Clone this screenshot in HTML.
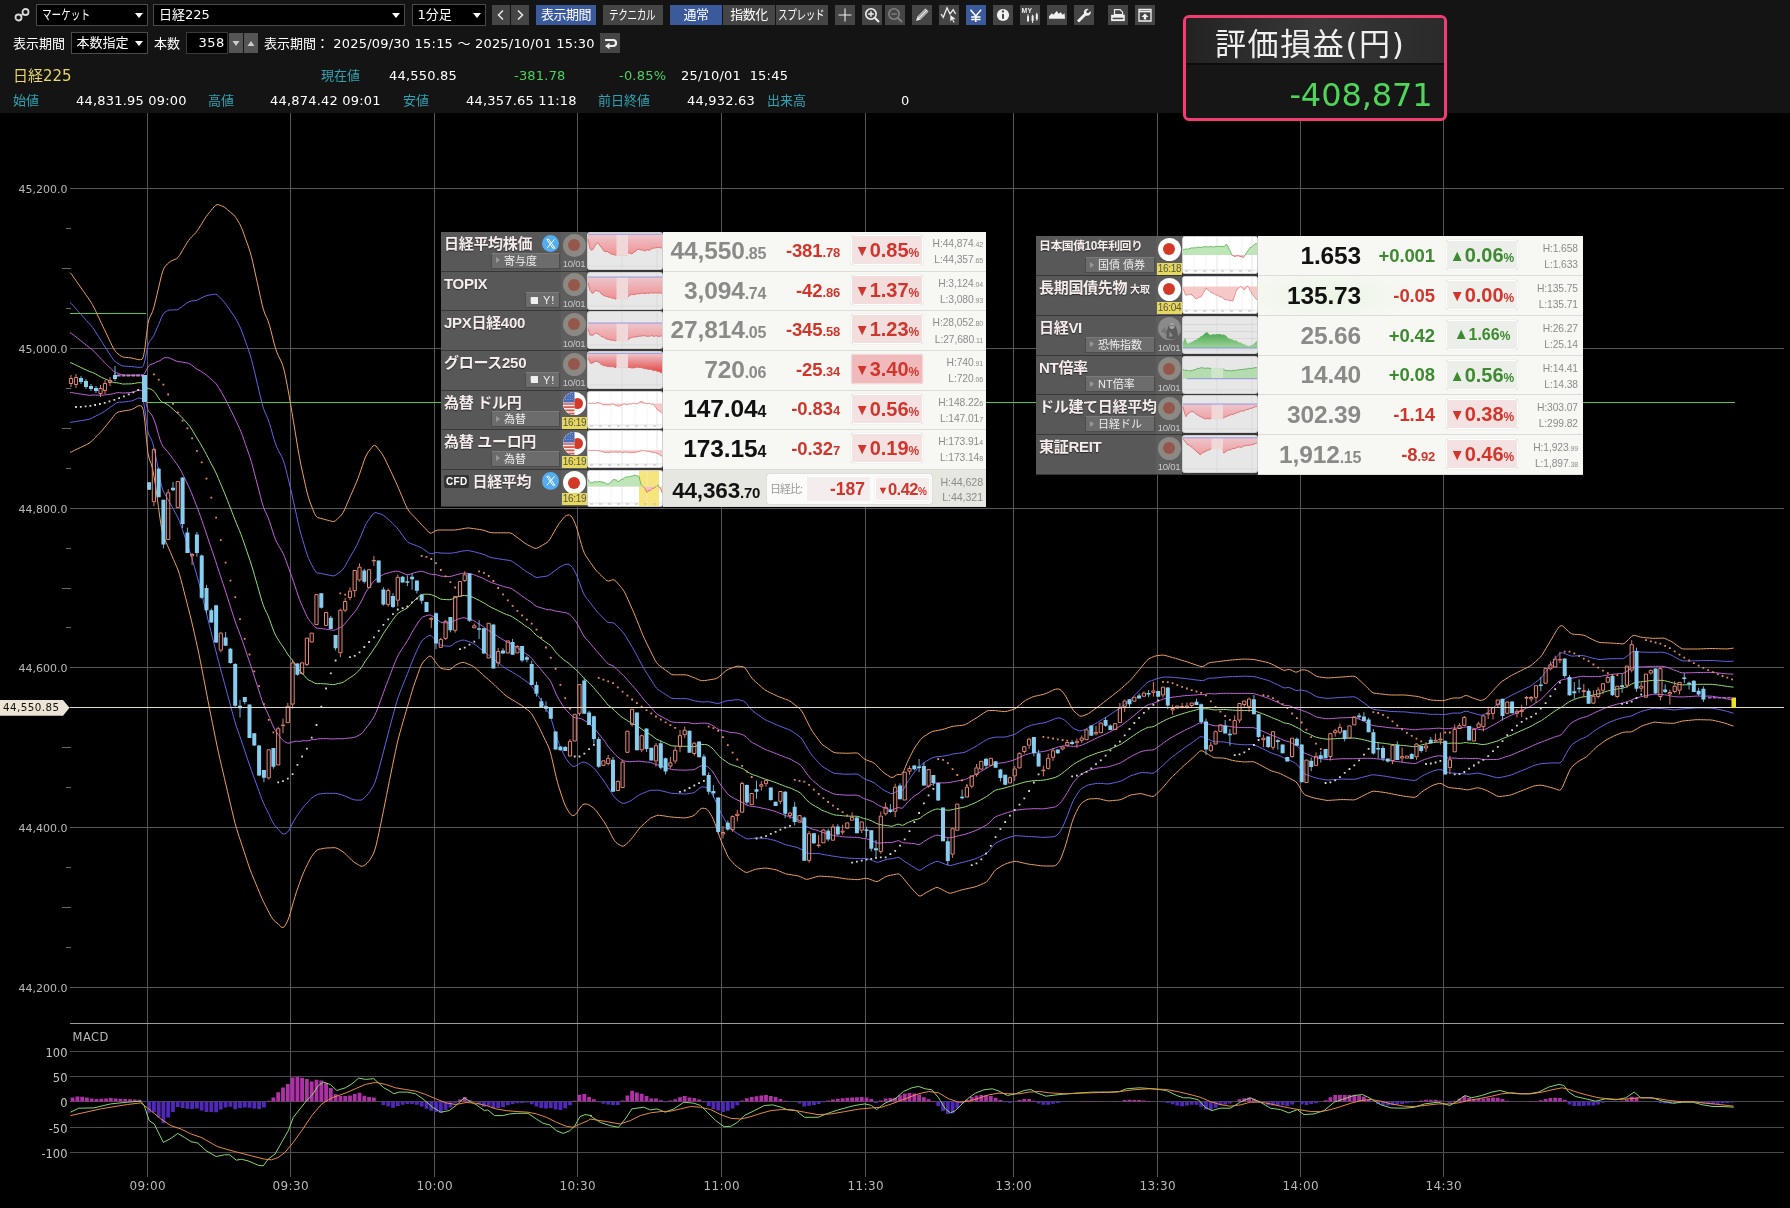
<!DOCTYPE html><html lang="ja"><head><meta charset="utf-8"><title>日経225 チャート</title><style>
*{box-sizing:border-box;margin:0;padding:0}
html,body{width:1790px;height:1208px;background:#000;overflow:hidden}
body{position:relative;font-family:"DejaVu Sans","Liberation Sans","Noto Sans CJK JP",sans-serif;color:#fff;font-size:13px}
#hdr{position:absolute;left:0;top:0;width:1790px;height:113px;background:#141414}
.a{position:absolute;white-space:nowrap}
.sel{position:absolute;height:22px;top:4px;background:#000;border:1px solid #4a4a4a;color:#fff;font-size:13px;line-height:20px;padding-left:5px}
.sel:after{content:"";position:absolute;right:4px;top:7.5px;border:4px solid transparent;border-top:5px solid #fff;border-bottom:0}
.btn{white-space:nowrap;overflow:hidden;position:absolute;top:5px;height:20px;background:#454545;color:#fff;text-align:center;font-size:13px;line-height:20px;letter-spacing:-0.5px}
.btn.on{background:#3a5a9c}
.ib{position:absolute;top:5px;width:20px;height:20px;background:#454545}
.ib svg{position:absolute;left:0;top:0}
.t{position:absolute;white-space:nowrap;font-size:13px;line-height:16px;color:#fff;letter-spacing:0.2px}
.kn{display:inline-block;transform:scaleX(.74);transform-origin:0 50%}
#nb:after{display:none}
.cy{color:#2fa3b4;letter-spacing:0}
.gr{color:#4fd060}
/* panels */
.pn{position:absolute;background:#383838;font-family:"Liberation Sans","Noto Sans CJK JP",sans-serif}
.row{position:absolute;left:0;width:100%;}
.nm{position:absolute;left:0;top:0;width:120px;height:100%;background:#585858}
.nm b{position:absolute;left:3px;top:2px;font-size:15px;line-height:20px;color:#f6ecec;white-space:nowrap;text-shadow:0 1px 1px rgba(0,0,0,.5);letter-spacing:-0.3px}
.sb{position:absolute;right:1px;bottom:2px;height:16px;background:#6c6c6c;border:1px solid #4c4c4c;border-top-color:#7a7a7a;color:#eee;font-size:11px;line-height:14px;padding-left:12px;white-space:nowrap}
.sb:before{content:"";position:absolute;left:4px;top:3.5px;border:3.5px solid transparent;border-left:4px solid #999;border-right:0}
.ic{position:absolute;left:120px;top:0;width:26px;height:100%;background:#5e5e5e}
.ic i{position:absolute;left:1.5px;top:1.5px;width:23px;height:23px;border-radius:50%;background:#8c8883}
.ic i:after{content:"";position:absolute;left:5.5px;top:5.5px;width:12px;height:12px;border-radius:50%;background:#95574b}
.ic i.on{background:#fff}
.ic i.on:after{background:#d03a26}
.ic span{position:absolute;left:0;width:26px;bottom:0.5px;text-align:center;font-size:9.6px;line-height:12px;color:#c8c8c8;letter-spacing:-0.3px}
.ic span.y{background:#e6d75e;color:#554;left:1px;width:25px;bottom:0.5px;font-size:10px}
.mc{position:absolute;left:146px;top:0;width:76px;height:100%;}
.mc svg{position:absolute;left:0;top:0}
.in{position:absolute;left:0;top:0;width:323px;height:100%}
.dt{position:absolute;left:222px;top:0;right:0;height:calc(100% + 1px);background:#f7f7f3;border-bottom:1px solid #dcdcd8;font-family:"Liberation Sans",sans-serif}
.pr{position:absolute;right:220px;top:1.7px;font-weight:bold;font-size:24.5px;line-height:34px;color:#8a8a88;white-space:nowrap;letter-spacing:-0.15px}
.pr.k{color:#111}
.pr s{text-decoration:none;font-size:16px;letter-spacing:-0.3px}
.ch{position:absolute;right:146px;top:3.7px;font-weight:bold;font-size:18.5px;line-height:30px;color:#d0362c;white-space:nowrap;letter-spacing:-0.1px}
.ch s{text-decoration:none;font-size:13px;letter-spacing:-0.2px}
.ch.g,.bd.g{color:#3d8a30}
.bd{position:absolute;left:188px;top:3px;width:72px;height:30px;border:1px solid #fff;border-radius:3px;background:#f4e2e2;box-shadow:0 0 1px rgba(0,0,0,.25);color:#d0362c;font-weight:bold;font-size:20px;line-height:28.5px;text-align:center;white-space:nowrap;letter-spacing:0}
.bd.g{background:#eceeea}
.bd s{text-decoration:none;font-size:12px}
.bd u{text-decoration:none;font-size:15px;display:inline-block;transform:scale(1,1.05);margin-right:0px;position:relative;top:-1px}
.hl{position:absolute;right:3px;top:4px;text-align:right;font-size:10.3px;line-height:16.1px;color:#8c8c8c;white-space:nowrap;letter-spacing:-0.1px}
.hl s{text-decoration:none;font-size:7px;line-height:8px}

.x{position:absolute;left:100.5px;top:2.5px;width:17.5px;height:17.5px;border-radius:50%;background:#55acee}
.x svg{position:absolute;left:0;top:0}
.cfd{display:inline-block;background:#333;color:#fff;font-size:10px;line-height:13px;padding:0 2px;border-radius:2px;vertical-align:2px;margin-right:3px;letter-spacing:.3px;text-shadow:none;font-family:"Liberation Sans",sans-serif}
</style></head><body><div id="wrap" style="position:absolute;left:0;top:0;width:1790px;height:1208px;will-change:transform">
<svg id="chart" width="1790" height="1208" viewBox="0 0 1790 1208" style="position:absolute;left:0;top:0">
<rect x="0" y="113" width="1790" height="1095" fill="#000"/>
<path d="M147.5 113V1177 M290.5 113V1177 M434.5 113V1177 M577.5 113V1177 M721.5 113V1177 M865.5 113V1177 M1013.5 113V1177 M1157.5 113V1177 M1300.5 113V1177 M1443.5 113V1177 M70 188.5H1784 M70 348.5H1784 M70 508.5H1784 M70 667.5H1784 M70 827.5H1784 M70 987.5H1784" stroke="#55555a" stroke-width="1" fill="none"/>
<path d="M70 1023.5H1784" stroke="#9c9c9c" stroke-width="1" fill="none"/>
<path d="M70 1051.5H1784 M70 1076.5H1784 M70 1101.5H1784 M70 1127.5H1784 M70 1152.5H1784" stroke="#4a4a50" stroke-width="1" fill="none"/>
<path d="M66 228.5H71 M62 268.5H71 M66 308.5H71 M66 388.5H71 M62 428.5H71 M66 468.5H71 M66 548.5H71 M62 588.5H71 M66 627.5H71 M66 707.5H71 M62 747.5H71 M66 787.5H71 M66 867.5H71 M62 907.5H71 M66 947.5H71" stroke="#666" stroke-width="1" fill="none"/>
<g font-family="'DejaVu Sans',Verdana,sans-serif" font-size="11" fill="#b8b8b8" text-anchor="end">
<text x="67.5" y="192.8">45,200.0</text>
<text x="67.5" y="352.8">45,000.0</text>
<text x="67.5" y="512.8">44,800.0</text>
<text x="67.5" y="671.8">44,600.0</text>
<text x="67.5" y="831.8">44,400.0</text>
<text x="67.5" y="991.8">44,200.0</text>
</g>
<g font-family="'DejaVu Sans',Verdana,sans-serif" font-size="11.5" fill="#c4c4c4" text-anchor="end">
<text x="67.5" y="1056.5">100</text>
<text x="67.5" y="1081.5">50</text>
<text x="67.5" y="1106.5">0</text>
<text x="67.5" y="1132.5">-50</text>
<text x="67.5" y="1157.5">-100</text>
</g>
<text x="72.5" y="1040.8" font-family="'DejaVu Sans',Verdana,sans-serif" font-size="11.5" letter-spacing="0.5" fill="#b8b8b8">MACD</text>
<g font-family="'DejaVu Sans',Verdana,sans-serif" font-size="12" fill="#b8b8b8" text-anchor="middle" letter-spacing="0.4">
<text x="147.8" y="1189.6">09:00</text>
<text x="290.8" y="1189.6">09:30</text>
<text x="434.8" y="1189.6">10:00</text>
<text x="577.8" y="1189.6">10:30</text>
<text x="721.8" y="1189.6">11:00</text>
<text x="865.8" y="1189.6">11:30</text>
<text x="1013.8" y="1189.6">13:00</text>
<text x="1157.8" y="1189.6">13:30</text>
<text x="1300.8" y="1189.6">14:00</text>
<text x="1443.8" y="1189.6">14:30</text>
</g>
<path d="M70 313.5H146 M147 402.5H1735" stroke="#55c83c" stroke-width="1" fill="none"/>
<path d="M70.0 272.7 L71.5 274.2 L73.0 276.3 L74.5 278.5 L76.0 280.6 L77.5 282.8 L79.0 284.9 L80.5 287.1 L82.0 289.2 L83.5 291.4 L85.0 293.5 L86.5 295.7 L88.0 297.8 L89.5 300.0 L91.0 302.2 L92.5 304.7 L94.0 307.6 L95.5 310.7 L97.0 313.9 L98.5 317.1 L100.0 320.2 L101.5 323.4 L103.0 326.6 L104.5 329.7 L106.0 332.9 L107.5 336.0 L109.0 339.2 L110.5 342.4 L112.0 345.5 L113.5 348.5 L115.0 350.8 L116.5 352.5 L118.0 353.8 L119.5 355.0 L121.0 356.1 L122.5 356.8 L124.0 357.2 L125.5 357.4 L127.0 357.5 L128.5 357.6 L130.0 357.8 L131.5 358.0 L133.0 358.3 L134.5 358.7 L136.0 359.1 L137.5 359.5 L139.0 359.7 L140.5 359.6 L142.0 359.3 L143.5 356.5 L145.0 347.6 L146.5 334.7 L148.0 323.5 L149.5 317.7 L151.0 315.0 L152.5 311.6 L154.0 306.8 L155.5 300.9 L157.0 294.5 L158.5 288.1 L160.0 281.8 L161.5 275.4 L163.0 270.5 L164.5 267.2 L166.0 265.5 L167.5 263.8 L169.0 262.4 L170.5 261.3 L172.0 260.7 L173.5 260.0 L175.0 259.3 L176.5 258.7 L178.0 257.4 L179.5 255.5 L181.0 253.0 L182.5 250.4 L184.0 247.9 L185.5 245.4 L187.0 242.9 L188.5 240.6 L190.0 238.6 L191.5 237.0 L193.0 235.6 L194.5 234.1 L196.0 232.4 L197.5 230.4 L199.0 228.1 L200.5 225.7 L202.0 223.3 L203.5 220.8 L205.0 218.4 L206.5 216.2 L208.0 214.2 L209.5 212.4 L211.0 210.5 L212.5 208.7 L214.0 206.9 L215.5 205.4 L217.0 204.7 L218.5 204.7 L220.0 205.3 L221.5 205.8 L223.0 206.4 L224.5 207.3 L226.0 208.4 L227.5 209.7 L229.0 210.9 L230.5 212.2 L232.0 213.5 L233.5 214.7 L235.0 216.4 L236.5 218.5 L238.0 221.0 L239.5 223.5 L241.0 226.6 L242.5 230.2 L244.0 234.4 L245.5 238.6 L247.0 242.8 L248.5 247.0 L250.0 251.5 L251.5 256.9 L253.0 263.1 L254.5 270.0 L256.0 276.8 L257.5 283.7 L259.0 290.5 L260.5 297.4 L262.0 304.2 L263.5 309.8 L265.0 314.2 L266.5 317.2 L268.0 320.8 L269.5 325.4 L271.0 331.0 L272.5 337.0 L274.0 343.0 L275.5 348.3 L277.0 352.7 L278.5 356.0 L280.0 359.0 L281.5 362.0 L283.0 366.1 L284.5 371.8 L286.0 379.1 L287.5 386.9 L289.0 395.0 L290.5 403.5 L292.0 412.5 L293.5 421.7 L295.0 430.8 L296.5 440.0 L298.0 449.2 L299.5 457.6 L301.0 465.3 L302.5 472.1 L304.0 478.9 L305.5 485.7 L307.0 492.1 L308.5 497.6 L310.0 502.1 L311.5 506.0 L313.0 509.8 L314.5 513.5 L316.0 516.1 L317.5 517.5 L319.0 517.9 L320.5 518.3 L322.0 518.7 L323.5 519.1 L325.0 519.5 L326.5 519.9 L328.0 520.3 L329.5 520.7 L331.0 521.1 L332.5 521.5 L334.0 521.4 L335.5 520.7 L337.0 519.4 L338.5 517.9 L340.0 516.4 L341.5 514.9 L343.0 512.7 L344.5 509.9 L346.0 506.4 L347.5 502.9 L349.0 499.4 L350.5 495.9 L352.0 492.5 L353.5 489.1 L355.0 485.7 L356.5 482.2 L358.0 478.3 L359.5 474.1 L361.0 469.7 L362.5 465.3 L364.0 460.9 L365.5 457.0 L367.0 454.0 L368.5 451.7 L370.0 449.8 L371.5 447.8 L373.0 445.9 L374.5 445.3 L376.0 446.0 L377.5 448.0 L379.0 449.9 L380.5 451.8 L382.0 453.9 L383.5 456.3 L385.0 459.2 L386.5 462.3 L388.0 465.4 L389.5 468.5 L391.0 471.7 L392.5 474.8 L394.0 478.0 L395.5 481.3 L397.0 484.7 L398.5 488.2 L400.0 491.7 L401.5 495.2 L403.0 498.8 L404.5 502.3 L406.0 505.8 L407.5 508.8 L409.0 511.1 L410.5 512.9 L412.0 514.5 L413.5 516.1 L415.0 517.6 L416.5 519.2 L418.0 520.8 L419.5 522.4 L421.0 524.0 L422.5 525.6 L424.0 527.2 L425.5 528.8 L427.0 530.4 L428.5 532.0 L430.0 533.0 L431.5 533.1 L433.0 532.3 L434.5 531.4 L436.0 530.6 L437.5 530.1 L439.0 530.0 L440.5 530.0 L442.0 530.0 L443.5 530.0 L445.0 530.0 L446.5 530.0 L448.0 530.0 L449.5 530.0 L451.0 530.0 L452.5 530.0 L454.0 530.0 L455.5 529.9 L457.0 529.7 L458.5 529.5 L460.0 529.2 L461.5 529.0 L463.0 528.7 L464.5 528.4 L466.0 528.2 L467.5 528.0 L469.0 528.0 L470.5 528.2 L472.0 528.4 L473.5 528.6 L475.0 528.8 L476.5 529.0 L478.0 529.3 L479.5 529.5 L481.0 529.7 L482.5 530.0 L484.0 530.4 L485.5 530.9 L487.0 531.4 L488.5 532.0 L490.0 532.4 L491.5 532.7 L493.0 532.8 L494.5 532.8 L496.0 532.8 L497.5 532.8 L499.0 532.8 L500.5 532.8 L502.0 532.8 L503.5 532.8 L505.0 532.8 L506.5 532.8 L508.0 532.8 L509.5 532.8 L511.0 533.2 L512.5 533.9 L514.0 535.0 L515.5 536.2 L517.0 537.3 L518.5 538.4 L520.0 539.5 L521.5 540.6 L523.0 541.8 L524.5 542.9 L526.0 543.9 L527.5 544.8 L529.0 545.5 L530.5 546.2 L532.0 547.0 L533.5 547.8 L535.0 548.3 L536.5 548.3 L538.0 547.8 L539.5 546.9 L541.0 546.1 L542.5 545.2 L544.0 544.3 L545.5 543.4 L547.0 542.5 L548.5 541.1 L550.0 539.1 L551.5 536.5 L553.0 533.9 L554.5 531.2 L556.0 528.6 L557.5 526.0 L559.0 523.7 L560.5 521.7 L562.0 519.9 L563.5 518.0 L565.0 516.4 L566.5 515.4 L568.0 515.0 L569.5 515.0 L571.0 516.0 L572.5 518.0 L574.0 521.0 L575.5 524.5 L577.0 528.9 L578.5 534.0 L580.0 539.4 L581.5 544.7 L583.0 549.6 L584.5 553.4 L586.0 556.2 L587.5 558.3 L589.0 560.5 L590.5 562.6 L592.0 564.8 L593.5 566.9 L595.0 569.0 L596.5 570.8 L598.0 572.4 L599.5 573.9 L601.0 575.3 L602.5 576.8 L604.0 578.2 L605.5 579.7 L607.0 580.7 L608.5 581.1 L610.0 580.8 L611.5 580.1 L613.0 579.7 L614.5 580.1 L616.0 581.3 L617.5 583.1 L619.0 584.8 L620.5 586.5 L622.0 588.3 L623.5 590.4 L625.0 593.0 L626.5 596.2 L628.0 599.6 L629.5 602.9 L631.0 606.3 L632.5 609.6 L634.0 613.1 L635.5 616.8 L637.0 620.5 L638.5 624.2 L640.0 628.0 L641.5 631.8 L643.0 635.4 L644.5 638.8 L646.0 642.0 L647.5 645.0 L649.0 648.0 L650.5 651.1 L652.0 654.1 L653.5 657.1 L655.0 660.1 L656.5 662.6 L658.0 664.4 L659.5 665.6 L661.0 666.7 L662.5 667.8 L664.0 669.0 L665.5 670.1 L667.0 671.2 L668.5 672.3 L670.0 673.5 L671.5 674.3 L673.0 674.7 L674.5 674.8 L676.0 674.8 L677.5 674.8 L679.0 674.8 L680.5 674.8 L682.0 674.8 L683.5 674.8 L685.0 674.8 L686.5 675.0 L688.0 675.3 L689.5 675.9 L691.0 676.5 L692.5 677.1 L694.0 677.7 L695.5 678.3 L697.0 679.0 L698.5 679.6 L700.0 680.2 L701.5 680.6 L703.0 680.7 L704.5 680.6 L706.0 680.4 L707.5 680.1 L709.0 679.9 L710.5 679.6 L712.0 679.4 L713.5 679.2 L715.0 678.9 L716.5 678.4 L718.0 677.6 L719.5 676.4 L721.0 675.1 L722.5 673.8 L724.0 672.4 L725.5 671.1 L727.0 670.0 L728.5 669.2 L730.0 668.7 L731.5 668.1 L733.0 667.5 L734.5 667.0 L736.0 666.5 L737.5 666.2 L739.0 666.3 L740.5 666.5 L742.0 666.6 L743.5 667.0 L745.0 668.1 L746.5 669.9 L748.0 672.2 L749.5 674.6 L751.0 676.9 L752.5 678.8 L754.0 680.4 L755.5 681.7 L757.0 683.1 L758.5 684.4 L760.0 685.7 L761.5 687.1 L763.0 688.4 L764.5 689.6 L766.0 690.6 L767.5 691.3 L769.0 692.1 L770.5 692.8 L772.0 693.5 L773.5 694.3 L775.0 695.0 L776.5 695.7 L778.0 696.4 L779.5 697.0 L781.0 697.5 L782.5 698.1 L784.0 698.7 L785.5 699.3 L787.0 699.8 L788.5 700.4 L790.0 701.2 L791.5 702.2 L793.0 703.4 L794.5 704.6 L796.0 705.7 L797.5 706.9 L799.0 708.1 L800.5 709.5 L802.0 711.6 L803.5 714.2 L805.0 717.2 L806.5 720.2 L808.0 723.2 L809.5 726.2 L811.0 729.0 L812.5 731.4 L814.0 733.6 L815.5 735.7 L817.0 737.8 L818.5 739.8 L820.0 741.9 L821.5 743.7 L823.0 745.1 L824.5 746.1 L826.0 747.2 L827.5 748.2 L829.0 749.3 L830.5 750.3 L832.0 751.4 L833.5 752.2 L835.0 752.7 L836.5 752.9 L838.0 753.0 L839.5 753.0 L841.0 753.1 L842.5 753.1 L844.0 753.2 L845.5 753.2 L847.0 753.3 L848.5 753.2 L850.0 753.2 L851.5 753.1 L853.0 753.0 L854.5 753.0 L856.0 752.9 L857.5 753.2 L859.0 754.0 L860.5 755.4 L862.0 756.9 L863.5 758.3 L865.0 759.3 L866.5 760.0 L868.0 760.5 L869.5 761.1 L871.0 761.7 L872.5 762.2 L874.0 763.1 L875.5 764.3 L877.0 765.9 L878.5 767.4 L880.0 768.9 L881.5 770.4 L883.0 771.9 L884.5 773.2 L886.0 774.2 L887.5 775.2 L889.0 776.1 L890.5 777.1 L892.0 777.4 L893.5 777.0 L895.0 776.0 L896.5 775.0 L898.0 774.5 L899.5 774.5 L901.0 774.6 L902.5 773.2 L904.0 770.4 L905.5 766.6 L907.0 763.1 L908.5 759.8 L910.0 756.8 L911.5 753.8 L913.0 750.8 L914.5 748.1 L916.0 745.8 L917.5 743.8 L919.0 741.7 L920.5 739.7 L922.0 738.1 L923.5 736.8 L925.0 735.8 L926.5 734.9 L928.0 733.9 L929.5 733.0 L931.0 732.1 L932.5 731.5 L934.0 731.1 L935.5 730.8 L937.0 730.5 L938.5 730.3 L940.0 730.0 L941.5 729.7 L943.0 729.3 L944.5 728.9 L946.0 728.4 L947.5 727.9 L949.0 727.4 L950.5 726.9 L952.0 726.5 L953.5 726.2 L955.0 726.1 L956.5 725.9 L958.0 725.7 L959.5 725.6 L961.0 725.4 L962.5 725.3 L964.0 725.0 L965.5 724.4 L967.0 723.7 L968.5 722.8 L970.0 721.8 L971.5 720.9 L973.0 720.0 L974.5 719.1 L976.0 718.2 L977.5 717.2 L979.0 716.2 L980.5 715.2 L982.0 714.2 L983.5 713.2 L985.0 712.1 L986.5 711.3 L988.0 710.7 L989.5 710.5 L991.0 710.5 L992.5 710.5 L994.0 710.5 L995.5 710.6 L997.0 710.8 L998.5 711.0 L1000.0 711.2 L1001.5 711.3 L1003.0 711.5 L1004.5 711.6 L1006.0 711.5 L1007.5 711.1 L1009.0 710.7 L1010.5 710.3 L1012.0 709.8 L1013.5 709.4 L1015.0 708.7 L1016.5 707.7 L1018.0 706.4 L1019.5 705.2 L1021.0 703.9 L1022.5 702.6 L1024.0 701.4 L1025.5 700.4 L1027.0 699.5 L1028.5 698.8 L1030.0 698.1 L1031.5 697.4 L1033.0 696.8 L1034.5 696.3 L1036.0 696.0 L1037.5 695.7 L1039.0 695.3 L1040.5 695.0 L1042.0 694.7 L1043.5 694.3 L1045.0 693.9 L1046.5 693.3 L1048.0 692.6 L1049.5 691.8 L1051.0 691.1 L1052.5 690.4 L1054.0 689.7 L1055.5 689.2 L1057.0 689.0 L1058.5 689.0 L1060.0 689.6 L1061.5 690.8 L1063.0 692.5 L1064.5 694.5 L1066.0 696.8 L1067.5 699.5 L1069.0 702.5 L1070.5 705.5 L1072.0 708.3 L1073.5 710.5 L1075.0 712.2 L1076.5 713.4 L1078.0 714.7 L1079.5 715.8 L1081.0 716.2 L1082.5 716.1 L1084.0 715.5 L1085.5 714.9 L1087.0 714.3 L1088.5 713.5 L1090.0 712.6 L1091.5 711.5 L1093.0 710.4 L1094.5 709.3 L1096.0 708.2 L1097.5 707.1 L1099.0 706.0 L1100.5 704.8 L1102.0 703.7 L1103.5 702.5 L1105.0 701.3 L1106.5 700.2 L1108.0 699.0 L1109.5 697.8 L1111.0 696.7 L1112.5 695.5 L1114.0 694.3 L1115.5 693.1 L1117.0 692.0 L1118.5 690.8 L1120.0 689.6 L1121.5 688.3 L1123.0 687.0 L1124.5 685.7 L1126.0 684.3 L1127.5 683.0 L1129.0 681.6 L1130.5 680.1 L1132.0 678.5 L1133.5 676.7 L1135.0 674.9 L1136.5 673.1 L1138.0 671.3 L1139.5 669.5 L1141.0 667.7 L1142.5 665.8 L1144.0 664.0 L1145.5 662.1 L1147.0 660.4 L1148.5 659.1 L1150.0 658.2 L1151.5 657.6 L1153.0 656.9 L1154.5 656.3 L1156.0 655.9 L1157.5 655.6 L1159.0 655.4 L1160.5 655.3 L1162.0 655.1 L1163.5 655.2 L1165.0 655.4 L1166.5 655.8 L1168.0 656.2 L1169.5 656.7 L1171.0 657.1 L1172.5 657.5 L1174.0 657.9 L1175.5 658.4 L1177.0 658.8 L1178.5 659.3 L1180.0 659.7 L1181.5 660.2 L1183.0 660.6 L1184.5 661.1 L1186.0 661.5 L1187.5 662.0 L1189.0 662.5 L1190.5 663.1 L1192.0 663.6 L1193.5 664.1 L1195.0 664.6 L1196.5 665.1 L1198.0 665.6 L1199.5 666.1 L1201.0 666.5 L1202.5 666.5 L1204.0 666.0 L1205.5 665.0 L1207.0 664.0 L1208.5 663.2 L1210.0 662.7 L1211.5 662.4 L1213.0 662.2 L1214.5 662.1 L1216.0 661.9 L1217.5 661.7 L1219.0 661.5 L1220.5 661.3 L1222.0 661.1 L1223.5 660.9 L1225.0 660.7 L1226.5 660.6 L1228.0 660.4 L1229.5 660.2 L1231.0 660.0 L1232.5 659.9 L1234.0 659.8 L1235.5 659.7 L1237.0 659.5 L1238.5 659.4 L1240.0 659.3 L1241.5 659.2 L1243.0 659.1 L1244.5 659.1 L1246.0 659.1 L1247.5 659.2 L1249.0 659.2 L1250.5 659.3 L1252.0 659.4 L1253.5 659.5 L1255.0 659.7 L1256.5 660.0 L1258.0 660.4 L1259.5 660.7 L1261.0 661.0 L1262.5 661.4 L1264.0 661.7 L1265.5 662.0 L1267.0 662.4 L1268.5 662.8 L1270.0 663.3 L1271.5 664.0 L1273.0 664.8 L1274.5 665.5 L1276.0 666.3 L1277.5 667.0 L1279.0 667.8 L1280.5 668.7 L1282.0 669.6 L1283.5 670.2 L1285.0 670.3 L1286.5 669.9 L1288.0 669.5 L1289.5 669.5 L1291.0 670.0 L1292.5 670.7 L1294.0 671.5 L1295.5 672.1 L1297.0 672.0 L1298.5 671.4 L1300.0 670.5 L1301.5 670.0 L1303.0 669.9 L1304.5 669.9 L1306.0 670.1 L1307.5 670.6 L1309.0 671.5 L1310.5 672.4 L1312.0 673.4 L1313.5 674.4 L1315.0 675.4 L1316.5 676.2 L1318.0 676.7 L1319.5 677.0 L1321.0 677.2 L1322.5 677.4 L1324.0 677.6 L1325.5 677.8 L1327.0 677.9 L1328.5 677.9 L1330.0 677.8 L1331.5 677.7 L1333.0 677.6 L1334.5 677.5 L1336.0 677.4 L1337.5 677.3 L1339.0 677.2 L1340.5 677.1 L1342.0 677.0 L1343.5 676.9 L1345.0 676.8 L1346.5 676.7 L1348.0 676.5 L1349.5 676.4 L1351.0 676.3 L1352.5 676.2 L1354.0 676.2 L1355.5 676.8 L1357.0 677.8 L1358.5 679.2 L1360.0 680.6 L1361.5 682.0 L1363.0 683.4 L1364.5 684.9 L1366.0 686.4 L1367.5 687.9 L1369.0 689.3 L1370.5 690.8 L1372.0 692.1 L1373.5 692.9 L1375.0 693.3 L1376.5 693.4 L1378.0 693.6 L1379.5 693.8 L1381.0 694.0 L1382.5 694.1 L1384.0 694.3 L1385.5 694.5 L1387.0 694.7 L1388.5 694.8 L1390.0 694.9 L1391.5 695.0 L1393.0 695.0 L1394.5 695.0 L1396.0 695.0 L1397.5 695.0 L1399.0 695.0 L1400.5 695.0 L1402.0 695.0 L1403.5 695.0 L1405.0 695.1 L1406.5 695.2 L1408.0 695.3 L1409.5 695.5 L1411.0 695.7 L1412.5 695.9 L1414.0 696.0 L1415.5 696.2 L1417.0 696.4 L1418.5 696.7 L1420.0 697.1 L1421.5 697.5 L1423.0 697.9 L1424.5 698.3 L1426.0 698.7 L1427.5 699.2 L1429.0 699.6 L1430.5 699.9 L1432.0 700.1 L1433.5 700.2 L1435.0 700.3 L1436.5 700.4 L1438.0 700.5 L1439.5 700.6 L1441.0 700.7 L1442.5 700.7 L1444.0 700.5 L1445.5 700.1 L1447.0 699.7 L1448.5 699.3 L1450.0 698.8 L1451.5 698.4 L1453.0 698.1 L1454.5 698.0 L1456.0 698.0 L1457.5 698.0 L1459.0 698.0 L1460.5 697.7 L1462.0 697.2 L1463.5 696.3 L1465.0 695.7 L1466.5 695.6 L1468.0 695.9 L1469.5 696.6 L1471.0 697.2 L1472.5 697.8 L1474.0 698.4 L1475.5 698.9 L1477.0 699.4 L1478.5 700.0 L1480.0 700.3 L1481.5 700.3 L1483.0 699.9 L1484.5 699.3 L1486.0 698.3 L1487.5 696.9 L1489.0 695.2 L1490.5 693.5 L1492.0 691.8 L1493.5 690.2 L1495.0 688.5 L1496.5 686.9 L1498.0 685.3 L1499.5 683.6 L1501.0 682.2 L1502.5 681.0 L1504.0 680.1 L1505.5 679.1 L1507.0 678.2 L1508.5 677.2 L1510.0 676.3 L1511.5 675.4 L1513.0 674.6 L1514.5 673.8 L1516.0 673.1 L1517.5 672.4 L1519.0 671.6 L1520.5 670.9 L1522.0 670.1 L1523.5 669.3 L1525.0 668.6 L1526.5 667.9 L1528.0 667.1 L1529.5 666.4 L1531.0 665.4 L1532.5 664.3 L1534.0 663.0 L1535.5 661.6 L1537.0 660.3 L1538.5 659.0 L1540.0 657.5 L1541.5 655.7 L1543.0 653.4 L1544.5 650.9 L1546.0 648.4 L1547.5 645.9 L1549.0 643.4 L1550.5 640.8 L1552.0 638.3 L1553.5 635.7 L1555.0 633.1 L1556.5 630.6 L1558.0 628.4 L1559.5 626.4 L1561.0 625.7 L1562.5 625.9 L1564.0 627.2 L1565.5 628.6 L1567.0 630.0 L1568.5 631.5 L1570.0 632.8 L1571.5 633.7 L1573.0 634.2 L1574.5 634.3 L1576.0 634.4 L1577.5 634.5 L1579.0 634.6 L1580.5 634.7 L1582.0 634.9 L1583.5 635.2 L1585.0 635.7 L1586.5 636.4 L1588.0 637.2 L1589.5 638.0 L1591.0 638.8 L1592.5 639.5 L1594.0 640.2 L1595.5 640.9 L1597.0 641.6 L1598.5 642.1 L1600.0 642.5 L1601.5 642.6 L1603.0 642.7 L1604.5 642.7 L1606.0 642.8 L1607.5 642.8 L1609.0 642.9 L1610.5 643.0 L1612.0 643.1 L1613.5 643.2 L1615.0 643.3 L1616.5 643.4 L1618.0 643.5 L1619.5 643.6 L1621.0 643.8 L1622.5 643.9 L1624.0 643.5 L1625.5 642.5 L1627.0 641.0 L1628.5 639.5 L1630.0 638.0 L1631.5 636.5 L1633.0 635.6 L1634.5 635.4 L1636.0 635.8 L1637.5 636.2 L1639.0 636.7 L1640.5 637.0 L1642.0 637.3 L1643.5 637.5 L1645.0 637.7 L1646.5 637.8 L1648.0 637.9 L1649.5 638.0 L1651.0 638.2 L1652.5 638.3 L1654.0 638.3 L1655.5 638.3 L1657.0 638.3 L1658.5 638.2 L1660.0 638.2 L1661.5 638.1 L1663.0 638.1 L1664.5 638.4 L1666.0 638.9 L1667.5 639.7 L1669.0 640.4 L1670.5 641.1 L1672.0 641.9 L1673.5 642.9 L1675.0 644.0 L1676.5 645.1 L1678.0 646.1 L1679.5 647.2 L1681.0 648.2 L1682.5 648.8 L1684.0 649.0 L1685.5 649.0 L1687.0 649.0 L1688.5 649.0 L1690.0 649.0 L1691.5 649.0 L1693.0 649.0 L1694.5 649.0 L1696.0 649.0 L1697.5 649.0 L1699.0 648.9 L1700.5 648.9 L1702.0 648.8 L1703.5 648.8 L1705.0 648.7 L1706.5 648.7 L1708.0 648.6 L1709.5 648.6 L1711.0 648.5 L1712.5 648.5 L1714.0 648.6 L1715.5 648.6 L1717.0 648.7 L1718.5 648.7 L1720.0 648.8 L1721.5 648.8 L1723.0 648.9 L1724.5 648.9 L1726.0 648.9 L1727.5 648.9 L1729.0 648.7 L1730.5 648.5 L1732.0 648.3 L1733.5 648.1" stroke="#f0a05e" stroke-width="1" fill="none" stroke-linejoin="round"/>
<path d="M70.0 452.3 L71.5 451.8 L73.0 451.1 L74.5 450.3 L76.0 449.6 L77.5 448.9 L79.0 448.2 L80.5 447.5 L82.0 446.7 L83.5 446.0 L85.0 445.3 L86.5 444.6 L88.0 443.9 L89.5 442.9 L91.0 441.7 L92.5 440.3 L94.0 438.8 L95.5 437.3 L97.0 435.7 L98.5 434.2 L100.0 432.7 L101.5 431.1 L103.0 429.4 L104.5 427.6 L106.0 425.7 L107.5 423.8 L109.0 422.0 L110.5 420.1 L112.0 418.2 L113.5 416.4 L115.0 414.5 L116.5 413.0 L118.0 412.0 L119.5 411.6 L121.0 411.4 L122.5 411.1 L124.0 410.9 L125.5 410.6 L127.0 410.4 L128.5 410.2 L130.0 409.9 L131.5 409.5 L133.0 408.9 L134.5 408.1 L136.0 407.1 L137.5 406.2 L139.0 405.7 L140.5 405.8 L142.0 406.5 L143.5 410.7 L145.0 422.8 L146.5 439.8 L148.0 453.6 L149.5 459.8 L151.0 463.2 L152.5 468.5 L154.0 476.3 L155.5 485.6 L157.0 496.3 L158.5 507.5 L160.0 518.6 L161.5 527.8 L163.0 534.4 L164.5 538.5 L166.0 542.1 L167.5 545.6 L169.0 549.0 L170.5 552.5 L172.0 555.9 L173.5 559.4 L175.0 562.8 L176.5 566.3 L178.0 570.0 L179.5 574.5 L181.0 579.8 L182.5 585.6 L184.0 591.4 L185.5 597.3 L187.0 603.1 L188.5 608.9 L190.0 614.8 L191.5 620.9 L193.0 627.3 L194.5 633.9 L196.0 640.6 L197.5 647.3 L199.0 654.4 L200.5 661.8 L202.0 669.6 L203.5 677.4 L205.0 685.2 L206.5 693.0 L208.0 700.8 L209.5 708.4 L211.0 716.0 L212.5 723.4 L214.0 730.9 L215.5 738.4 L217.0 745.7 L218.5 752.7 L220.0 759.3 L221.5 765.7 L223.0 772.1 L224.5 778.6 L226.0 785.0 L227.5 791.4 L229.0 797.9 L230.5 804.3 L232.0 810.7 L233.5 817.1 L235.0 823.1 L236.5 828.5 L238.0 833.2 L239.5 837.8 L241.0 842.3 L242.5 846.8 L244.0 851.4 L245.5 855.9 L247.0 860.4 L248.5 865.0 L250.0 869.3 L251.5 873.3 L253.0 877.0 L254.5 880.6 L256.0 884.2 L257.5 887.8 L259.0 891.4 L260.5 895.0 L262.0 898.5 L263.5 901.8 L265.0 904.8 L266.5 907.6 L268.0 910.5 L269.5 913.4 L271.0 916.2 L272.5 918.7 L274.0 920.5 L275.5 921.8 L277.0 923.0 L278.5 924.3 L280.0 925.7 L281.5 927.3 L283.0 927.5 L284.5 926.5 L286.0 924.1 L287.5 921.1 L289.0 917.2 L290.5 912.2 L292.0 906.9 L293.5 901.7 L295.0 896.6 L296.5 891.8 L298.0 887.5 L299.5 883.3 L301.0 879.1 L302.5 875.1 L304.0 871.6 L305.5 868.3 L307.0 865.2 L308.5 862.2 L310.0 859.2 L311.5 856.7 L313.0 854.5 L314.5 852.7 L316.0 851.0 L317.5 849.9 L319.0 849.2 L320.5 849.0 L322.0 848.7 L323.5 848.4 L325.0 848.2 L326.5 848.0 L328.0 847.9 L329.5 847.9 L331.0 847.8 L332.5 847.7 L334.0 847.7 L335.5 847.8 L337.0 848.3 L338.5 849.0 L340.0 849.9 L341.5 850.8 L343.0 851.8 L344.5 853.0 L346.0 854.4 L347.5 855.9 L349.0 857.4 L350.5 858.9 L352.0 860.4 L353.5 861.7 L355.0 862.8 L356.5 863.6 L358.0 864.5 L359.5 865.4 L361.0 866.2 L362.5 866.3 L364.0 865.7 L365.5 864.5 L367.0 863.3 L368.5 861.7 L370.0 859.7 L371.5 857.1 L373.0 854.5 L374.5 850.9 L376.0 845.8 L377.5 839.3 L379.0 832.3 L380.5 825.2 L382.0 817.9 L383.5 810.5 L385.0 803.0 L386.5 795.5 L388.0 788.0 L389.5 780.5 L391.0 773.1 L392.5 765.7 L394.0 758.4 L395.5 751.2 L397.0 744.2 L398.5 737.9 L400.0 732.4 L401.5 727.2 L403.0 721.9 L404.5 716.8 L406.0 711.6 L407.5 706.5 L409.0 701.5 L410.5 696.4 L412.0 691.4 L413.5 686.7 L415.0 682.3 L416.5 678.0 L418.0 673.8 L419.5 669.5 L421.0 665.8 L422.5 663.0 L424.0 661.1 L425.5 659.6 L427.0 658.1 L428.5 656.6 L430.0 656.0 L431.5 656.6 L433.0 658.4 L434.5 660.5 L436.0 662.6 L437.5 664.6 L439.0 666.5 L440.5 667.9 L442.0 668.7 L443.5 668.9 L445.0 669.1 L446.5 669.3 L448.0 669.5 L449.5 669.5 L451.0 668.9 L452.5 667.8 L454.0 666.4 L455.5 665.2 L457.0 664.3 L458.5 663.7 L460.0 663.1 L461.5 662.6 L463.0 662.4 L464.5 662.6 L466.0 663.2 L467.5 663.8 L469.0 664.4 L470.5 665.0 L472.0 665.7 L473.5 666.6 L475.0 667.8 L476.5 669.1 L478.0 670.4 L479.5 671.7 L481.0 673.0 L482.5 674.4 L484.0 675.7 L485.5 677.0 L487.0 678.3 L488.5 679.6 L490.0 681.0 L491.5 682.3 L493.0 683.6 L494.5 685.0 L496.0 686.5 L497.5 687.9 L499.0 689.3 L500.5 690.8 L502.0 692.2 L503.5 693.6 L505.0 695.0 L506.5 696.2 L508.0 697.2 L509.5 698.1 L511.0 699.0 L512.5 699.9 L514.0 700.8 L515.5 701.7 L517.0 702.6 L518.5 703.5 L520.0 704.4 L521.5 705.4 L523.0 706.5 L524.5 707.6 L526.0 708.8 L527.5 709.9 L529.0 711.0 L530.5 712.5 L532.0 714.5 L533.5 717.0 L535.0 719.7 L536.5 722.4 L538.0 725.2 L539.5 728.1 L541.0 731.2 L542.5 734.3 L544.0 737.5 L545.5 740.6 L547.0 743.7 L548.5 746.9 L550.0 751.2 L551.5 756.6 L553.0 763.2 L554.5 769.8 L556.0 776.4 L557.5 782.3 L559.0 787.5 L560.5 792.0 L562.0 796.6 L563.5 801.1 L565.0 804.9 L566.5 808.0 L568.0 810.5 L569.5 812.9 L571.0 814.7 L572.5 815.6 L574.0 815.5 L575.5 814.4 L577.0 812.6 L578.5 810.3 L580.0 808.1 L581.5 806.0 L583.0 804.6 L584.5 804.0 L586.0 804.0 L587.5 804.3 L589.0 804.9 L590.5 805.9 L592.0 806.9 L593.5 808.0 L595.0 809.4 L596.5 811.1 L598.0 813.2 L599.5 815.3 L601.0 817.4 L602.5 819.5 L604.0 821.7 L605.5 824.1 L607.0 826.8 L608.5 829.6 L610.0 832.5 L611.5 835.4 L613.0 838.2 L614.5 840.6 L616.0 842.4 L617.5 843.6 L619.0 844.5 L620.5 845.4 L622.0 846.1 L623.5 846.1 L625.0 845.2 L626.5 843.9 L628.0 842.6 L629.5 841.1 L631.0 839.4 L632.5 837.5 L634.0 835.5 L635.5 833.6 L637.0 831.6 L638.5 829.6 L640.0 827.8 L641.5 826.2 L643.0 824.8 L644.5 823.4 L646.0 822.0 L647.5 820.7 L649.0 819.4 L650.5 818.2 L652.0 817.4 L653.5 816.8 L655.0 816.2 L656.5 815.6 L658.0 815.3 L659.5 815.2 L661.0 815.5 L662.5 815.7 L664.0 815.9 L665.5 816.2 L667.0 816.4 L668.5 816.7 L670.0 816.9 L671.5 817.0 L673.0 817.2 L674.5 817.3 L676.0 817.4 L677.5 817.5 L679.0 817.6 L680.5 817.7 L682.0 817.8 L683.5 817.9 L685.0 817.9 L686.5 817.7 L688.0 817.4 L689.5 817.0 L691.0 816.6 L692.5 816.1 L694.0 815.4 L695.5 814.2 L697.0 812.6 L698.5 810.8 L700.0 809.3 L701.5 808.4 L703.0 808.2 L704.5 808.4 L706.0 808.7 L707.5 809.9 L709.0 811.7 L710.5 814.1 L712.0 816.6 L713.5 819.9 L715.0 823.7 L716.5 828.0 L718.0 832.2 L719.5 836.5 L721.0 840.5 L722.5 844.2 L724.0 847.7 L725.5 851.1 L727.0 854.6 L728.5 857.4 L730.0 859.6 L731.5 861.2 L733.0 862.8 L734.5 864.4 L736.0 865.8 L737.5 867.0 L739.0 868.1 L740.5 869.1 L742.0 870.2 L743.5 871.2 L745.0 872.1 L746.5 872.4 L748.0 872.2 L749.5 871.6 L751.0 871.0 L752.5 870.4 L754.0 869.8 L755.5 869.3 L757.0 869.0 L758.5 868.8 L760.0 868.6 L761.5 868.4 L763.0 868.3 L764.5 868.1 L766.0 868.1 L767.5 868.3 L769.0 868.5 L770.5 868.8 L772.0 869.0 L773.5 869.3 L775.0 869.6 L776.5 870.0 L778.0 870.6 L779.5 871.2 L781.0 871.8 L782.5 872.5 L784.0 873.1 L785.5 873.7 L787.0 874.1 L788.5 874.4 L790.0 874.6 L791.5 874.8 L793.0 875.1 L794.5 875.3 L796.0 875.5 L797.5 875.8 L799.0 876.2 L800.5 876.8 L802.0 877.5 L803.5 878.2 L805.0 879.0 L806.5 879.3 L808.0 879.2 L809.5 878.8 L811.0 878.3 L812.5 877.9 L814.0 877.5 L815.5 877.0 L817.0 876.6 L818.5 876.3 L820.0 876.1 L821.5 876.2 L823.0 876.3 L824.5 876.4 L826.0 876.5 L827.5 876.6 L829.0 876.7 L830.5 876.8 L832.0 876.9 L833.5 877.0 L835.0 877.2 L836.5 877.4 L838.0 877.6 L839.5 877.9 L841.0 878.1 L842.5 878.3 L844.0 878.6 L845.5 878.8 L847.0 879.0 L848.5 879.1 L850.0 879.2 L851.5 879.3 L853.0 879.4 L854.5 879.5 L856.0 879.6 L857.5 879.6 L859.0 879.5 L860.5 879.2 L862.0 878.9 L863.5 878.6 L865.0 878.3 L866.5 878.3 L868.0 878.6 L869.5 879.1 L871.0 879.7 L872.5 880.3 L874.0 880.9 L875.5 881.4 L877.0 881.5 L878.5 881.0 L880.0 880.1 L881.5 879.2 L883.0 878.3 L884.5 877.4 L886.0 876.6 L887.5 876.0 L889.0 875.6 L890.5 875.3 L892.0 875.0 L893.5 874.7 L895.0 874.4 L896.5 874.1 L898.0 873.8 L899.5 874.3 L901.0 875.5 L902.5 877.3 L904.0 879.2 L905.5 881.0 L907.0 882.9 L908.5 884.7 L910.0 886.5 L911.5 888.2 L913.0 889.9 L914.5 891.5 L916.0 893.1 L917.5 894.8 L919.0 895.9 L920.5 896.0 L922.0 895.3 L923.5 894.3 L925.0 893.3 L926.5 892.4 L928.0 891.5 L929.5 890.8 L931.0 890.0 L932.5 889.2 L934.0 888.5 L935.5 887.7 L937.0 887.5 L938.5 887.8 L940.0 888.6 L941.5 889.3 L943.0 890.1 L944.5 890.9 L946.0 891.7 L947.5 892.5 L949.0 893.0 L950.5 893.2 L952.0 892.9 L953.5 892.4 L955.0 892.0 L956.5 891.5 L958.0 891.0 L959.5 890.6 L961.0 890.1 L962.5 889.7 L964.0 889.4 L965.5 889.0 L967.0 888.7 L968.5 888.4 L970.0 888.0 L971.5 887.7 L973.0 887.4 L974.5 887.0 L976.0 886.5 L977.5 886.0 L979.0 885.4 L980.5 884.7 L982.0 884.1 L983.5 883.4 L985.0 882.7 L986.5 881.8 L988.0 880.4 L989.5 878.4 L991.0 876.1 L992.5 873.8 L994.0 871.7 L995.5 870.0 L997.0 868.8 L998.5 867.9 L1000.0 867.0 L1001.5 866.1 L1003.0 865.2 L1004.5 864.4 L1006.0 863.8 L1007.5 863.2 L1009.0 862.8 L1010.5 862.3 L1012.0 861.9 L1013.5 861.4 L1015.0 861.3 L1016.5 861.4 L1018.0 861.7 L1019.5 862.1 L1021.0 862.4 L1022.5 862.8 L1024.0 863.1 L1025.5 863.5 L1027.0 863.8 L1028.5 864.1 L1030.0 864.3 L1031.5 864.5 L1033.0 864.7 L1034.5 864.9 L1036.0 865.1 L1037.5 865.3 L1039.0 865.5 L1040.5 865.7 L1042.0 865.9 L1043.5 866.0 L1045.0 866.0 L1046.5 866.0 L1048.0 866.0 L1049.5 866.0 L1051.0 866.0 L1052.5 866.0 L1054.0 866.0 L1055.5 865.4 L1057.0 864.3 L1058.5 862.6 L1060.0 860.2 L1061.5 856.9 L1063.0 852.8 L1064.5 848.6 L1066.0 843.9 L1067.5 838.7 L1069.0 833.2 L1070.5 827.7 L1072.0 822.5 L1073.5 818.2 L1075.0 814.6 L1076.5 811.6 L1078.0 808.6 L1079.5 805.8 L1081.0 803.8 L1082.5 802.4 L1084.0 801.5 L1085.5 800.5 L1087.0 799.7 L1088.5 799.2 L1090.0 798.9 L1091.5 798.8 L1093.0 798.8 L1094.5 798.7 L1096.0 798.6 L1097.5 798.6 L1099.0 798.8 L1100.5 799.1 L1102.0 799.5 L1103.5 799.9 L1105.0 800.2 L1106.5 800.6 L1108.0 800.8 L1109.5 800.9 L1111.0 800.7 L1112.5 800.6 L1114.0 800.4 L1115.5 800.3 L1117.0 800.2 L1118.5 800.0 L1120.0 799.8 L1121.5 799.3 L1123.0 798.7 L1124.5 797.9 L1126.0 797.2 L1127.5 796.4 L1129.0 795.7 L1130.5 795.1 L1132.0 794.7 L1133.5 794.5 L1135.0 794.3 L1136.5 794.1 L1138.0 793.9 L1139.5 793.7 L1141.0 793.7 L1142.5 793.9 L1144.0 794.4 L1145.5 794.8 L1147.0 795.2 L1148.5 795.6 L1150.0 796.0 L1151.5 796.4 L1153.0 796.4 L1154.5 795.8 L1156.0 794.6 L1157.5 793.1 L1159.0 791.6 L1160.5 790.1 L1162.0 788.5 L1163.5 786.8 L1165.0 785.0 L1166.5 783.3 L1168.0 781.5 L1169.5 779.8 L1171.0 778.1 L1172.5 776.6 L1174.0 775.1 L1175.5 773.7 L1177.0 772.2 L1178.5 770.8 L1180.0 769.4 L1181.5 767.9 L1183.0 766.5 L1184.5 765.1 L1186.0 763.8 L1187.5 762.5 L1189.0 761.1 L1190.5 759.8 L1192.0 758.5 L1193.5 757.1 L1195.0 755.7 L1196.5 754.3 L1198.0 752.9 L1199.5 751.4 L1201.0 750.8 L1202.5 750.9 L1204.0 751.8 L1205.5 752.7 L1207.0 753.6 L1208.5 754.5 L1210.0 755.5 L1211.5 756.4 L1213.0 757.2 L1214.5 757.7 L1216.0 757.8 L1217.5 757.9 L1219.0 757.9 L1220.5 757.9 L1222.0 758.0 L1223.5 758.1 L1225.0 758.4 L1226.5 758.7 L1228.0 759.2 L1229.5 759.6 L1231.0 760.0 L1232.5 760.4 L1234.0 760.7 L1235.5 761.0 L1237.0 761.2 L1238.5 761.3 L1240.0 761.5 L1241.5 761.7 L1243.0 761.9 L1244.5 761.9 L1246.0 761.9 L1247.5 761.9 L1249.0 761.8 L1250.5 761.7 L1252.0 761.7 L1253.5 761.8 L1255.0 762.2 L1256.5 763.0 L1258.0 763.8 L1259.5 764.6 L1261.0 765.4 L1262.5 766.2 L1264.0 767.0 L1265.5 767.8 L1267.0 768.6 L1268.5 769.4 L1270.0 770.2 L1271.5 770.8 L1273.0 771.4 L1274.5 771.8 L1276.0 772.2 L1277.5 772.6 L1279.0 773.1 L1280.5 773.7 L1282.0 774.5 L1283.5 775.2 L1285.0 776.0 L1286.5 776.7 L1288.0 777.5 L1289.5 778.3 L1291.0 779.0 L1292.5 779.8 L1294.0 780.6 L1295.5 781.5 L1297.0 783.0 L1298.5 785.2 L1300.0 787.8 L1301.5 790.4 L1303.0 792.8 L1304.5 794.5 L1306.0 795.4 L1307.5 795.9 L1309.0 796.4 L1310.5 796.9 L1312.0 797.4 L1313.5 797.8 L1315.0 798.2 L1316.5 798.5 L1318.0 798.8 L1319.5 799.1 L1321.0 799.3 L1322.5 799.6 L1324.0 799.9 L1325.5 800.2 L1327.0 800.4 L1328.5 800.4 L1330.0 800.3 L1331.5 800.2 L1333.0 800.1 L1334.5 800.0 L1336.0 799.9 L1337.5 799.8 L1339.0 799.7 L1340.5 799.6 L1342.0 799.6 L1343.5 799.6 L1345.0 799.6 L1346.5 799.7 L1348.0 799.7 L1349.5 799.8 L1351.0 799.8 L1352.5 799.9 L1354.0 799.9 L1355.5 799.5 L1357.0 798.9 L1358.5 798.2 L1360.0 797.4 L1361.5 796.6 L1363.0 795.8 L1364.5 795.1 L1366.0 794.3 L1367.5 793.6 L1369.0 792.8 L1370.5 792.1 L1372.0 791.5 L1373.5 791.2 L1375.0 791.3 L1376.5 791.5 L1378.0 791.6 L1379.5 791.8 L1381.0 792.0 L1382.5 792.2 L1384.0 792.4 L1385.5 792.6 L1387.0 792.9 L1388.5 793.2 L1390.0 793.5 L1391.5 793.8 L1393.0 794.1 L1394.5 794.4 L1396.0 794.7 L1397.5 795.0 L1399.0 795.3 L1400.5 795.5 L1402.0 795.8 L1403.5 796.1 L1405.0 796.3 L1406.5 796.5 L1408.0 796.7 L1409.5 796.9 L1411.0 797.0 L1412.5 797.2 L1414.0 797.4 L1415.5 797.0 L1417.0 796.2 L1418.5 794.9 L1420.0 793.6 L1421.5 792.3 L1423.0 791.1 L1424.5 790.1 L1426.0 789.2 L1427.5 788.3 L1429.0 787.4 L1430.5 786.5 L1432.0 785.7 L1433.5 785.0 L1435.0 784.5 L1436.5 784.1 L1438.0 783.7 L1439.5 783.4 L1441.0 783.6 L1442.5 784.2 L1444.0 785.1 L1445.5 786.0 L1447.0 786.8 L1448.5 787.4 L1450.0 787.7 L1451.5 787.9 L1453.0 788.0 L1454.5 788.2 L1456.0 788.3 L1457.5 788.5 L1459.0 788.6 L1460.5 788.8 L1462.0 789.0 L1463.5 789.3 L1465.0 789.5 L1466.5 789.8 L1468.0 789.8 L1469.5 789.6 L1471.0 789.2 L1472.5 788.9 L1474.0 788.5 L1475.5 788.1 L1477.0 787.8 L1478.5 787.9 L1480.0 788.1 L1481.5 788.6 L1483.0 789.1 L1484.5 789.6 L1486.0 790.2 L1487.5 790.9 L1489.0 791.7 L1490.5 792.5 L1492.0 793.3 L1493.5 794.2 L1495.0 795.0 L1496.5 795.8 L1498.0 796.3 L1499.5 796.6 L1501.0 796.4 L1502.5 796.2 L1504.0 796.0 L1505.5 795.8 L1507.0 795.6 L1508.5 795.4 L1510.0 795.1 L1511.5 794.7 L1513.0 794.2 L1514.5 793.6 L1516.0 793.0 L1517.5 792.4 L1519.0 791.8 L1520.5 791.2 L1522.0 790.6 L1523.5 790.0 L1525.0 789.4 L1526.5 788.8 L1528.0 788.2 L1529.5 787.6 L1531.0 787.0 L1532.5 786.5 L1534.0 786.0 L1535.5 785.7 L1537.0 785.5 L1538.5 785.3 L1540.0 785.2 L1541.5 785.3 L1543.0 785.5 L1544.5 785.9 L1546.0 786.2 L1547.5 786.6 L1549.0 787.0 L1550.5 787.4 L1552.0 787.8 L1553.5 788.3 L1555.0 788.8 L1556.5 789.3 L1558.0 789.8 L1559.5 790.3 L1561.0 789.4 L1562.5 787.2 L1564.0 783.5 L1565.5 780.0 L1567.0 776.5 L1568.5 773.0 L1570.0 769.9 L1571.5 767.5 L1573.0 765.8 L1574.5 764.5 L1576.0 763.3 L1577.5 762.1 L1579.0 761.0 L1580.5 760.1 L1582.0 759.3 L1583.5 758.5 L1585.0 757.7 L1586.5 756.7 L1588.0 755.4 L1589.5 753.9 L1591.0 752.4 L1592.5 750.9 L1594.0 749.4 L1595.5 748.0 L1597.0 746.6 L1598.5 745.5 L1600.0 744.4 L1601.5 743.3 L1603.0 742.2 L1604.5 741.1 L1606.0 740.1 L1607.5 739.2 L1609.0 738.5 L1610.5 737.7 L1612.0 737.0 L1613.5 736.2 L1615.0 735.5 L1616.5 734.8 L1618.0 734.2 L1619.5 733.6 L1621.0 733.1 L1622.5 732.5 L1624.0 732.2 L1625.5 732.0 L1627.0 732.0 L1628.5 732.0 L1630.0 732.0 L1631.5 731.7 L1633.0 731.1 L1634.5 730.3 L1636.0 729.4 L1637.5 728.5 L1639.0 727.6 L1640.5 726.7 L1642.0 726.0 L1643.5 725.4 L1645.0 724.9 L1646.5 724.4 L1648.0 724.0 L1649.5 723.5 L1651.0 723.0 L1652.5 722.5 L1654.0 722.2 L1655.5 722.1 L1657.0 722.3 L1658.5 722.5 L1660.0 722.6 L1661.5 722.8 L1663.0 722.9 L1664.5 723.0 L1666.0 723.1 L1667.5 723.1 L1669.0 723.2 L1670.5 723.3 L1672.0 723.3 L1673.5 723.3 L1675.0 723.0 L1676.5 722.6 L1678.0 722.2 L1679.5 721.8 L1681.0 721.3 L1682.5 721.0 L1684.0 720.8 L1685.5 720.7 L1687.0 720.5 L1688.5 720.4 L1690.0 720.3 L1691.5 720.1 L1693.0 720.0 L1694.5 719.8 L1696.0 719.7 L1697.5 719.7 L1699.0 719.7 L1700.5 719.7 L1702.0 719.7 L1703.5 719.8 L1705.0 719.8 L1706.5 719.9 L1708.0 719.9 L1709.5 719.9 L1711.0 720.0 L1712.5 720.2 L1714.0 720.5 L1715.5 720.8 L1717.0 721.2 L1718.5 721.5 L1720.0 721.9 L1721.5 722.3 L1723.0 722.6 L1724.5 723.0 L1726.0 723.5 L1727.5 724.0 L1729.0 724.6 L1730.5 725.1 L1732.0 725.7 L1733.5 726.0" stroke="#f0a05e" stroke-width="1" fill="none" stroke-linejoin="round"/>
<path d="M70.0 302.6 L71.5 303.8 L73.0 305.4 L74.5 307.1 L76.0 308.8 L77.5 310.5 L79.0 312.1 L80.5 313.8 L82.0 315.5 L83.5 317.1 L85.0 318.8 L86.5 320.5 L88.0 322.2 L89.5 323.8 L91.0 325.4 L92.5 327.3 L94.0 329.4 L95.5 331.8 L97.0 334.2 L98.5 336.6 L100.0 339.0 L101.5 341.3 L103.0 343.7 L104.5 346.0 L106.0 348.3 L107.5 350.7 L109.0 353.0 L110.5 355.3 L112.0 357.6 L113.5 359.8 L115.0 361.5 L116.5 362.6 L118.0 363.5 L119.5 364.4 L121.0 365.3 L122.5 365.9 L124.0 366.1 L125.5 366.2 L127.0 366.3 L128.5 366.4 L130.0 366.5 L131.5 366.6 L133.0 366.7 L134.5 366.9 L136.0 367.1 L137.5 367.3 L139.0 367.4 L140.5 367.3 L142.0 367.2 L143.5 365.5 L145.0 360.1 L146.5 352.2 L148.0 345.2 L149.5 341.4 L151.0 339.7 L152.5 337.7 L154.0 335.1 L155.5 331.7 L157.0 328.1 L158.5 324.7 L160.0 321.2 L161.5 317.4 L163.0 314.5 L164.5 312.5 L166.0 311.6 L167.5 310.7 L169.0 310.1 L170.5 309.9 L172.0 309.9 L173.5 309.9 L175.0 309.9 L176.5 309.9 L178.0 309.5 L179.5 308.6 L181.0 307.4 L182.5 306.3 L184.0 305.2 L185.5 304.0 L187.0 302.9 L188.5 302.0 L190.0 301.3 L191.5 301.0 L193.0 300.8 L194.5 300.7 L196.0 300.4 L197.5 299.9 L199.0 299.2 L200.5 298.4 L202.0 297.7 L203.5 296.9 L205.0 296.2 L206.5 295.7 L208.0 295.3 L209.5 295.0 L211.0 294.8 L212.5 294.5 L214.0 294.2 L215.5 294.2 L217.0 294.8 L218.5 296.1 L220.0 297.6 L221.5 299.1 L223.0 300.7 L224.5 302.5 L226.0 304.5 L227.5 306.6 L229.0 308.7 L230.5 310.9 L232.0 313.0 L233.5 315.1 L235.0 317.5 L236.5 320.2 L238.0 323.0 L239.5 325.9 L241.0 329.2 L242.5 333.0 L244.0 337.2 L245.5 341.5 L247.0 345.7 L248.5 350.0 L250.0 354.5 L251.5 359.6 L253.0 365.4 L254.5 371.7 L256.0 378.0 L257.5 384.4 L259.0 390.7 L260.5 397.0 L262.0 403.3 L263.5 408.5 L265.0 412.6 L266.5 415.6 L268.0 419.1 L269.5 423.4 L271.0 428.5 L272.5 433.9 L274.0 439.3 L275.5 443.9 L277.0 447.7 L278.5 450.7 L280.0 453.5 L281.5 456.2 L283.0 459.6 L284.5 464.2 L286.0 469.9 L287.5 475.9 L289.0 482.0 L290.5 488.3 L292.0 494.9 L293.5 501.7 L295.0 508.5 L296.5 515.3 L298.0 522.2 L299.5 528.6 L301.0 534.2 L302.5 539.3 L304.0 544.3 L305.5 549.5 L307.0 554.3 L308.5 558.4 L310.0 561.6 L311.5 564.4 L313.0 567.3 L314.5 570.0 L316.0 571.9 L317.5 572.9 L319.0 573.1 L320.5 573.4 L322.0 573.7 L323.5 574.0 L325.0 574.3 L326.5 574.6 L328.0 574.9 L329.5 575.2 L331.0 575.5 L332.5 575.9 L334.0 575.8 L335.5 575.2 L337.0 574.2 L338.5 573.1 L340.0 572.0 L341.5 570.9 L343.0 569.2 L344.5 567.1 L346.0 564.4 L347.5 561.7 L349.0 559.0 L350.5 556.4 L352.0 553.8 L353.5 551.2 L355.0 548.5 L356.5 545.7 L358.0 542.7 L359.5 539.3 L361.0 535.8 L362.5 532.1 L364.0 528.4 L365.5 524.9 L367.0 522.2 L368.5 520.1 L370.0 518.1 L371.5 516.0 L373.0 514.0 L374.5 512.9 L376.0 512.7 L377.5 513.2 L379.0 513.6 L380.5 514.0 L382.0 514.5 L383.5 515.3 L385.0 516.5 L386.5 517.8 L388.0 519.2 L389.5 520.5 L391.0 521.9 L392.5 523.3 L394.0 524.7 L395.5 526.2 L397.0 527.9 L398.5 529.8 L400.0 531.8 L401.5 533.9 L403.0 535.9 L404.5 538.0 L406.0 540.1 L407.5 541.7 L409.0 542.9 L410.5 543.5 L412.0 544.0 L413.5 544.5 L415.0 545.1 L416.5 545.7 L418.0 546.3 L419.5 546.9 L421.0 547.6 L422.5 548.5 L424.0 549.5 L425.5 550.6 L427.0 551.7 L428.5 552.8 L430.0 553.5 L431.5 553.7 L433.0 553.4 L434.5 552.9 L436.0 552.6 L437.5 552.6 L439.0 552.8 L440.5 553.0 L442.0 553.1 L443.5 553.1 L445.0 553.2 L446.5 553.2 L448.0 553.2 L449.5 553.2 L451.0 553.2 L452.5 553.0 L454.0 552.7 L455.5 552.5 L457.0 552.2 L458.5 551.9 L460.0 551.5 L461.5 551.2 L463.0 551.0 L464.5 550.8 L466.0 550.7 L467.5 550.6 L469.0 550.7 L470.5 551.0 L472.0 551.3 L473.5 551.6 L475.0 552.0 L476.5 552.4 L478.0 552.8 L479.5 553.2 L481.0 553.6 L482.5 554.1 L484.0 554.6 L485.5 555.2 L487.0 555.9 L488.5 556.6 L490.0 557.2 L491.5 557.6 L493.0 557.9 L494.5 558.2 L496.0 558.4 L497.5 558.6 L499.0 558.9 L500.5 559.1 L502.0 559.4 L503.5 559.6 L505.0 559.8 L506.5 560.0 L508.0 560.2 L509.5 560.4 L511.0 560.8 L512.5 561.6 L514.0 562.7 L515.5 563.7 L517.0 564.8 L518.5 565.9 L520.0 567.0 L521.5 568.1 L523.0 569.2 L524.5 570.3 L526.0 571.4 L527.5 572.3 L529.0 573.1 L530.5 574.0 L532.0 574.9 L533.5 576.0 L535.0 576.9 L536.5 577.4 L538.0 577.4 L539.5 577.1 L541.0 576.9 L542.5 576.7 L544.0 576.5 L545.5 576.3 L547.0 576.1 L548.5 575.4 L550.0 574.4 L551.5 573.2 L553.0 572.1 L554.5 571.0 L556.0 569.9 L557.5 568.7 L559.0 567.7 L560.5 566.7 L562.0 566.0 L563.5 565.2 L565.0 564.5 L566.5 564.2 L568.0 564.2 L569.5 564.7 L571.0 565.8 L572.5 567.6 L574.0 570.1 L575.5 572.8 L577.0 576.1 L578.5 580.0 L580.0 584.1 L581.5 588.3 L583.0 592.1 L584.5 595.2 L586.0 597.5 L587.5 599.3 L589.0 601.2 L590.5 603.2 L592.0 605.1 L593.5 607.1 L595.0 609.0 L596.5 610.9 L598.0 612.6 L599.5 614.1 L601.0 615.7 L602.5 617.2 L604.0 618.8 L605.5 620.4 L607.0 621.8 L608.5 622.5 L610.0 622.7 L611.5 622.7 L613.0 622.8 L614.5 623.5 L616.0 624.8 L617.5 626.5 L619.0 628.1 L620.5 629.7 L622.0 631.3 L623.5 633.0 L625.0 635.1 L626.5 637.5 L628.0 640.1 L629.5 642.6 L631.0 645.1 L632.5 647.6 L634.0 650.2 L635.5 652.9 L637.0 655.7 L638.5 658.5 L640.0 661.3 L641.5 664.2 L643.0 667.0 L644.5 669.6 L646.0 672.0 L647.5 674.3 L649.0 676.6 L650.5 678.9 L652.0 681.3 L653.5 683.7 L655.0 686.1 L656.5 688.1 L658.0 689.5 L659.5 690.5 L661.0 691.5 L662.5 692.5 L664.0 693.5 L665.5 694.4 L667.0 695.4 L668.5 696.4 L670.0 697.4 L671.5 698.1 L673.0 698.5 L674.5 698.5 L676.0 698.6 L677.5 698.6 L679.0 698.6 L680.5 698.6 L682.0 698.6 L683.5 698.6 L685.0 698.6 L686.5 698.8 L688.0 699.0 L689.5 699.4 L691.0 699.9 L692.5 700.3 L694.0 700.7 L695.5 701.0 L697.0 701.2 L698.5 701.4 L700.0 701.7 L701.5 701.9 L703.0 702.0 L704.5 701.9 L706.0 701.8 L707.5 701.7 L709.0 701.9 L710.5 702.0 L712.0 702.3 L713.5 702.6 L715.0 703.0 L716.5 703.4 L718.0 703.4 L719.5 703.1 L721.0 702.7 L722.5 702.2 L724.0 701.6 L725.5 701.1 L727.0 700.8 L728.5 700.6 L730.0 700.5 L731.5 700.3 L733.0 700.1 L734.5 699.9 L736.0 699.7 L737.5 699.7 L739.0 699.9 L740.5 700.2 L742.0 700.6 L743.5 701.0 L745.0 702.1 L746.5 703.6 L748.0 705.6 L749.5 707.5 L751.0 709.2 L752.5 710.7 L754.0 712.0 L755.5 713.0 L757.0 714.0 L758.5 715.1 L760.0 716.2 L761.5 717.3 L763.0 718.4 L764.5 719.3 L766.0 720.1 L767.5 720.8 L769.0 721.5 L770.5 722.1 L772.0 722.8 L773.5 723.4 L775.0 724.1 L776.5 724.8 L778.0 725.4 L779.5 726.0 L781.0 726.6 L782.5 727.2 L784.0 727.8 L785.5 728.3 L787.0 728.9 L788.5 729.4 L790.0 730.1 L791.5 731.0 L793.0 732.0 L794.5 733.0 L796.0 734.0 L797.5 735.1 L799.0 736.1 L800.5 737.4 L802.0 739.2 L803.5 741.5 L805.0 744.2 L806.5 746.7 L808.0 749.2 L809.5 751.6 L811.0 753.9 L812.5 755.9 L814.0 757.6 L815.5 759.2 L817.0 760.9 L818.5 762.6 L820.0 764.3 L821.5 765.7 L823.0 766.9 L824.5 767.8 L826.0 768.7 L827.5 769.6 L829.0 770.5 L830.5 771.4 L832.0 772.3 L833.5 773.0 L835.0 773.5 L836.5 773.6 L838.0 773.7 L839.5 773.8 L841.0 773.9 L842.5 774.0 L844.0 774.1 L845.5 774.2 L847.0 774.2 L848.5 774.2 L850.0 774.2 L851.5 774.1 L853.0 774.1 L854.5 774.0 L856.0 774.0 L857.5 774.2 L859.0 774.9 L860.5 776.0 L862.0 777.3 L863.5 778.3 L865.0 779.1 L866.5 779.7 L868.0 780.2 L869.5 780.8 L871.0 781.3 L872.5 781.9 L874.0 782.7 L875.5 783.8 L877.0 785.1 L878.5 786.3 L880.0 787.4 L881.5 788.6 L883.0 789.6 L884.5 790.6 L886.0 791.3 L887.5 792.0 L889.0 792.7 L890.5 793.4 L892.0 793.6 L893.5 793.3 L895.0 792.4 L896.5 791.5 L898.0 791.1 L899.5 791.2 L901.0 791.4 L902.5 790.5 L904.0 788.5 L905.5 785.7 L907.0 783.0 L908.5 780.6 L910.0 778.4 L911.5 776.2 L913.0 774.0 L914.5 772.0 L916.0 770.3 L917.5 768.9 L919.0 767.4 L920.5 765.8 L922.0 764.3 L923.5 763.0 L925.0 762.1 L926.5 761.1 L928.0 760.2 L929.5 759.3 L931.0 758.4 L932.5 757.8 L934.0 757.3 L935.5 757.0 L937.0 756.7 L938.5 756.5 L940.0 756.5 L941.5 756.3 L943.0 756.1 L944.5 755.9 L946.0 755.6 L947.5 755.3 L949.0 755.0 L950.5 754.6 L952.0 754.2 L953.5 753.9 L955.0 753.7 L956.5 753.5 L958.0 753.3 L959.5 753.1 L961.0 752.9 L962.5 752.7 L964.0 752.4 L965.5 751.9 L967.0 751.2 L968.5 750.4 L970.0 749.5 L971.5 748.7 L973.0 747.9 L974.5 747.1 L976.0 746.2 L977.5 745.4 L979.0 744.4 L980.5 743.5 L982.0 742.5 L983.5 741.5 L985.0 740.6 L986.5 739.7 L988.0 739.0 L989.5 738.5 L991.0 738.1 L992.5 737.7 L994.0 737.4 L995.5 737.2 L997.0 737.1 L998.5 737.1 L1000.0 737.1 L1001.5 737.1 L1003.0 737.1 L1004.5 737.1 L1006.0 736.8 L1007.5 736.5 L1009.0 736.0 L1010.5 735.6 L1012.0 735.2 L1013.5 734.8 L1015.0 734.1 L1016.5 733.3 L1018.0 732.3 L1019.5 731.3 L1021.0 730.3 L1022.5 729.3 L1024.0 728.4 L1025.5 727.6 L1027.0 726.9 L1028.5 726.3 L1030.0 725.8 L1031.5 725.2 L1033.0 724.8 L1034.5 724.4 L1036.0 724.2 L1037.5 723.9 L1039.0 723.7 L1040.5 723.4 L1042.0 723.2 L1043.5 722.9 L1045.0 722.6 L1046.5 722.1 L1048.0 721.5 L1049.5 720.9 L1051.0 720.3 L1052.5 719.7 L1054.0 719.1 L1055.5 718.6 L1057.0 718.2 L1058.5 717.9 L1060.0 718.0 L1061.5 718.5 L1063.0 719.3 L1064.5 720.1 L1066.0 721.3 L1067.5 722.7 L1069.0 724.3 L1070.5 725.9 L1072.0 727.3 L1073.5 728.5 L1075.0 729.2 L1076.5 729.8 L1078.0 730.3 L1079.5 730.8 L1081.0 730.8 L1082.5 730.4 L1084.0 729.8 L1085.5 729.2 L1087.0 728.5 L1088.5 727.8 L1090.0 727.0 L1091.5 726.0 L1093.0 725.1 L1094.5 724.2 L1096.0 723.3 L1097.5 722.4 L1099.0 721.5 L1100.5 720.6 L1102.0 719.6 L1103.5 718.7 L1105.0 717.8 L1106.5 716.9 L1108.0 716.0 L1109.5 715.0 L1111.0 714.0 L1112.5 713.0 L1114.0 712.0 L1115.5 711.0 L1117.0 710.0 L1118.5 709.0 L1120.0 708.0 L1121.5 706.8 L1123.0 705.6 L1124.5 704.4 L1126.0 703.1 L1127.5 701.9 L1129.0 700.6 L1130.5 699.3 L1132.0 697.9 L1133.5 696.4 L1135.0 694.8 L1136.5 693.3 L1138.0 691.7 L1139.5 690.2 L1141.0 688.7 L1142.5 687.2 L1144.0 685.7 L1145.5 684.2 L1147.0 682.8 L1148.5 681.8 L1150.0 681.2 L1151.5 680.7 L1153.0 680.2 L1154.5 679.6 L1156.0 679.0 L1157.5 678.5 L1159.0 678.1 L1160.5 677.8 L1162.0 677.4 L1163.5 677.1 L1165.0 677.0 L1166.5 677.1 L1168.0 677.1 L1169.5 677.2 L1171.0 677.3 L1172.5 677.3 L1174.0 677.5 L1175.5 677.6 L1177.0 677.7 L1178.5 677.9 L1180.0 678.0 L1181.5 678.1 L1183.0 678.3 L1184.5 678.4 L1186.0 678.6 L1187.5 678.8 L1189.0 679.0 L1190.5 679.2 L1192.0 679.4 L1193.5 679.6 L1195.0 679.8 L1196.5 680.0 L1198.0 680.2 L1199.5 680.3 L1201.0 680.6 L1202.5 680.6 L1204.0 680.3 L1205.5 679.6 L1207.0 678.9 L1208.5 678.4 L1210.0 678.1 L1211.5 678.1 L1213.0 678.1 L1214.5 678.0 L1216.0 677.9 L1217.5 677.7 L1219.0 677.5 L1220.5 677.4 L1222.0 677.2 L1223.5 677.1 L1225.0 677.0 L1226.5 676.9 L1228.0 676.8 L1229.5 676.7 L1231.0 676.7 L1232.5 676.6 L1234.0 676.6 L1235.5 676.5 L1237.0 676.5 L1238.5 676.4 L1240.0 676.3 L1241.5 676.3 L1243.0 676.2 L1244.5 676.2 L1246.0 676.2 L1247.5 676.3 L1249.0 676.3 L1250.5 676.4 L1252.0 676.4 L1253.5 676.6 L1255.0 676.8 L1256.5 677.2 L1258.0 677.6 L1259.5 678.0 L1261.0 678.4 L1262.5 678.8 L1264.0 679.2 L1265.5 679.7 L1267.0 680.1 L1268.5 680.5 L1270.0 681.1 L1271.5 681.8 L1273.0 682.6 L1274.5 683.3 L1276.0 683.9 L1277.5 684.6 L1279.0 685.4 L1280.5 686.2 L1282.0 687.1 L1283.5 687.7 L1285.0 687.9 L1286.5 687.7 L1288.0 687.5 L1289.5 687.7 L1291.0 688.2 L1292.5 688.9 L1294.0 689.7 L1295.5 690.3 L1297.0 690.5 L1298.5 690.3 L1300.0 690.0 L1301.5 690.0 L1303.0 690.4 L1304.5 690.7 L1306.0 691.0 L1307.5 691.5 L1309.0 692.3 L1310.5 693.2 L1312.0 694.1 L1313.5 695.0 L1315.0 695.9 L1316.5 696.6 L1318.0 697.1 L1319.5 697.3 L1321.0 697.5 L1322.5 697.8 L1324.0 698.0 L1325.5 698.2 L1327.0 698.3 L1328.5 698.3 L1330.0 698.2 L1331.5 698.1 L1333.0 698.0 L1334.5 697.9 L1336.0 697.8 L1337.5 697.7 L1339.0 697.6 L1340.5 697.5 L1342.0 697.4 L1343.5 697.3 L1345.0 697.2 L1346.5 697.2 L1348.0 697.1 L1349.5 697.0 L1351.0 696.9 L1352.5 696.8 L1354.0 696.8 L1355.5 697.3 L1357.0 698.0 L1358.5 699.0 L1360.0 700.1 L1361.5 701.1 L1363.0 702.2 L1364.5 703.2 L1366.0 704.4 L1367.5 705.5 L1369.0 706.6 L1370.5 707.7 L1372.0 708.6 L1373.5 709.3 L1375.0 709.6 L1376.5 709.8 L1378.0 710.0 L1379.5 710.1 L1381.0 710.3 L1382.5 710.5 L1384.0 710.7 L1385.5 710.8 L1387.0 711.0 L1388.5 711.2 L1390.0 711.4 L1391.5 711.5 L1393.0 711.5 L1394.5 711.6 L1396.0 711.6 L1397.5 711.7 L1399.0 711.7 L1400.5 711.8 L1402.0 711.8 L1403.5 711.8 L1405.0 711.9 L1406.5 712.1 L1408.0 712.2 L1409.5 712.4 L1411.0 712.6 L1412.5 712.8 L1414.0 712.9 L1415.5 713.0 L1417.0 713.0 L1418.5 713.1 L1420.0 713.2 L1421.5 713.3 L1423.0 713.4 L1424.5 713.6 L1426.0 713.8 L1427.5 714.0 L1429.0 714.2 L1430.5 714.3 L1432.0 714.4 L1433.5 714.3 L1435.0 714.3 L1436.5 714.3 L1438.0 714.3 L1439.5 714.4 L1441.0 714.5 L1442.5 714.6 L1444.0 714.6 L1445.5 714.4 L1447.0 714.2 L1448.5 713.9 L1450.0 713.7 L1451.5 713.3 L1453.0 713.1 L1454.5 713.0 L1456.0 713.1 L1457.5 713.1 L1459.0 713.1 L1460.5 712.9 L1462.0 712.5 L1463.5 711.8 L1465.0 711.3 L1466.5 711.3 L1468.0 711.6 L1469.5 712.1 L1471.0 712.5 L1472.5 713.0 L1474.0 713.4 L1475.5 713.8 L1477.0 714.2 L1478.5 714.6 L1480.0 715.0 L1481.5 715.0 L1483.0 714.8 L1484.5 714.3 L1486.0 713.6 L1487.5 712.6 L1489.0 711.3 L1490.5 710.0 L1492.0 708.8 L1493.5 707.5 L1495.0 706.3 L1496.5 705.0 L1498.0 703.8 L1499.5 702.5 L1501.0 701.3 L1502.5 700.2 L1504.0 699.4 L1505.5 698.6 L1507.0 697.7 L1508.5 696.9 L1510.0 696.1 L1511.5 695.3 L1513.0 694.5 L1514.5 693.8 L1516.0 693.1 L1517.5 692.4 L1519.0 691.6 L1520.5 690.9 L1522.0 690.2 L1523.5 689.5 L1525.0 688.7 L1526.5 688.0 L1528.0 687.3 L1529.5 686.6 L1531.0 685.7 L1532.5 684.6 L1534.0 683.5 L1535.5 682.3 L1537.0 681.2 L1538.5 680.1 L1540.0 678.8 L1541.5 677.3 L1543.0 675.4 L1544.5 673.4 L1546.0 671.4 L1547.5 669.3 L1549.0 667.3 L1550.5 665.3 L1552.0 663.2 L1553.5 661.1 L1555.0 659.1 L1556.5 657.1 L1558.0 655.3 L1559.5 653.7 L1561.0 652.9 L1562.5 652.8 L1564.0 653.3 L1565.5 653.8 L1567.0 654.4 L1568.5 655.1 L1570.0 655.7 L1571.5 656.0 L1573.0 656.1 L1574.5 656.0 L1576.0 655.9 L1577.5 655.8 L1579.0 655.7 L1580.5 655.6 L1582.0 655.6 L1583.5 655.7 L1585.0 656.0 L1586.5 656.5 L1588.0 656.9 L1589.5 657.3 L1591.0 657.7 L1592.5 658.1 L1594.0 658.4 L1595.5 658.7 L1597.0 659.1 L1598.5 659.4 L1600.0 659.5 L1601.5 659.4 L1603.0 659.3 L1604.5 659.1 L1606.0 659.0 L1607.5 658.9 L1609.0 658.8 L1610.5 658.8 L1612.0 658.7 L1613.5 658.7 L1615.0 658.6 L1616.5 658.6 L1618.0 658.6 L1619.5 658.6 L1621.0 658.6 L1622.5 658.7 L1624.0 658.2 L1625.5 657.4 L1627.0 656.2 L1628.5 654.9 L1630.0 653.7 L1631.5 652.4 L1633.0 651.6 L1634.5 651.2 L1636.0 651.4 L1637.5 651.6 L1639.0 651.8 L1640.5 652.0 L1642.0 652.1 L1643.5 652.2 L1645.0 652.2 L1646.5 652.2 L1648.0 652.3 L1649.5 652.3 L1651.0 652.3 L1652.5 652.3 L1654.0 652.3 L1655.5 652.3 L1657.0 652.3 L1658.5 652.3 L1660.0 652.2 L1661.5 652.2 L1663.0 652.3 L1664.5 652.5 L1666.0 653.0 L1667.5 653.6 L1669.0 654.2 L1670.5 654.8 L1672.0 655.5 L1673.5 656.3 L1675.0 657.2 L1676.5 658.0 L1678.0 658.8 L1679.5 659.6 L1681.0 660.4 L1682.5 660.8 L1684.0 661.0 L1685.5 660.9 L1687.0 660.9 L1688.5 660.9 L1690.0 660.9 L1691.5 660.9 L1693.0 660.8 L1694.5 660.8 L1696.0 660.8 L1697.5 660.8 L1699.0 660.7 L1700.5 660.7 L1702.0 660.6 L1703.5 660.6 L1705.0 660.6 L1706.5 660.5 L1708.0 660.5 L1709.5 660.5 L1711.0 660.5 L1712.5 660.5 L1714.0 660.6 L1715.5 660.7 L1717.0 660.8 L1718.5 660.9 L1720.0 661.0 L1721.5 661.1 L1723.0 661.2 L1724.5 661.3 L1726.0 661.4 L1727.5 661.4 L1729.0 661.4 L1730.5 661.3 L1732.0 661.2 L1733.5 661.1" stroke="#6464ec" stroke-width="1" fill="none" stroke-linejoin="round"/>
<path d="M70.0 422.3 L71.5 422.2 L73.0 421.9 L74.5 421.7 L76.0 421.5 L77.5 421.2 L79.0 421.0 L80.5 420.7 L82.0 420.5 L83.5 420.2 L85.0 420.0 L86.5 419.8 L88.0 419.5 L89.5 419.1 L91.0 418.5 L92.5 417.7 L94.0 416.9 L95.5 416.2 L97.0 415.4 L98.5 414.7 L100.0 414.0 L101.5 413.2 L103.0 412.3 L104.5 411.3 L106.0 410.2 L107.5 409.2 L109.0 408.2 L110.5 407.1 L112.0 406.1 L113.5 405.1 L115.0 403.9 L116.5 402.9 L118.0 402.3 L119.5 402.2 L121.0 402.1 L122.5 402.1 L124.0 401.9 L125.5 401.8 L127.0 401.6 L128.5 401.4 L130.0 401.2 L131.5 400.9 L133.0 400.5 L134.5 399.8 L136.0 399.1 L137.5 398.4 L139.0 398.0 L140.5 398.1 L142.0 398.7 L143.5 401.6 L145.0 410.3 L146.5 422.3 L148.0 431.9 L149.5 436.1 L151.0 438.5 L152.5 442.3 L154.0 448.1 L155.5 454.8 L157.0 462.7 L158.5 470.9 L160.0 479.1 L161.5 485.7 L163.0 490.4 L164.5 493.3 L166.0 496.0 L167.5 498.6 L169.0 501.3 L170.5 504.0 L172.0 506.7 L173.5 509.5 L175.0 512.2 L176.5 515.0 L178.0 517.9 L179.5 521.3 L181.0 525.3 L182.5 529.7 L184.0 534.2 L185.5 538.6 L187.0 543.1 L188.5 547.5 L190.0 552.1 L191.5 556.9 L193.0 562.0 L194.5 567.3 L196.0 572.6 L197.5 577.8 L199.0 583.3 L200.5 589.1 L202.0 595.2 L203.5 601.3 L205.0 607.4 L206.5 613.5 L208.0 619.7 L209.5 625.7 L211.0 631.7 L212.5 637.6 L214.0 643.6 L215.5 649.5 L217.0 655.5 L218.5 661.3 L220.0 667.0 L221.5 672.4 L223.0 677.9 L224.5 683.4 L226.0 688.9 L227.5 694.5 L229.0 700.0 L230.5 705.6 L232.0 711.2 L233.5 716.7 L235.0 722.0 L236.5 726.8 L238.0 731.2 L239.5 735.4 L241.0 739.7 L242.5 744.1 L244.0 748.5 L245.5 753.0 L247.0 757.5 L248.5 762.0 L250.0 766.3 L251.5 770.6 L253.0 774.7 L254.5 778.8 L256.0 783.0 L257.5 787.1 L259.0 791.3 L260.5 795.4 L262.0 799.5 L263.5 803.1 L265.0 806.4 L266.5 809.2 L268.0 812.2 L269.5 815.4 L271.0 818.7 L272.5 821.7 L274.0 824.3 L275.5 826.3 L277.0 827.9 L278.5 829.6 L280.0 831.3 L281.5 833.1 L283.0 833.9 L284.5 834.0 L286.0 833.3 L287.5 832.1 L289.0 830.1 L290.5 827.4 L292.0 824.5 L293.5 821.7 L295.0 819.0 L296.5 816.5 L298.0 814.4 L299.5 812.3 L301.0 810.1 L302.5 808.0 L304.0 806.1 L305.5 804.6 L307.0 803.1 L308.5 801.4 L310.0 799.7 L311.5 798.2 L313.0 797.1 L314.5 796.2 L316.0 795.2 L317.5 794.5 L319.0 794.0 L320.5 793.9 L322.0 793.7 L323.5 793.5 L325.0 793.4 L326.5 793.3 L328.0 793.3 L329.5 793.3 L331.0 793.3 L332.5 793.4 L334.0 793.3 L335.5 793.3 L337.0 793.5 L338.5 793.9 L340.0 794.3 L341.5 794.8 L343.0 795.3 L344.5 795.8 L346.0 796.4 L347.5 797.1 L349.0 797.7 L350.5 798.4 L352.0 799.1 L353.5 799.6 L355.0 799.9 L356.5 800.1 L358.0 800.1 L359.5 800.1 L361.0 800.1 L362.5 799.5 L364.0 798.3 L365.5 796.6 L367.0 795.1 L368.5 793.4 L370.0 791.3 L371.5 788.9 L373.0 786.4 L374.5 783.3 L376.0 779.2 L377.5 774.1 L379.0 768.6 L380.5 763.0 L382.0 757.3 L383.5 751.5 L385.0 745.7 L386.5 740.0 L388.0 734.2 L389.5 728.5 L391.0 722.8 L392.5 717.2 L394.0 711.7 L395.5 706.2 L397.0 701.0 L398.5 696.3 L400.0 692.3 L401.5 688.5 L403.0 684.7 L404.5 681.0 L406.0 677.3 L407.5 673.6 L409.0 669.7 L410.5 665.8 L412.0 661.9 L413.5 658.3 L415.0 654.9 L416.5 651.6 L418.0 648.3 L419.5 645.0 L421.0 642.1 L422.5 640.1 L424.0 638.8 L425.5 637.8 L427.0 636.8 L428.5 635.8 L430.0 635.5 L431.5 636.0 L433.0 637.4 L434.5 639.0 L436.0 640.6 L437.5 642.2 L439.0 643.8 L440.5 644.9 L442.0 645.6 L443.5 645.7 L445.0 645.9 L446.5 646.1 L448.0 646.2 L449.5 646.2 L451.0 645.8 L452.5 644.9 L454.0 643.6 L455.5 642.6 L457.0 641.9 L458.5 641.3 L460.0 640.8 L461.5 640.3 L463.0 640.1 L464.5 640.2 L466.0 640.7 L467.5 641.2 L469.0 641.7 L470.5 642.2 L472.0 642.8 L473.5 643.6 L475.0 644.6 L476.5 645.7 L478.0 646.9 L479.5 648.0 L481.0 649.2 L482.5 650.3 L484.0 651.5 L485.5 652.6 L487.0 653.8 L488.5 655.0 L490.0 656.2 L491.5 657.4 L493.0 658.5 L494.5 659.7 L496.0 660.9 L497.5 662.0 L499.0 663.2 L500.5 664.4 L502.0 665.6 L503.5 666.8 L505.0 668.0 L506.5 669.0 L508.0 669.8 L509.5 670.6 L511.0 671.4 L512.5 672.2 L514.0 673.2 L515.5 674.1 L517.0 675.0 L518.5 676.0 L520.0 676.9 L521.5 678.0 L523.0 679.0 L524.5 680.2 L526.0 681.3 L527.5 682.4 L529.0 683.4 L530.5 684.8 L532.0 686.6 L533.5 688.8 L535.0 691.1 L536.5 693.4 L538.0 695.6 L539.5 697.9 L541.0 700.4 L542.5 702.8 L544.0 705.3 L545.5 707.7 L547.0 710.2 L548.5 712.6 L550.0 715.8 L551.5 719.9 L553.0 725.0 L554.5 730.0 L556.0 735.1 L557.5 739.6 L559.0 743.6 L560.5 747.0 L562.0 750.4 L563.5 753.9 L565.0 756.8 L566.5 759.3 L568.0 761.2 L569.5 763.3 L571.0 764.9 L572.5 766.0 L574.0 766.4 L575.5 766.1 L577.0 765.3 L578.5 764.3 L580.0 763.3 L581.5 762.4 L583.0 762.1 L584.5 762.2 L586.0 762.7 L587.5 763.3 L589.0 764.2 L590.5 765.4 L592.0 766.6 L593.5 767.8 L595.0 769.3 L596.5 771.1 L598.0 773.1 L599.5 775.1 L601.0 777.1 L602.5 779.0 L604.0 781.1 L605.5 783.4 L607.0 785.8 L608.5 788.2 L610.0 790.5 L611.5 792.8 L613.0 795.1 L614.5 797.2 L616.0 798.9 L617.5 800.1 L619.0 801.2 L620.5 802.3 L622.0 803.1 L623.5 803.4 L625.0 803.2 L626.5 802.6 L628.0 802.1 L629.5 801.4 L631.0 800.6 L632.5 799.5 L634.0 798.5 L635.5 797.4 L637.0 796.4 L638.5 795.4 L640.0 794.5 L641.5 793.8 L643.0 793.2 L644.5 792.6 L646.0 792.0 L647.5 791.4 L649.0 790.8 L650.5 790.4 L652.0 790.2 L653.5 790.2 L655.0 790.2 L656.5 790.1 L658.0 790.1 L659.5 790.3 L661.0 790.7 L662.5 791.1 L664.0 791.4 L665.5 791.8 L667.0 792.2 L668.5 792.6 L670.0 793.0 L671.5 793.2 L673.0 793.4 L674.5 793.5 L676.0 793.6 L677.5 793.7 L679.0 793.8 L680.5 793.8 L682.0 793.9 L683.5 794.0 L685.0 794.0 L686.5 793.9 L688.0 793.7 L689.5 793.5 L691.0 793.2 L692.5 793.0 L694.0 792.5 L695.5 791.6 L697.0 790.3 L698.5 788.9 L700.0 787.8 L701.5 787.1 L703.0 787.0 L704.5 787.1 L706.0 787.4 L707.5 788.2 L709.0 789.8 L710.5 791.7 L712.0 793.8 L713.5 796.4 L715.0 799.6 L716.5 803.1 L718.0 806.5 L719.5 809.8 L721.0 812.9 L722.5 815.8 L724.0 818.5 L725.5 821.1 L727.0 823.8 L728.5 826.0 L730.0 827.8 L731.5 829.0 L733.0 830.3 L734.5 831.5 L736.0 832.6 L737.5 833.6 L739.0 834.5 L740.5 835.4 L742.0 836.3 L743.5 837.2 L745.0 838.1 L746.5 838.7 L748.0 838.9 L749.5 838.8 L751.0 838.6 L752.5 838.5 L754.0 838.2 L755.5 838.0 L757.0 838.0 L758.5 838.0 L760.0 838.1 L761.5 838.2 L763.0 838.3 L764.5 838.4 L766.0 838.5 L767.5 838.8 L769.0 839.1 L770.5 839.4 L772.0 839.8 L773.5 840.1 L775.0 840.5 L776.5 841.0 L778.0 841.5 L779.5 842.2 L781.0 842.8 L782.5 843.4 L784.0 844.1 L785.5 844.6 L787.0 845.1 L788.5 845.4 L790.0 845.7 L791.5 846.1 L793.0 846.5 L794.5 846.8 L796.0 847.2 L797.5 847.6 L799.0 848.2 L800.5 848.9 L802.0 849.8 L803.5 850.9 L805.0 852.0 L806.5 852.8 L808.0 853.2 L809.5 853.4 L811.0 853.5 L812.5 853.5 L814.0 853.5 L815.5 853.5 L817.0 853.4 L818.5 853.5 L820.0 853.8 L821.5 854.1 L823.0 854.4 L824.5 854.7 L826.0 854.9 L827.5 855.2 L829.0 855.4 L830.5 855.7 L832.0 856.0 L833.5 856.2 L835.0 856.4 L836.5 856.6 L838.0 856.9 L839.5 857.1 L841.0 857.3 L842.5 857.5 L844.0 857.7 L845.5 857.9 L847.0 858.0 L848.5 858.1 L850.0 858.2 L851.5 858.3 L853.0 858.3 L854.5 858.4 L856.0 858.5 L857.5 858.5 L859.0 858.6 L860.5 858.6 L862.0 858.6 L863.5 858.6 L865.0 858.5 L866.5 858.6 L868.0 858.9 L869.5 859.4 L871.0 860.0 L872.5 860.6 L874.0 861.3 L875.5 861.9 L877.0 862.2 L878.5 862.1 L880.0 861.6 L881.5 861.1 L883.0 860.6 L884.5 860.1 L886.0 859.6 L887.5 859.2 L889.0 859.0 L890.5 858.9 L892.0 858.7 L893.5 858.4 L895.0 858.0 L896.5 857.6 L898.0 857.3 L899.5 857.7 L901.0 858.7 L902.5 860.0 L904.0 861.1 L905.5 862.0 L907.0 862.9 L908.5 863.9 L910.0 864.9 L911.5 865.8 L913.0 866.7 L914.5 867.6 L916.0 868.6 L917.5 869.6 L919.0 870.2 L920.5 870.0 L922.0 869.1 L923.5 868.1 L925.0 867.1 L926.5 866.1 L928.0 865.3 L929.5 864.5 L931.0 863.7 L932.5 863.0 L934.0 862.3 L935.5 861.6 L937.0 861.3 L938.5 861.5 L940.0 862.1 L941.5 862.7 L943.0 863.3 L944.5 863.9 L946.0 864.5 L947.5 865.0 L949.0 865.4 L950.5 865.4 L952.0 865.2 L953.5 864.7 L955.0 864.3 L956.5 863.9 L958.0 863.5 L959.5 863.1 L961.0 862.7 L962.5 862.3 L964.0 862.0 L965.5 861.6 L967.0 861.2 L968.5 860.8 L970.0 860.3 L971.5 859.9 L973.0 859.5 L974.5 859.0 L976.0 858.5 L977.5 857.8 L979.0 857.2 L980.5 856.5 L982.0 855.8 L983.5 855.0 L985.0 854.2 L986.5 853.4 L988.0 852.1 L989.5 850.4 L991.0 848.5 L992.5 846.6 L994.0 844.8 L995.5 843.4 L997.0 842.5 L998.5 841.7 L1000.0 841.0 L1001.5 840.3 L1003.0 839.6 L1004.5 838.9 L1006.0 838.4 L1007.5 837.9 L1009.0 837.4 L1010.5 837.0 L1012.0 836.6 L1013.5 836.1 L1015.0 835.8 L1016.5 835.7 L1018.0 835.8 L1019.5 835.9 L1021.0 836.0 L1022.5 836.1 L1024.0 836.2 L1025.5 836.3 L1027.0 836.4 L1028.5 836.5 L1030.0 836.6 L1031.5 836.6 L1033.0 836.7 L1034.5 836.8 L1036.0 836.9 L1037.5 837.0 L1039.0 837.1 L1040.5 837.2 L1042.0 837.3 L1043.5 837.4 L1045.0 837.3 L1046.5 837.2 L1048.0 837.1 L1049.5 837.0 L1051.0 836.9 L1052.5 836.7 L1054.0 836.6 L1055.5 836.0 L1057.0 835.1 L1058.5 833.7 L1060.0 831.7 L1061.5 829.2 L1063.0 826.1 L1064.5 822.9 L1066.0 819.3 L1067.5 815.5 L1069.0 811.4 L1070.5 807.4 L1072.0 803.5 L1073.5 800.2 L1075.0 797.5 L1076.5 795.2 L1078.0 792.9 L1079.5 790.8 L1081.0 789.2 L1082.5 788.0 L1084.0 787.1 L1085.5 786.3 L1087.0 785.5 L1088.5 784.9 L1090.0 784.5 L1091.5 784.3 L1093.0 784.0 L1094.5 783.8 L1096.0 783.5 L1097.5 783.4 L1099.0 783.3 L1100.5 783.4 L1102.0 783.5 L1103.5 783.6 L1105.0 783.8 L1106.5 783.9 L1108.0 783.9 L1109.5 783.7 L1111.0 783.4 L1112.5 783.1 L1114.0 782.8 L1115.5 782.4 L1117.0 782.1 L1118.5 781.8 L1120.0 781.4 L1121.5 780.8 L1123.0 780.1 L1124.5 779.2 L1126.0 778.4 L1127.5 777.5 L1129.0 776.7 L1130.5 775.9 L1132.0 775.3 L1133.5 774.8 L1135.0 774.4 L1136.5 773.9 L1138.0 773.4 L1139.5 773.0 L1141.0 772.7 L1142.5 772.6 L1144.0 772.6 L1145.5 772.7 L1147.0 772.7 L1148.5 772.9 L1150.0 773.1 L1151.5 773.3 L1153.0 773.2 L1154.5 772.6 L1156.0 771.4 L1157.5 770.2 L1159.0 768.9 L1160.5 767.6 L1162.0 766.3 L1163.5 764.8 L1165.0 763.4 L1166.5 762.0 L1168.0 760.6 L1169.5 759.2 L1171.0 757.9 L1172.5 756.7 L1174.0 755.6 L1175.5 754.5 L1177.0 753.3 L1178.5 752.2 L1180.0 751.1 L1181.5 750.0 L1183.0 748.9 L1184.5 747.8 L1186.0 746.7 L1187.5 745.7 L1189.0 744.7 L1190.5 743.7 L1192.0 742.7 L1193.5 741.6 L1195.0 740.6 L1196.5 739.5 L1198.0 738.3 L1199.5 737.2 L1201.0 736.7 L1202.5 736.8 L1204.0 737.5 L1205.5 738.1 L1207.0 738.7 L1208.5 739.3 L1210.0 740.0 L1211.5 740.7 L1213.0 741.3 L1214.5 741.7 L1216.0 741.8 L1217.5 741.8 L1219.0 741.8 L1220.5 741.8 L1222.0 741.8 L1223.5 741.9 L1225.0 742.1 L1226.5 742.4 L1228.0 742.7 L1229.5 743.0 L1231.0 743.3 L1232.5 743.6 L1234.0 743.9 L1235.5 744.1 L1237.0 744.2 L1238.5 744.4 L1240.0 744.5 L1241.5 744.6 L1243.0 744.7 L1244.5 744.8 L1246.0 744.8 L1247.5 744.7 L1249.0 744.7 L1250.5 744.7 L1252.0 744.6 L1253.5 744.8 L1255.0 745.2 L1256.5 745.8 L1258.0 746.5 L1259.5 747.3 L1261.0 748.0 L1262.5 748.7 L1264.0 749.4 L1265.5 750.2 L1267.0 750.9 L1268.5 751.6 L1270.0 752.4 L1271.5 753.0 L1273.0 753.6 L1274.5 754.1 L1276.0 754.5 L1277.5 755.0 L1279.0 755.6 L1280.5 756.2 L1282.0 757.0 L1283.5 757.7 L1285.0 758.4 L1286.5 758.9 L1288.0 759.5 L1289.5 760.1 L1291.0 760.9 L1292.5 761.6 L1294.0 762.4 L1295.5 763.3 L1297.0 764.5 L1298.5 766.2 L1300.0 768.2 L1301.5 770.3 L1303.0 772.3 L1304.5 773.7 L1306.0 774.6 L1307.5 775.0 L1309.0 775.6 L1310.5 776.1 L1312.0 776.7 L1313.5 777.2 L1315.0 777.7 L1316.5 778.1 L1318.0 778.4 L1319.5 778.7 L1321.0 779.0 L1322.5 779.3 L1324.0 779.5 L1325.5 779.8 L1327.0 780.0 L1328.5 780.0 L1330.0 779.9 L1331.5 779.8 L1333.0 779.7 L1334.5 779.6 L1336.0 779.5 L1337.5 779.4 L1339.0 779.3 L1340.5 779.2 L1342.0 779.1 L1343.5 779.1 L1345.0 779.1 L1346.5 779.2 L1348.0 779.2 L1349.5 779.2 L1351.0 779.3 L1352.5 779.3 L1354.0 779.3 L1355.5 779.1 L1357.0 778.8 L1358.5 778.3 L1360.0 777.9 L1361.5 777.5 L1363.0 777.1 L1364.5 776.7 L1366.0 776.3 L1367.5 776.0 L1369.0 775.6 L1370.5 775.2 L1372.0 774.9 L1373.5 774.8 L1375.0 774.9 L1376.5 775.1 L1378.0 775.3 L1379.5 775.5 L1381.0 775.7 L1382.5 775.9 L1384.0 776.0 L1385.5 776.3 L1387.0 776.5 L1388.5 776.8 L1390.0 777.1 L1391.5 777.3 L1393.0 777.6 L1394.5 777.8 L1396.0 778.1 L1397.5 778.3 L1399.0 778.5 L1400.5 778.8 L1402.0 779.0 L1403.5 779.2 L1405.0 779.4 L1406.5 779.6 L1408.0 779.8 L1409.5 780.0 L1411.0 780.1 L1412.5 780.3 L1414.0 780.5 L1415.5 780.2 L1417.0 779.6 L1418.5 778.5 L1420.0 777.5 L1421.5 776.5 L1423.0 775.6 L1424.5 774.8 L1426.0 774.1 L1427.5 773.4 L1429.0 772.8 L1430.5 772.1 L1432.0 771.4 L1433.5 770.8 L1435.0 770.4 L1436.5 770.1 L1438.0 769.8 L1439.5 769.6 L1441.0 769.7 L1442.5 770.2 L1444.0 771.0 L1445.5 771.7 L1447.0 772.3 L1448.5 772.7 L1450.0 772.9 L1451.5 773.0 L1453.0 773.0 L1454.5 773.1 L1456.0 773.3 L1457.5 773.4 L1459.0 773.5 L1460.5 773.6 L1462.0 773.7 L1463.5 773.8 L1465.0 773.9 L1466.5 774.1 L1468.0 774.2 L1469.5 774.1 L1471.0 773.9 L1472.5 773.7 L1474.0 773.5 L1475.5 773.3 L1477.0 773.1 L1478.5 773.2 L1480.0 773.5 L1481.5 773.9 L1483.0 774.2 L1484.5 774.5 L1486.0 774.9 L1487.5 775.2 L1489.0 775.6 L1490.5 776.0 L1492.0 776.4 L1493.5 776.8 L1495.0 777.2 L1496.5 777.6 L1498.0 777.8 L1499.5 777.7 L1501.0 777.4 L1502.5 777.0 L1504.0 776.7 L1505.5 776.3 L1507.0 776.0 L1508.5 775.7 L1510.0 775.3 L1511.5 774.8 L1513.0 774.3 L1514.5 773.6 L1516.0 773.0 L1517.5 772.4 L1519.0 771.8 L1520.5 771.1 L1522.0 770.5 L1523.5 769.9 L1525.0 769.3 L1526.5 768.7 L1528.0 768.0 L1529.5 767.4 L1531.0 766.8 L1532.5 766.1 L1534.0 765.5 L1535.5 765.1 L1537.0 764.7 L1538.5 764.3 L1540.0 763.9 L1541.5 763.7 L1543.0 763.5 L1544.5 763.4 L1546.0 763.3 L1547.5 763.2 L1549.0 763.1 L1550.5 763.0 L1552.0 762.9 L1553.5 762.9 L1555.0 762.9 L1556.5 762.9 L1558.0 762.9 L1559.5 763.0 L1561.0 762.1 L1562.5 760.3 L1564.0 757.5 L1565.5 754.7 L1567.0 752.1 L1568.5 749.5 L1570.0 747.1 L1571.5 745.2 L1573.0 743.8 L1574.5 742.8 L1576.0 741.8 L1577.5 740.8 L1579.0 740.0 L1580.5 739.2 L1582.0 738.6 L1583.5 738.0 L1585.0 737.4 L1586.5 736.6 L1588.0 735.7 L1589.5 734.6 L1591.0 733.5 L1592.5 732.3 L1594.0 731.2 L1595.5 730.1 L1597.0 729.1 L1598.5 728.3 L1600.0 727.4 L1601.5 726.5 L1603.0 725.6 L1604.5 724.7 L1606.0 723.9 L1607.5 723.2 L1609.0 722.5 L1610.5 721.9 L1612.0 721.3 L1613.5 720.7 L1615.0 720.1 L1616.5 719.5 L1618.0 719.1 L1619.5 718.6 L1621.0 718.2 L1622.5 717.8 L1624.0 717.4 L1625.5 717.1 L1627.0 716.8 L1628.5 716.6 L1630.0 716.3 L1631.5 715.9 L1633.0 715.2 L1634.5 714.5 L1636.0 713.8 L1637.5 713.1 L1639.0 712.4 L1640.5 711.8 L1642.0 711.2 L1643.5 710.8 L1645.0 710.4 L1646.5 710.0 L1648.0 709.6 L1649.5 709.2 L1651.0 708.8 L1652.5 708.5 L1654.0 708.2 L1655.5 708.2 L1657.0 708.3 L1658.5 708.4 L1660.0 708.5 L1661.5 708.6 L1663.0 708.8 L1664.5 708.9 L1666.0 709.1 L1667.5 709.2 L1669.0 709.4 L1670.5 709.6 L1672.0 709.8 L1673.5 709.9 L1675.0 709.9 L1676.5 709.7 L1678.0 709.5 L1679.5 709.3 L1681.0 709.1 L1682.5 709.0 L1684.0 708.8 L1685.5 708.7 L1687.0 708.6 L1688.5 708.5 L1690.0 708.4 L1691.5 708.3 L1693.0 708.1 L1694.5 708.0 L1696.0 707.9 L1697.5 707.9 L1699.0 707.9 L1700.5 707.9 L1702.0 707.9 L1703.5 707.9 L1705.0 708.0 L1706.5 708.0 L1708.0 708.0 L1709.5 708.0 L1711.0 708.1 L1712.5 708.2 L1714.0 708.5 L1715.5 708.8 L1717.0 709.1 L1718.5 709.4 L1720.0 709.7 L1721.5 710.0 L1723.0 710.3 L1724.5 710.7 L1726.0 711.1 L1727.5 711.5 L1729.0 711.9 L1730.5 712.4 L1732.0 712.8 L1733.5 713.1" stroke="#6464ec" stroke-width="1" fill="none" stroke-linejoin="round"/>
<path d="M70.0 332.6 L71.5 333.4 L73.0 334.6 L74.5 335.8 L76.0 336.9 L77.5 338.1 L79.0 339.3 L80.5 340.5 L82.0 341.7 L83.5 342.9 L85.0 344.1 L86.5 345.3 L88.0 346.5 L89.5 347.6 L91.0 348.7 L92.5 349.9 L94.0 351.3 L95.5 352.9 L97.0 354.5 L98.5 356.1 L100.0 357.7 L101.5 359.3 L103.0 360.8 L104.5 362.3 L106.0 363.8 L107.5 365.3 L109.0 366.8 L110.5 368.3 L112.0 369.8 L113.5 371.1 L115.0 372.1 L116.5 372.7 L118.0 373.2 L119.5 373.8 L121.0 374.5 L122.5 374.9 L124.0 375.1 L125.5 375.1 L127.0 375.1 L128.5 375.2 L130.0 375.2 L131.5 375.2 L133.0 375.2 L134.5 375.1 L136.0 375.1 L137.5 375.1 L139.0 375.0 L140.5 375.0 L142.0 375.1 L143.5 374.6 L145.0 372.7 L146.5 369.7 L148.0 366.9 L149.5 365.1 L151.0 364.4 L152.5 363.9 L154.0 363.3 L155.5 362.4 L157.0 361.8 L158.5 361.2 L160.0 360.7 L161.5 359.5 L163.0 358.5 L164.5 357.7 L166.0 357.7 L167.5 357.7 L169.0 357.9 L170.5 358.4 L172.0 359.1 L173.5 359.8 L175.0 360.5 L176.5 361.2 L178.0 361.6 L179.5 361.8 L181.0 361.9 L182.5 362.2 L184.0 362.4 L185.5 362.7 L187.0 362.9 L188.5 363.4 L190.0 364.0 L191.5 365.0 L193.0 366.1 L194.5 367.4 L196.0 368.5 L197.5 369.4 L199.0 370.2 L200.5 371.1 L202.0 372.0 L203.5 373.0 L205.0 374.0 L206.5 375.1 L208.0 376.4 L209.5 377.7 L211.0 379.0 L212.5 380.3 L214.0 381.6 L215.5 383.1 L217.0 385.0 L218.5 387.4 L220.0 390.0 L221.5 392.4 L223.0 395.0 L224.5 397.7 L226.0 400.6 L227.5 403.6 L229.0 406.6 L230.5 409.6 L232.0 412.5 L233.5 415.5 L235.0 418.7 L236.5 421.8 L238.0 425.1 L239.5 428.3 L241.0 431.8 L242.5 435.7 L244.0 440.1 L245.5 444.4 L247.0 448.7 L248.5 453.0 L250.0 457.4 L251.5 462.3 L253.0 467.8 L254.5 473.5 L256.0 479.3 L257.5 485.0 L259.0 490.8 L260.5 496.6 L262.0 502.3 L263.5 507.2 L265.0 511.1 L266.5 514.0 L268.0 517.4 L269.5 521.4 L271.0 526.1 L272.5 530.9 L274.0 535.5 L275.5 539.5 L277.0 542.8 L278.5 545.4 L280.0 547.9 L281.5 550.4 L283.0 553.2 L284.5 556.7 L286.0 560.7 L287.5 565.0 L289.0 569.0 L290.5 573.1 L292.0 577.3 L293.5 581.7 L295.0 586.1 L296.5 590.6 L298.0 595.3 L299.5 599.5 L301.0 603.2 L302.5 606.5 L304.0 609.8 L305.5 613.2 L307.0 616.5 L308.5 619.1 L310.0 621.2 L311.5 622.9 L313.0 624.7 L314.5 626.6 L316.0 627.7 L317.5 628.3 L319.0 628.3 L320.5 628.5 L322.0 628.7 L323.5 628.9 L325.0 629.0 L326.5 629.3 L328.0 629.5 L329.5 629.7 L331.0 630.0 L332.5 630.2 L334.0 630.2 L335.5 629.8 L337.0 629.0 L338.5 628.3 L340.0 627.6 L341.5 626.9 L343.0 625.7 L344.5 624.3 L346.0 622.4 L347.5 620.5 L349.0 618.7 L350.5 616.9 L352.0 615.1 L353.5 613.3 L355.0 611.4 L356.5 609.3 L358.0 607.0 L359.5 604.5 L361.0 601.9 L362.5 599.0 L364.0 595.8 L365.5 592.9 L367.0 590.4 L368.5 588.4 L370.0 586.4 L371.5 584.2 L373.0 582.1 L374.5 580.5 L376.0 579.3 L377.5 578.4 L379.0 577.4 L380.5 576.3 L382.0 575.2 L383.5 574.4 L385.0 573.8 L386.5 573.4 L388.0 572.9 L389.5 572.5 L391.0 572.1 L392.5 571.8 L394.0 571.5 L395.5 571.2 L397.0 571.2 L398.5 571.4 L400.0 571.9 L401.5 572.5 L403.0 573.1 L404.5 573.8 L406.0 574.4 L407.5 574.7 L409.0 574.6 L410.5 574.0 L412.0 573.5 L413.5 573.0 L415.0 572.5 L416.5 572.2 L418.0 571.8 L419.5 571.4 L421.0 571.3 L422.5 571.4 L424.0 571.8 L425.5 572.4 L427.0 573.0 L428.5 573.5 L430.0 574.0 L431.5 574.2 L433.0 574.4 L434.5 574.4 L436.0 574.6 L437.5 575.0 L439.0 575.5 L440.5 576.0 L442.0 576.2 L443.5 576.3 L445.0 576.4 L446.5 576.4 L448.0 576.5 L449.5 576.5 L451.0 576.3 L452.5 575.9 L454.0 575.5 L455.5 575.0 L457.0 574.6 L458.5 574.2 L460.0 573.9 L461.5 573.5 L463.0 573.3 L464.5 573.1 L466.0 573.2 L467.5 573.3 L469.0 573.5 L470.5 573.8 L472.0 574.2 L473.5 574.6 L475.0 575.1 L476.5 575.7 L478.0 576.3 L479.5 576.9 L481.0 577.5 L482.5 578.1 L484.0 578.8 L485.5 579.6 L487.0 580.4 L488.5 581.2 L490.0 581.9 L491.5 582.6 L493.0 583.1 L494.5 583.5 L496.0 584.0 L497.5 584.5 L499.0 585.0 L500.5 585.5 L502.0 585.9 L503.5 586.4 L505.0 586.9 L506.5 587.3 L508.0 587.6 L509.5 587.9 L511.0 588.4 L512.5 589.2 L514.0 590.3 L515.5 591.3 L517.0 592.4 L518.5 593.4 L520.0 594.5 L521.5 595.6 L523.0 596.7 L524.5 597.8 L526.0 598.8 L527.5 599.8 L529.0 600.7 L530.5 601.7 L532.0 602.8 L533.5 604.2 L535.0 605.4 L536.5 606.4 L538.0 606.9 L539.5 607.3 L541.0 607.8 L542.5 608.2 L544.0 608.7 L545.5 609.1 L547.0 609.6 L548.5 609.7 L550.0 609.8 L551.5 609.9 L553.0 610.3 L554.5 610.7 L556.0 611.2 L557.5 611.4 L559.0 611.6 L560.5 611.8 L562.0 612.1 L563.5 612.4 L565.0 612.6 L566.5 612.9 L568.0 613.5 L569.5 614.3 L571.0 615.6 L572.5 617.2 L574.0 619.2 L575.5 621.1 L577.0 623.4 L578.5 626.1 L580.0 628.9 L581.5 631.8 L583.0 634.6 L584.5 637.0 L586.0 638.8 L587.5 640.3 L589.0 642.0 L590.5 643.7 L592.0 645.5 L593.5 647.3 L595.0 649.1 L596.5 650.9 L598.0 652.7 L599.5 654.4 L601.0 656.0 L602.5 657.7 L604.0 659.4 L605.5 661.2 L607.0 662.8 L608.5 664.0 L610.0 664.7 L611.5 665.2 L613.0 665.9 L614.5 667.0 L616.0 668.4 L617.5 669.9 L619.0 671.4 L620.5 672.8 L622.0 674.2 L623.5 675.6 L625.0 677.1 L626.5 678.8 L628.0 680.6 L629.5 682.3 L631.0 684.0 L632.5 685.6 L634.0 687.3 L635.5 689.0 L637.0 690.9 L638.5 692.7 L640.0 694.6 L641.5 696.6 L643.0 698.5 L644.5 700.4 L646.0 702.0 L647.5 703.6 L649.0 705.1 L650.5 706.8 L652.0 708.5 L653.5 710.3 L655.0 712.1 L656.5 713.6 L658.0 714.7 L659.5 715.5 L661.0 716.3 L662.5 717.1 L664.0 718.0 L665.5 718.8 L667.0 719.6 L668.5 720.4 L670.0 721.3 L671.5 721.9 L673.0 722.2 L674.5 722.3 L676.0 722.3 L677.5 722.4 L679.0 722.4 L680.5 722.4 L682.0 722.5 L683.5 722.5 L685.0 722.5 L686.5 722.5 L688.0 722.7 L689.5 722.9 L691.0 723.2 L692.5 723.5 L694.0 723.6 L695.5 723.6 L697.0 723.5 L698.5 723.3 L700.0 723.2 L701.5 723.2 L703.0 723.2 L704.5 723.2 L706.0 723.2 L707.5 723.4 L709.0 723.8 L710.5 724.5 L712.0 725.1 L713.5 726.1 L715.0 727.2 L716.5 728.3 L718.0 729.1 L719.5 729.8 L721.0 730.2 L722.5 730.6 L724.0 730.9 L725.5 731.1 L727.0 731.6 L728.5 731.9 L730.0 732.3 L731.5 732.5 L733.0 732.6 L734.5 732.8 L736.0 732.9 L737.5 733.2 L739.0 733.5 L740.5 734.0 L742.0 734.5 L743.5 735.1 L745.0 736.1 L746.5 737.4 L748.0 738.9 L749.5 740.3 L751.0 741.6 L752.5 742.7 L754.0 743.5 L755.5 744.2 L757.0 745.0 L758.5 745.8 L760.0 746.7 L761.5 747.5 L763.0 748.4 L764.5 749.1 L766.0 749.7 L767.5 750.3 L769.0 750.9 L770.5 751.5 L772.0 752.0 L773.5 752.6 L775.0 753.2 L776.5 753.8 L778.0 754.4 L779.5 755.0 L781.0 755.6 L782.5 756.2 L784.0 756.8 L785.5 757.4 L787.0 757.9 L788.5 758.4 L790.0 759.0 L791.5 759.7 L793.0 760.6 L794.5 761.5 L796.0 762.3 L797.5 763.2 L799.0 764.1 L800.5 765.3 L802.0 766.9 L803.5 768.9 L805.0 771.1 L806.5 773.2 L808.0 775.2 L809.5 777.1 L811.0 778.8 L812.5 780.3 L814.0 781.6 L815.5 782.8 L817.0 784.0 L818.5 785.3 L820.0 786.7 L821.5 787.8 L823.0 788.8 L824.5 789.5 L826.0 790.3 L827.5 791.0 L829.0 791.7 L830.5 792.5 L832.0 793.2 L833.5 793.8 L835.0 794.2 L836.5 794.4 L838.0 794.5 L839.5 794.6 L841.0 794.8 L842.5 794.9 L844.0 795.0 L845.5 795.1 L847.0 795.2 L848.5 795.2 L850.0 795.2 L851.5 795.2 L853.0 795.1 L854.5 795.1 L856.0 795.1 L857.5 795.3 L859.0 795.8 L860.5 796.7 L862.0 797.6 L863.5 798.4 L865.0 799.0 L866.5 799.4 L868.0 799.9 L869.5 800.4 L871.0 801.0 L872.5 801.6 L874.0 802.4 L875.5 803.4 L877.0 804.4 L878.5 805.3 L880.0 806.0 L881.5 806.7 L883.0 807.4 L884.5 807.9 L886.0 808.4 L887.5 808.8 L889.0 809.3 L890.5 809.8 L892.0 809.9 L893.5 809.6 L895.0 808.8 L896.5 808.0 L898.0 807.6 L899.5 807.8 L901.0 808.2 L902.5 807.9 L904.0 806.6 L905.5 804.7 L907.0 803.0 L908.5 801.4 L910.0 800.0 L911.5 798.6 L913.0 797.2 L914.5 795.9 L916.0 794.9 L917.5 794.1 L919.0 793.1 L920.5 791.8 L922.0 790.5 L923.5 789.3 L925.0 788.3 L926.5 787.4 L928.0 786.5 L929.5 785.6 L931.0 784.7 L932.5 784.1 L934.0 783.5 L935.5 783.1 L937.0 782.9 L938.5 782.8 L940.0 782.9 L941.5 782.9 L943.0 782.9 L944.5 782.9 L946.0 782.8 L947.5 782.7 L949.0 782.6 L950.5 782.3 L952.0 782.0 L953.5 781.6 L955.0 781.4 L956.5 781.1 L958.0 780.8 L959.5 780.6 L961.0 780.3 L962.5 780.1 L964.0 779.8 L965.5 779.3 L967.0 778.7 L968.5 778.0 L970.0 777.2 L971.5 776.5 L973.0 775.8 L974.5 775.1 L976.0 774.3 L977.5 773.5 L979.0 772.6 L980.5 771.7 L982.0 770.8 L983.5 769.9 L985.0 769.0 L986.5 768.1 L988.0 767.3 L989.5 766.5 L991.0 765.7 L992.5 764.9 L994.0 764.2 L995.5 763.7 L997.0 763.4 L998.5 763.3 L1000.0 763.1 L1001.5 762.9 L1003.0 762.8 L1004.5 762.5 L1006.0 762.2 L1007.5 761.8 L1009.0 761.4 L1010.5 761.0 L1012.0 760.5 L1013.5 760.1 L1015.0 759.6 L1016.5 758.9 L1018.0 758.2 L1019.5 757.5 L1021.0 756.7 L1022.5 756.0 L1024.0 755.3 L1025.5 754.7 L1027.0 754.3 L1028.5 753.9 L1030.0 753.5 L1031.5 753.1 L1033.0 752.7 L1034.5 752.5 L1036.0 752.4 L1037.5 752.2 L1039.0 752.0 L1040.5 751.9 L1042.0 751.7 L1043.5 751.5 L1045.0 751.2 L1046.5 750.9 L1048.0 750.4 L1049.5 749.9 L1051.0 749.4 L1052.5 748.9 L1054.0 748.4 L1055.5 747.9 L1057.0 747.4 L1058.5 746.9 L1060.0 746.5 L1061.5 746.2 L1063.0 746.0 L1064.5 745.8 L1066.0 745.8 L1067.5 745.9 L1069.0 746.1 L1070.5 746.2 L1072.0 746.4 L1073.5 746.4 L1075.0 746.3 L1076.5 746.2 L1078.0 746.0 L1079.5 745.8 L1081.0 745.4 L1082.5 744.8 L1084.0 744.1 L1085.5 743.5 L1087.0 742.8 L1088.5 742.1 L1090.0 741.3 L1091.5 740.6 L1093.0 739.9 L1094.5 739.1 L1096.0 738.4 L1097.5 737.6 L1099.0 736.9 L1100.5 736.3 L1102.0 735.6 L1103.5 735.0 L1105.0 734.3 L1106.5 733.7 L1108.0 732.9 L1109.5 732.2 L1111.0 731.3 L1112.5 730.5 L1114.0 729.7 L1115.5 728.9 L1117.0 728.0 L1118.5 727.2 L1120.0 726.3 L1121.5 725.3 L1123.0 724.2 L1124.5 723.1 L1126.0 721.9 L1127.5 720.8 L1129.0 719.6 L1130.5 718.5 L1132.0 717.2 L1133.5 716.0 L1135.0 714.7 L1136.5 713.4 L1138.0 712.2 L1139.5 710.9 L1141.0 709.7 L1142.5 708.5 L1144.0 707.4 L1145.5 706.3 L1147.0 705.3 L1148.5 704.6 L1150.0 704.1 L1151.5 703.9 L1153.0 703.4 L1154.5 702.8 L1156.0 702.1 L1157.5 701.4 L1159.0 700.8 L1160.5 700.2 L1162.0 699.6 L1163.5 699.0 L1165.0 698.6 L1166.5 698.3 L1168.0 698.0 L1169.5 697.7 L1171.0 697.4 L1172.5 697.2 L1174.0 697.0 L1175.5 696.8 L1177.0 696.6 L1178.5 696.4 L1180.0 696.3 L1181.5 696.1 L1183.0 695.9 L1184.5 695.7 L1186.0 695.6 L1187.5 695.5 L1189.0 695.4 L1190.5 695.3 L1192.0 695.2 L1193.5 695.1 L1195.0 695.0 L1196.5 694.9 L1198.0 694.7 L1199.5 694.5 L1201.0 694.6 L1202.5 694.6 L1204.0 694.6 L1205.5 694.2 L1207.0 693.8 L1208.5 693.6 L1210.0 693.6 L1211.5 693.8 L1213.0 693.9 L1214.5 693.9 L1216.0 693.9 L1217.5 693.7 L1219.0 693.6 L1220.5 693.5 L1222.0 693.4 L1223.5 693.3 L1225.0 693.3 L1226.5 693.3 L1228.0 693.3 L1229.5 693.3 L1231.0 693.3 L1232.5 693.4 L1234.0 693.4 L1235.5 693.4 L1237.0 693.4 L1238.5 693.4 L1240.0 693.4 L1241.5 693.4 L1243.0 693.3 L1244.5 693.4 L1246.0 693.4 L1247.5 693.4 L1249.0 693.4 L1250.5 693.5 L1252.0 693.5 L1253.5 693.6 L1255.0 693.9 L1256.5 694.4 L1258.0 694.8 L1259.5 695.3 L1261.0 695.8 L1262.5 696.3 L1264.0 696.8 L1265.5 697.3 L1267.0 697.8 L1268.5 698.3 L1270.0 699.0 L1271.5 699.6 L1273.0 700.3 L1274.5 701.0 L1276.0 701.6 L1277.5 702.2 L1279.0 702.9 L1280.5 703.7 L1282.0 704.6 L1283.5 705.2 L1285.0 705.5 L1286.5 705.5 L1288.0 705.5 L1289.5 705.8 L1291.0 706.3 L1292.5 707.1 L1294.0 707.8 L1295.5 708.6 L1297.0 709.0 L1298.5 709.3 L1300.0 709.6 L1301.5 710.1 L1303.0 710.9 L1304.5 711.4 L1306.0 711.9 L1307.5 712.4 L1309.0 713.1 L1310.5 713.9 L1312.0 714.7 L1313.5 715.5 L1315.0 716.3 L1316.5 717.0 L1318.0 717.4 L1319.5 717.7 L1321.0 717.9 L1322.5 718.1 L1324.0 718.4 L1325.5 718.6 L1327.0 718.7 L1328.5 718.7 L1330.0 718.6 L1331.5 718.5 L1333.0 718.4 L1334.5 718.3 L1336.0 718.2 L1337.5 718.1 L1339.0 718.0 L1340.5 717.9 L1342.0 717.8 L1343.5 717.8 L1345.0 717.7 L1346.5 717.7 L1348.0 717.6 L1349.5 717.5 L1351.0 717.5 L1352.5 717.4 L1354.0 717.5 L1355.5 717.7 L1357.0 718.2 L1358.5 718.9 L1360.0 719.5 L1361.5 720.2 L1363.0 720.9 L1364.5 721.6 L1366.0 722.3 L1367.5 723.1 L1369.0 723.8 L1370.5 724.6 L1372.0 725.2 L1373.5 725.7 L1375.0 725.9 L1376.5 726.1 L1378.0 726.3 L1379.5 726.5 L1381.0 726.6 L1382.5 726.8 L1384.0 727.0 L1385.5 727.2 L1387.0 727.4 L1388.5 727.6 L1390.0 727.8 L1391.5 727.9 L1393.0 728.0 L1394.5 728.1 L1396.0 728.2 L1397.5 728.3 L1399.0 728.4 L1400.5 728.5 L1402.0 728.6 L1403.5 728.7 L1405.0 728.8 L1406.5 728.9 L1408.0 729.1 L1409.5 729.3 L1411.0 729.5 L1412.5 729.7 L1414.0 729.8 L1415.5 729.8 L1417.0 729.7 L1418.5 729.4 L1420.0 729.2 L1421.5 729.1 L1423.0 729.0 L1424.5 728.9 L1426.0 728.9 L1427.5 728.9 L1429.0 728.9 L1430.5 728.8 L1432.0 728.6 L1433.5 728.5 L1435.0 728.3 L1436.5 728.3 L1438.0 728.2 L1439.5 728.2 L1441.0 728.3 L1442.5 728.5 L1444.0 728.7 L1445.5 728.7 L1447.0 728.7 L1448.5 728.6 L1450.0 728.5 L1451.5 728.2 L1453.0 728.1 L1454.5 728.1 L1456.0 728.1 L1457.5 728.2 L1459.0 728.2 L1460.5 728.1 L1462.0 727.8 L1463.5 727.3 L1465.0 727.0 L1466.5 727.0 L1468.0 727.2 L1469.5 727.6 L1471.0 727.9 L1472.5 728.1 L1474.0 728.4 L1475.5 728.6 L1477.0 728.9 L1478.5 729.3 L1480.0 729.6 L1481.5 729.8 L1483.0 729.6 L1484.5 729.4 L1486.0 728.9 L1487.5 728.2 L1489.0 727.4 L1490.5 726.5 L1492.0 725.7 L1493.5 724.8 L1495.0 724.0 L1496.5 723.2 L1498.0 722.3 L1499.5 721.3 L1501.0 720.3 L1502.5 719.4 L1504.0 718.7 L1505.5 718.0 L1507.0 717.3 L1508.5 716.6 L1510.0 715.9 L1511.5 715.2 L1513.0 714.5 L1514.5 713.8 L1516.0 713.1 L1517.5 712.4 L1519.0 711.7 L1520.5 711.0 L1522.0 710.3 L1523.5 709.6 L1525.0 708.9 L1526.5 708.2 L1528.0 707.5 L1529.5 706.8 L1531.0 705.9 L1532.5 705.0 L1534.0 704.0 L1535.5 703.0 L1537.0 702.1 L1538.5 701.1 L1540.0 700.1 L1541.5 698.9 L1543.0 697.5 L1544.5 695.9 L1546.0 694.4 L1547.5 692.8 L1549.0 691.2 L1550.5 689.7 L1552.0 688.1 L1553.5 686.6 L1555.0 685.0 L1556.5 683.5 L1558.0 682.2 L1559.5 681.1 L1561.0 680.2 L1562.5 679.7 L1564.0 679.3 L1565.5 679.1 L1567.0 678.8 L1568.5 678.7 L1570.0 678.5 L1571.5 678.3 L1573.0 678.0 L1574.5 677.7 L1576.0 677.4 L1577.5 677.0 L1579.0 676.8 L1580.5 676.5 L1582.0 676.3 L1583.5 676.3 L1585.0 676.4 L1586.5 676.5 L1588.0 676.6 L1589.5 676.6 L1591.0 676.6 L1592.5 676.6 L1594.0 676.6 L1595.5 676.6 L1597.0 676.6 L1598.5 676.6 L1600.0 676.4 L1601.5 676.2 L1603.0 675.8 L1604.5 675.5 L1606.0 675.2 L1607.5 675.0 L1609.0 674.8 L1610.5 674.5 L1612.0 674.4 L1613.5 674.2 L1615.0 674.0 L1616.5 673.9 L1618.0 673.7 L1619.5 673.6 L1621.0 673.5 L1622.5 673.4 L1624.0 673.0 L1625.5 672.3 L1627.0 671.3 L1628.5 670.3 L1630.0 669.3 L1631.5 668.2 L1633.0 667.5 L1634.5 667.0 L1636.0 667.0 L1637.5 667.0 L1639.0 667.0 L1640.5 666.9 L1642.0 666.9 L1643.5 666.8 L1645.0 666.8 L1646.5 666.7 L1648.0 666.6 L1649.5 666.5 L1651.0 666.4 L1652.5 666.3 L1654.0 666.3 L1655.5 666.3 L1657.0 666.3 L1658.5 666.3 L1660.0 666.3 L1661.5 666.3 L1663.0 666.4 L1664.5 666.6 L1666.0 667.0 L1667.5 667.5 L1669.0 668.0 L1670.5 668.5 L1672.0 669.1 L1673.5 669.7 L1675.0 670.3 L1676.5 670.9 L1678.0 671.5 L1679.5 672.1 L1681.0 672.6 L1682.5 672.8 L1684.0 672.9 L1685.5 672.9 L1687.0 672.8 L1688.5 672.8 L1690.0 672.8 L1691.5 672.7 L1693.0 672.7 L1694.5 672.6 L1696.0 672.6 L1697.5 672.5 L1699.0 672.5 L1700.5 672.5 L1702.0 672.5 L1703.5 672.4 L1705.0 672.4 L1706.5 672.4 L1708.0 672.4 L1709.5 672.4 L1711.0 672.4 L1712.5 672.4 L1714.0 672.5 L1715.5 672.7 L1717.0 672.8 L1718.5 673.0 L1720.0 673.1 L1721.5 673.3 L1723.0 673.5 L1724.5 673.6 L1726.0 673.8 L1727.5 673.9 L1729.0 674.0 L1730.5 674.0 L1732.0 674.1 L1733.5 674.1" stroke="#c460e2" stroke-width="1" fill="none" stroke-linejoin="round"/>
<path d="M70.0 392.4 L71.5 392.6 L73.0 392.8 L74.5 393.0 L76.0 393.3 L77.5 393.5 L79.0 393.8 L80.5 394.0 L82.0 394.2 L83.5 394.5 L85.0 394.7 L86.5 394.9 L88.0 395.2 L89.5 395.3 L91.0 395.2 L92.5 395.1 L94.0 395.0 L95.5 395.1 L97.0 395.1 L98.5 395.2 L100.0 395.2 L101.5 395.2 L103.0 395.1 L104.5 395.0 L106.0 394.8 L107.5 394.6 L109.0 394.4 L110.5 394.2 L112.0 394.0 L113.5 393.7 L115.0 393.3 L116.5 392.8 L118.0 392.6 L119.5 392.7 L121.0 392.9 L122.5 393.0 L124.0 393.0 L125.5 392.9 L127.0 392.8 L128.5 392.7 L130.0 392.5 L131.5 392.4 L133.0 392.0 L134.5 391.6 L136.0 391.1 L137.5 390.6 L139.0 390.4 L140.5 390.4 L142.0 390.8 L143.5 392.6 L145.0 397.7 L146.5 404.8 L148.0 410.2 L149.5 412.4 L151.0 413.8 L152.5 416.2 L154.0 419.8 L155.5 424.0 L157.0 429.0 L158.5 434.4 L160.0 439.7 L161.5 443.6 L163.0 446.4 L164.5 448.1 L166.0 449.9 L167.5 451.6 L169.0 453.5 L170.5 455.4 L172.0 457.5 L173.5 459.6 L175.0 461.7 L176.5 463.7 L178.0 465.8 L179.5 468.1 L181.0 470.8 L182.5 473.9 L184.0 476.9 L185.5 480.0 L187.0 483.0 L188.5 486.2 L190.0 489.4 L191.5 492.9 L193.0 496.7 L194.5 500.6 L196.0 504.5 L197.5 508.3 L199.0 512.3 L200.5 516.4 L202.0 520.8 L203.5 525.2 L205.0 529.6 L206.5 534.1 L208.0 538.6 L209.5 543.1 L211.0 547.5 L212.5 551.9 L214.0 556.2 L215.5 560.7 L217.0 565.3 L218.5 570.0 L220.0 574.6 L221.5 579.1 L223.0 583.6 L224.5 588.1 L226.0 592.8 L227.5 597.5 L229.0 602.2 L230.5 606.9 L232.0 611.6 L233.5 616.3 L235.0 620.9 L236.5 625.2 L238.0 629.2 L239.5 633.0 L241.0 637.1 L242.5 641.3 L244.0 645.7 L245.5 650.1 L247.0 654.6 L248.5 659.0 L250.0 663.4 L251.5 667.8 L253.0 672.4 L254.5 677.1 L256.0 681.7 L257.5 686.4 L259.0 691.1 L260.5 695.8 L262.0 700.4 L263.5 704.5 L265.0 707.9 L266.5 710.8 L268.0 713.9 L269.5 717.4 L271.0 721.1 L272.5 724.8 L274.0 728.0 L275.5 730.7 L277.0 732.9 L278.5 734.9 L280.0 736.8 L281.5 738.8 L283.0 740.4 L284.5 741.6 L286.0 742.4 L287.5 743.1 L289.0 743.1 L290.5 742.6 L292.0 742.1 L293.5 741.7 L295.0 741.3 L296.5 741.2 L298.0 741.4 L299.5 741.4 L301.0 741.1 L302.5 740.8 L304.0 740.7 L305.5 740.8 L307.0 740.9 L308.5 740.6 L310.0 740.2 L311.5 739.8 L313.0 739.6 L314.5 739.6 L316.0 739.4 L317.5 739.1 L319.0 738.8 L320.5 738.7 L322.0 738.7 L323.5 738.7 L325.0 738.6 L326.5 738.6 L328.0 738.7 L329.5 738.8 L331.0 738.9 L332.5 739.0 L334.0 738.9 L335.5 738.8 L337.0 738.7 L338.5 738.7 L340.0 738.7 L341.5 738.8 L343.0 738.8 L344.5 738.6 L346.0 738.4 L347.5 738.2 L349.0 738.1 L350.5 737.9 L352.0 737.8 L353.5 737.5 L355.0 737.1 L356.5 736.5 L358.0 735.8 L359.5 734.9 L361.0 734.0 L362.5 732.6 L364.0 730.8 L365.5 728.7 L367.0 726.9 L368.5 725.1 L370.0 723.0 L371.5 720.7 L373.0 718.3 L374.5 715.7 L376.0 712.6 L377.5 708.9 L379.0 704.9 L380.5 700.7 L382.0 696.6 L383.5 692.4 L385.0 688.4 L386.5 684.4 L388.0 680.5 L389.5 676.5 L391.0 672.6 L392.5 668.7 L394.0 664.9 L395.5 661.2 L397.0 657.7 L398.5 654.7 L400.0 652.1 L401.5 649.8 L403.0 647.5 L404.5 645.3 L406.0 643.0 L407.5 640.6 L409.0 638.0 L410.5 635.2 L412.0 632.4 L413.5 629.8 L415.0 627.4 L416.5 625.1 L418.0 622.8 L419.5 620.5 L421.0 618.5 L422.5 617.2 L424.0 616.5 L425.5 616.0 L427.0 615.5 L428.5 615.1 L430.0 615.0 L431.5 615.4 L433.0 616.4 L434.5 617.5 L436.0 618.6 L437.5 619.8 L439.0 621.0 L440.5 621.9 L442.0 622.5 L443.5 622.6 L445.0 622.7 L446.5 622.9 L448.0 623.0 L449.5 623.0 L451.0 622.6 L452.5 621.9 L454.0 620.9 L455.5 620.1 L457.0 619.4 L458.5 619.0 L460.0 618.5 L461.5 618.0 L463.0 617.8 L464.5 617.9 L466.0 618.2 L467.5 618.5 L469.0 618.9 L470.5 619.4 L472.0 619.9 L473.5 620.6 L475.0 621.4 L476.5 622.4 L478.0 623.4 L479.5 624.3 L481.0 625.3 L482.5 626.2 L484.0 627.3 L485.5 628.3 L487.0 629.4 L488.5 630.4 L490.0 631.4 L491.5 632.4 L493.0 633.4 L494.5 634.3 L496.0 635.2 L497.5 636.2 L499.0 637.1 L500.5 638.1 L502.0 639.1 L503.5 640.0 L505.0 640.9 L506.5 641.7 L508.0 642.4 L509.5 643.0 L511.0 643.7 L512.5 644.6 L514.0 645.5 L515.5 646.5 L517.0 647.5 L518.5 648.5 L520.0 649.5 L521.5 650.5 L523.0 651.6 L524.5 652.7 L526.0 653.8 L527.5 654.8 L529.0 655.8 L530.5 657.1 L532.0 658.6 L533.5 660.6 L535.0 662.6 L536.5 664.4 L538.0 666.1 L539.5 667.7 L541.0 669.5 L542.5 671.3 L544.0 673.1 L545.5 674.9 L547.0 676.7 L548.5 678.3 L550.0 680.5 L551.5 683.2 L553.0 686.8 L554.5 690.3 L556.0 693.8 L557.5 696.9 L559.0 699.6 L560.5 701.9 L562.0 704.3 L563.5 706.7 L565.0 708.7 L566.5 710.5 L568.0 712.0 L569.5 713.6 L571.0 715.1 L572.5 716.4 L574.0 717.3 L575.5 717.8 L577.0 718.0 L578.5 718.2 L580.0 718.5 L581.5 718.9 L583.0 719.6 L584.5 720.5 L586.0 721.4 L587.5 722.3 L589.0 723.4 L590.5 724.8 L592.0 726.2 L593.5 727.6 L595.0 729.2 L596.5 731.0 L598.0 732.9 L599.5 734.8 L601.0 736.7 L602.5 738.6 L604.0 740.5 L605.5 742.6 L607.0 744.8 L608.5 746.8 L610.0 748.6 L611.5 750.3 L613.0 752.0 L614.5 753.8 L616.0 755.4 L617.5 756.7 L619.0 757.9 L620.5 759.1 L622.0 760.2 L623.5 760.8 L625.0 761.2 L626.5 761.3 L628.0 761.6 L629.5 761.7 L631.0 761.7 L632.5 761.6 L634.0 761.4 L635.5 761.3 L637.0 761.2 L638.5 761.2 L640.0 761.2 L641.5 761.4 L643.0 761.6 L644.5 761.9 L646.0 762.0 L647.5 762.1 L649.0 762.2 L650.5 762.5 L652.0 763.0 L653.5 763.6 L655.0 764.2 L656.5 764.6 L658.0 765.0 L659.5 765.4 L661.0 765.9 L662.5 766.4 L664.0 767.0 L665.5 767.5 L667.0 768.0 L668.5 768.5 L670.0 769.1 L671.5 769.4 L673.0 769.7 L674.5 769.8 L676.0 769.8 L677.5 769.9 L679.0 770.0 L680.5 770.0 L682.0 770.1 L683.5 770.2 L685.0 770.2 L686.5 770.1 L688.0 770.0 L689.5 769.9 L691.0 769.9 L692.5 769.8 L694.0 769.5 L695.5 768.9 L697.0 768.0 L698.5 767.0 L700.0 766.2 L701.5 765.8 L703.0 765.7 L704.5 765.8 L706.0 766.0 L707.5 766.6 L709.0 767.8 L710.5 769.3 L712.0 770.9 L713.5 773.0 L715.0 775.4 L716.5 778.1 L718.0 780.7 L719.5 783.1 L721.0 785.4 L722.5 787.4 L724.0 789.3 L725.5 791.1 L727.0 793.1 L728.5 794.7 L730.0 796.0 L731.5 796.8 L733.0 797.7 L734.5 798.6 L736.0 799.4 L737.5 800.1 L739.0 800.8 L740.5 801.6 L742.0 802.3 L743.5 803.2 L745.0 804.1 L746.5 804.9 L748.0 805.5 L749.5 805.9 L751.0 806.3 L752.5 806.5 L754.0 806.7 L755.5 806.8 L757.0 807.0 L758.5 807.3 L760.0 807.6 L761.5 808.0 L763.0 808.3 L764.5 808.6 L766.0 808.9 L767.5 809.3 L769.0 809.7 L770.5 810.1 L772.0 810.5 L773.5 810.9 L775.0 811.4 L776.5 811.9 L778.0 812.5 L779.5 813.1 L781.0 813.7 L782.5 814.4 L784.0 815.0 L785.5 815.6 L787.0 816.0 L788.5 816.4 L790.0 816.8 L791.5 817.3 L793.0 817.8 L794.5 818.4 L796.0 818.9 L797.5 819.5 L799.0 820.2 L800.5 821.0 L802.0 822.2 L803.5 823.6 L805.0 825.0 L806.5 826.3 L808.0 827.2 L809.5 827.9 L811.0 828.6 L812.5 829.1 L814.0 829.5 L815.5 829.9 L817.0 830.3 L818.5 830.8 L820.0 831.4 L821.5 832.0 L823.0 832.5 L824.5 832.9 L826.0 833.4 L827.5 833.8 L829.0 834.2 L830.5 834.6 L832.0 835.0 L833.5 835.4 L835.0 835.7 L836.5 835.9 L838.0 836.1 L839.5 836.3 L841.0 836.4 L842.5 836.6 L844.0 836.8 L845.5 837.0 L847.0 837.1 L848.5 837.1 L850.0 837.2 L851.5 837.2 L853.0 837.3 L854.5 837.3 L856.0 837.3 L857.5 837.4 L859.0 837.6 L860.5 837.9 L862.0 838.3 L863.5 838.5 L865.0 838.6 L866.5 838.8 L868.0 839.2 L869.5 839.8 L871.0 840.4 L872.5 840.9 L874.0 841.6 L875.5 842.4 L877.0 842.9 L878.5 843.1 L880.0 843.0 L881.5 843.0 L883.0 842.8 L884.5 842.7 L886.0 842.5 L887.5 842.4 L889.0 842.4 L890.5 842.5 L892.0 842.4 L893.5 842.1 L895.0 841.6 L896.5 841.1 L898.0 840.7 L899.5 841.0 L901.0 841.8 L902.5 842.6 L904.0 842.9 L905.5 842.9 L907.0 843.0 L908.5 843.1 L910.0 843.3 L911.5 843.4 L913.0 843.5 L914.5 843.7 L916.0 844.0 L917.5 844.5 L919.0 844.5 L920.5 843.9 L922.0 842.9 L923.5 841.8 L925.0 840.8 L926.5 839.9 L928.0 839.0 L929.5 838.2 L931.0 837.4 L932.5 836.7 L934.0 836.0 L935.5 835.4 L937.0 835.2 L938.5 835.3 L940.0 835.7 L941.5 836.1 L943.0 836.5 L944.5 836.9 L946.0 837.2 L947.5 837.6 L949.0 837.8 L950.5 837.7 L952.0 837.4 L953.5 837.0 L955.0 836.7 L956.5 836.3 L958.0 835.9 L959.5 835.6 L961.0 835.2 L962.5 834.9 L964.0 834.6 L965.5 834.2 L967.0 833.7 L968.5 833.2 L970.0 832.6 L971.5 832.1 L973.0 831.6 L974.5 831.0 L976.0 830.4 L977.5 829.7 L979.0 829.0 L980.5 828.2 L982.0 827.4 L983.5 826.6 L985.0 825.8 L986.5 824.9 L988.0 823.8 L989.5 822.5 L991.0 820.9 L992.5 819.4 L994.0 818.0 L995.5 816.9 L997.0 816.1 L998.5 815.6 L1000.0 815.1 L1001.5 814.5 L1003.0 814.0 L1004.5 813.5 L1006.0 813.0 L1007.5 812.5 L1009.0 812.1 L1010.5 811.7 L1012.0 811.2 L1013.5 810.8 L1015.0 810.4 L1016.5 810.1 L1018.0 810.0 L1019.5 809.8 L1021.0 809.6 L1022.5 809.4 L1024.0 809.2 L1025.5 809.1 L1027.0 809.0 L1028.5 809.0 L1030.0 808.9 L1031.5 808.8 L1033.0 808.7 L1034.5 808.7 L1036.0 808.7 L1037.5 808.7 L1039.0 808.8 L1040.5 808.8 L1042.0 808.8 L1043.5 808.8 L1045.0 808.6 L1046.5 808.4 L1048.0 808.2 L1049.5 807.9 L1051.0 807.7 L1052.5 807.5 L1054.0 807.2 L1055.5 806.7 L1057.0 805.8 L1058.5 804.8 L1060.0 803.3 L1061.5 801.5 L1063.0 799.4 L1064.5 797.2 L1066.0 794.8 L1067.5 792.3 L1069.0 789.6 L1070.5 787.0 L1072.0 784.5 L1073.5 782.3 L1075.0 780.5 L1076.5 778.9 L1078.0 777.3 L1079.5 775.8 L1081.0 774.6 L1082.5 773.6 L1084.0 772.8 L1085.5 772.0 L1087.0 771.2 L1088.5 770.6 L1090.0 770.1 L1091.5 769.7 L1093.0 769.3 L1094.5 768.9 L1096.0 768.5 L1097.5 768.1 L1099.0 767.9 L1100.5 767.7 L1102.0 767.6 L1103.5 767.4 L1105.0 767.3 L1106.5 767.1 L1108.0 766.9 L1109.5 766.5 L1111.0 766.0 L1112.5 765.5 L1114.0 765.1 L1115.5 764.6 L1117.0 764.1 L1118.5 763.6 L1120.0 763.1 L1121.5 762.3 L1123.0 761.5 L1124.5 760.5 L1126.0 759.6 L1127.5 758.6 L1129.0 757.7 L1130.5 756.8 L1132.0 756.0 L1133.5 755.2 L1135.0 754.5 L1136.5 753.7 L1138.0 753.0 L1139.5 752.3 L1141.0 751.7 L1142.5 751.2 L1144.0 750.9 L1145.5 750.6 L1147.0 750.3 L1148.5 750.1 L1150.0 750.1 L1151.5 750.1 L1153.0 749.9 L1154.5 749.3 L1156.0 748.3 L1157.5 747.3 L1159.0 746.2 L1160.5 745.2 L1162.0 744.0 L1163.5 742.9 L1165.0 741.8 L1166.5 740.8 L1168.0 739.8 L1169.5 738.7 L1171.0 737.8 L1172.5 736.9 L1174.0 736.1 L1175.5 735.2 L1177.0 734.4 L1178.5 733.6 L1180.0 732.8 L1181.5 732.0 L1183.0 731.2 L1184.5 730.4 L1186.0 729.7 L1187.5 729.0 L1189.0 728.3 L1190.5 727.6 L1192.0 726.9 L1193.5 726.1 L1195.0 725.4 L1196.5 724.6 L1198.0 723.8 L1199.5 723.0 L1201.0 722.7 L1202.5 722.8 L1204.0 723.2 L1205.5 723.5 L1207.0 723.7 L1208.5 724.1 L1210.0 724.5 L1211.5 725.1 L1213.0 725.5 L1214.5 725.8 L1216.0 725.8 L1217.5 725.8 L1219.0 725.8 L1220.5 725.7 L1222.0 725.7 L1223.5 725.7 L1225.0 725.8 L1226.5 726.0 L1228.0 726.2 L1229.5 726.4 L1231.0 726.7 L1232.5 726.9 L1234.0 727.1 L1235.5 727.2 L1237.0 727.3 L1238.5 727.4 L1240.0 727.4 L1241.5 727.5 L1243.0 727.6 L1244.5 727.6 L1246.0 727.6 L1247.5 727.6 L1249.0 727.6 L1250.5 727.6 L1252.0 727.6 L1253.5 727.7 L1255.0 728.1 L1256.5 728.6 L1258.0 729.3 L1259.5 729.9 L1261.0 730.6 L1262.5 731.2 L1264.0 731.9 L1265.5 732.5 L1267.0 733.2 L1268.5 733.8 L1270.0 734.6 L1271.5 735.2 L1273.0 735.8 L1274.5 736.4 L1276.0 736.9 L1277.5 737.4 L1279.0 738.0 L1280.5 738.7 L1282.0 739.5 L1283.5 740.2 L1285.0 740.8 L1286.5 741.1 L1288.0 741.5 L1289.5 742.0 L1291.0 742.7 L1292.5 743.5 L1294.0 744.2 L1295.5 745.0 L1297.0 746.0 L1298.5 747.2 L1300.0 748.7 L1301.5 750.3 L1303.0 751.8 L1304.5 753.0 L1306.0 753.7 L1307.5 754.2 L1309.0 754.8 L1310.5 755.4 L1312.0 756.1 L1313.5 756.7 L1315.0 757.3 L1316.5 757.7 L1318.0 758.1 L1319.5 758.4 L1321.0 758.6 L1322.5 758.9 L1324.0 759.1 L1325.5 759.4 L1327.0 759.5 L1328.5 759.6 L1330.0 759.5 L1331.5 759.4 L1333.0 759.3 L1334.5 759.2 L1336.0 759.1 L1337.5 759.0 L1339.0 758.9 L1340.5 758.8 L1342.0 758.7 L1343.5 758.7 L1345.0 758.7 L1346.5 758.7 L1348.0 758.7 L1349.5 758.7 L1351.0 758.7 L1352.5 758.7 L1354.0 758.7 L1355.5 758.6 L1357.0 758.6 L1358.5 758.5 L1360.0 758.4 L1361.5 758.4 L1363.0 758.3 L1364.5 758.3 L1366.0 758.3 L1367.5 758.3 L1369.0 758.3 L1370.5 758.3 L1372.0 758.4 L1373.5 758.5 L1375.0 758.6 L1376.5 758.8 L1378.0 759.0 L1379.5 759.1 L1381.0 759.3 L1382.5 759.5 L1384.0 759.7 L1385.5 759.9 L1387.0 760.1 L1388.5 760.4 L1390.0 760.6 L1391.5 760.9 L1393.0 761.0 L1394.5 761.2 L1396.0 761.4 L1397.5 761.6 L1399.0 761.8 L1400.5 762.0 L1402.0 762.2 L1403.5 762.4 L1405.0 762.5 L1406.5 762.7 L1408.0 762.9 L1409.5 763.1 L1411.0 763.3 L1412.5 763.4 L1414.0 763.6 L1415.5 763.4 L1417.0 762.9 L1418.5 762.2 L1420.0 761.4 L1421.5 760.7 L1423.0 760.1 L1424.5 759.5 L1426.0 759.0 L1427.5 758.6 L1429.0 758.1 L1430.5 757.6 L1432.0 757.1 L1433.5 756.7 L1435.0 756.4 L1436.5 756.2 L1438.0 755.9 L1439.5 755.8 L1441.0 755.9 L1442.5 756.3 L1444.0 756.9 L1445.5 757.4 L1447.0 757.8 L1448.5 758.0 L1450.0 758.1 L1451.5 758.0 L1453.0 758.1 L1454.5 758.1 L1456.0 758.2 L1457.5 758.3 L1459.0 758.4 L1460.5 758.5 L1462.0 758.4 L1463.5 758.3 L1465.0 758.2 L1466.5 758.4 L1468.0 758.5 L1469.5 758.6 L1471.0 758.6 L1472.5 758.5 L1474.0 758.5 L1475.5 758.4 L1477.0 758.4 L1478.5 758.6 L1480.0 758.9 L1481.5 759.2 L1483.0 759.4 L1484.5 759.5 L1486.0 759.6 L1487.5 759.6 L1489.0 759.6 L1490.5 759.5 L1492.0 759.5 L1493.5 759.5 L1495.0 759.5 L1496.5 759.5 L1498.0 759.3 L1499.5 758.9 L1501.0 758.4 L1502.5 757.8 L1504.0 757.4 L1505.5 756.9 L1507.0 756.4 L1508.5 756.0 L1510.0 755.5 L1511.5 754.9 L1513.0 754.3 L1514.5 753.7 L1516.0 753.0 L1517.5 752.4 L1519.0 751.7 L1520.5 751.1 L1522.0 750.4 L1523.5 749.8 L1525.0 749.1 L1526.5 748.5 L1528.0 747.8 L1529.5 747.2 L1531.0 746.5 L1532.5 745.7 L1534.0 745.0 L1535.5 744.4 L1537.0 743.8 L1538.5 743.2 L1540.0 742.6 L1541.5 742.1 L1543.0 741.5 L1544.5 740.9 L1546.0 740.3 L1547.5 739.7 L1549.0 739.1 L1550.5 738.5 L1552.0 738.0 L1553.5 737.5 L1555.0 736.9 L1556.5 736.4 L1558.0 736.0 L1559.5 735.7 L1561.0 734.8 L1562.5 733.4 L1564.0 731.4 L1565.5 729.5 L1567.0 727.7 L1568.5 725.9 L1570.0 724.2 L1571.5 722.9 L1573.0 721.9 L1574.5 721.1 L1576.0 720.3 L1577.5 719.6 L1579.0 718.9 L1580.5 718.3 L1582.0 717.8 L1583.5 717.4 L1585.0 717.0 L1586.5 716.6 L1588.0 716.0 L1589.5 715.3 L1591.0 714.5 L1592.5 713.8 L1594.0 713.0 L1595.5 712.3 L1597.0 711.6 L1598.5 711.0 L1600.0 710.4 L1601.5 709.7 L1603.0 709.0 L1604.5 708.3 L1606.0 707.7 L1607.5 707.1 L1609.0 706.6 L1610.5 706.1 L1612.0 705.7 L1613.5 705.2 L1615.0 704.7 L1616.5 704.3 L1618.0 703.9 L1619.5 703.6 L1621.0 703.3 L1622.5 703.0 L1624.0 702.6 L1625.5 702.2 L1627.0 701.7 L1628.5 701.2 L1630.0 700.7 L1631.5 700.0 L1633.0 699.3 L1634.5 698.7 L1636.0 698.2 L1637.5 697.7 L1639.0 697.3 L1640.5 696.8 L1642.0 696.5 L1643.5 696.1 L1645.0 695.8 L1646.5 695.6 L1648.0 695.3 L1649.5 695.0 L1651.0 694.7 L1652.5 694.4 L1654.0 694.3 L1655.5 694.2 L1657.0 694.3 L1658.5 694.4 L1660.0 694.5 L1661.5 694.5 L1663.0 694.6 L1664.5 694.8 L1666.0 695.0 L1667.5 695.3 L1669.0 695.6 L1670.5 695.9 L1672.0 696.2 L1673.5 696.5 L1675.0 696.7 L1676.5 696.8 L1678.0 696.8 L1679.5 696.9 L1681.0 696.9 L1682.5 696.9 L1684.0 696.9 L1685.5 696.8 L1687.0 696.7 L1688.5 696.6 L1690.0 696.5 L1691.5 696.4 L1693.0 696.3 L1694.5 696.2 L1696.0 696.1 L1697.5 696.1 L1699.0 696.1 L1700.5 696.1 L1702.0 696.1 L1703.5 696.1 L1705.0 696.1 L1706.5 696.1 L1708.0 696.1 L1709.5 696.1 L1711.0 696.2 L1712.5 696.3 L1714.0 696.5 L1715.5 696.8 L1717.0 697.0 L1718.5 697.3 L1720.0 697.5 L1721.5 697.8 L1723.0 698.0 L1724.5 698.3 L1726.0 698.7 L1727.5 699.0 L1729.0 699.3 L1730.5 699.6 L1732.0 699.9 L1733.5 700.1" stroke="#c460e2" stroke-width="1" fill="none" stroke-linejoin="round"/>
<path d="M70.0 362.5 L71.5 363.0 L73.0 363.7 L74.5 364.4 L76.0 365.1 L77.5 365.8 L79.0 366.5 L80.5 367.3 L82.0 368.0 L83.5 368.7 L85.0 369.4 L86.5 370.1 L88.0 370.8 L89.5 371.5 L91.0 372.0 L92.5 372.5 L94.0 373.2 L95.5 374.0 L97.0 374.8 L98.5 375.6 L100.0 376.5 L101.5 377.3 L103.0 378.0 L104.5 378.6 L106.0 379.3 L107.5 379.9 L109.0 380.6 L110.5 381.2 L112.0 381.9 L113.5 382.4 L115.0 382.7 L116.5 382.8 L118.0 382.9 L119.5 383.3 L121.0 383.7 L122.5 384.0 L124.0 384.0 L125.5 384.0 L127.0 383.9 L128.5 383.9 L130.0 383.9 L131.5 383.8 L133.0 383.6 L134.5 383.4 L136.0 383.1 L137.5 382.8 L139.0 382.7 L140.5 382.7 L142.0 382.9 L143.5 383.6 L145.0 385.2 L146.5 387.3 L148.0 388.6 L149.5 388.8 L151.0 389.1 L152.5 390.0 L154.0 391.6 L155.5 393.2 L157.0 395.4 L158.5 397.8 L160.0 400.2 L161.5 401.6 L163.0 402.5 L164.5 402.9 L166.0 403.8 L167.5 404.7 L169.0 405.7 L170.5 406.9 L172.0 408.3 L173.5 409.7 L175.0 411.1 L176.5 412.5 L178.0 413.7 L179.5 415.0 L181.0 416.4 L182.5 418.0 L184.0 419.7 L185.5 421.3 L187.0 423.0 L188.5 424.8 L190.0 426.7 L191.5 429.0 L193.0 431.4 L194.5 434.0 L196.0 436.5 L197.5 438.9 L199.0 441.2 L200.5 443.7 L202.0 446.4 L203.5 449.1 L205.0 451.8 L206.5 454.6 L208.0 457.5 L209.5 460.4 L211.0 463.3 L212.5 466.1 L214.0 468.9 L215.5 471.9 L217.0 475.2 L218.5 478.7 L220.0 482.3 L221.5 485.8 L223.0 489.3 L224.5 492.9 L226.0 496.7 L227.5 500.5 L229.0 504.4 L230.5 508.2 L232.0 512.1 L233.5 515.9 L235.0 519.8 L236.5 523.5 L238.0 527.1 L239.5 530.6 L241.0 534.4 L242.5 538.5 L244.0 542.9 L245.5 547.2 L247.0 551.6 L248.5 556.0 L250.0 560.4 L251.5 565.1 L253.0 570.1 L254.5 575.3 L256.0 580.5 L257.5 585.7 L259.0 591.0 L260.5 596.2 L262.0 601.4 L263.5 605.8 L265.0 609.5 L266.5 612.4 L268.0 615.7 L269.5 619.4 L271.0 623.6 L272.5 627.8 L274.0 631.8 L275.5 635.1 L277.0 637.8 L278.5 640.2 L280.0 642.4 L281.5 644.6 L283.0 646.8 L284.5 649.1 L286.0 651.6 L287.5 654.0 L289.0 656.1 L290.5 657.9 L292.0 659.7 L293.5 661.7 L295.0 663.7 L296.5 665.9 L298.0 668.3 L299.5 670.5 L301.0 672.2 L302.5 673.6 L304.0 675.2 L305.5 677.0 L307.0 678.7 L308.5 679.9 L310.0 680.7 L311.5 681.3 L313.0 682.2 L314.5 683.1 L316.0 683.5 L317.5 683.7 L319.0 683.6 L320.5 683.6 L322.0 683.7 L323.5 683.8 L325.0 683.8 L326.5 684.0 L328.0 684.1 L329.5 684.3 L331.0 684.4 L332.5 684.6 L334.0 684.6 L335.5 684.3 L337.0 683.8 L338.5 683.5 L340.0 683.2 L341.5 682.8 L343.0 682.3 L344.5 681.4 L346.0 680.4 L347.5 679.4 L349.0 678.4 L350.5 677.4 L352.0 676.4 L353.5 675.4 L355.0 674.2 L356.5 672.9 L358.0 671.4 L359.5 669.7 L361.0 667.9 L362.5 665.8 L364.0 663.3 L365.5 660.8 L367.0 658.7 L368.5 656.7 L370.0 654.7 L371.5 652.5 L373.0 650.2 L374.5 648.1 L376.0 645.9 L377.5 643.6 L379.0 641.1 L380.5 638.5 L382.0 635.9 L383.5 633.4 L385.0 631.1 L386.5 628.9 L388.0 626.7 L389.5 624.5 L391.0 622.4 L392.5 620.3 L394.0 618.2 L395.5 616.2 L397.0 614.4 L398.5 613.1 L400.0 612.0 L401.5 611.2 L403.0 610.3 L404.5 609.5 L406.0 608.7 L407.5 607.7 L409.0 606.3 L410.5 604.6 L412.0 602.9 L413.5 601.4 L415.0 600.0 L416.5 598.6 L418.0 597.3 L419.5 596.0 L421.0 594.9 L422.5 594.3 L424.0 594.2 L425.5 594.2 L427.0 594.2 L428.5 594.3 L430.0 594.5 L431.5 594.8 L433.0 595.4 L434.5 596.0 L436.0 596.6 L437.5 597.4 L439.0 598.3 L440.5 599.0 L442.0 599.3 L443.5 599.4 L445.0 599.5 L446.5 599.6 L448.0 599.7 L449.5 599.7 L451.0 599.5 L452.5 598.9 L454.0 598.2 L455.5 597.5 L457.0 597.0 L458.5 596.6 L460.0 596.2 L461.5 595.8 L463.0 595.5 L464.5 595.5 L466.0 595.7 L467.5 595.9 L469.0 596.2 L470.5 596.6 L472.0 597.0 L473.5 597.6 L475.0 598.3 L476.5 599.1 L478.0 599.8 L479.5 600.6 L481.0 601.4 L482.5 602.2 L484.0 603.0 L485.5 603.9 L487.0 604.9 L488.5 605.8 L490.0 606.7 L491.5 607.5 L493.0 608.2 L494.5 608.9 L496.0 609.6 L497.5 610.3 L499.0 611.1 L500.5 611.8 L502.0 612.5 L503.5 613.2 L505.0 613.9 L506.5 614.5 L508.0 615.0 L509.5 615.5 L511.0 616.1 L512.5 616.9 L514.0 617.9 L515.5 618.9 L517.0 619.9 L518.5 620.9 L520.0 622.0 L521.5 623.0 L523.0 624.1 L524.5 625.3 L526.0 626.3 L527.5 627.3 L529.0 628.2 L530.5 629.4 L532.0 630.7 L533.5 632.4 L535.0 634.0 L536.5 635.4 L538.0 636.5 L539.5 637.5 L541.0 638.6 L542.5 639.8 L544.0 640.9 L545.5 642.0 L547.0 643.1 L548.5 644.0 L550.0 645.1 L551.5 646.5 L553.0 648.5 L554.5 650.5 L556.0 652.5 L557.5 654.2 L559.0 655.6 L560.5 656.9 L562.0 658.2 L563.5 659.6 L565.0 660.7 L566.5 661.7 L568.0 662.7 L569.5 664.0 L571.0 665.4 L572.5 666.8 L574.0 668.2 L575.5 669.5 L577.0 670.7 L578.5 672.2 L580.0 673.7 L581.5 675.4 L583.0 677.1 L584.5 678.7 L586.0 680.1 L587.5 681.3 L589.0 682.7 L590.5 684.3 L592.0 685.9 L593.5 687.4 L595.0 689.2 L596.5 691.0 L598.0 692.8 L599.5 694.6 L601.0 696.4 L602.5 698.1 L604.0 700.0 L605.5 701.9 L607.0 703.8 L608.5 705.4 L610.0 706.6 L611.5 707.7 L613.0 709.0 L614.5 710.4 L616.0 711.9 L617.5 713.3 L619.0 714.6 L620.5 716.0 L622.0 717.2 L623.5 718.2 L625.0 719.1 L626.5 720.0 L628.0 721.1 L629.5 722.0 L631.0 722.8 L632.5 723.6 L634.0 724.3 L635.5 725.2 L637.0 726.0 L638.5 726.9 L640.0 727.9 L641.5 729.0 L643.0 730.1 L644.5 731.1 L646.0 732.0 L647.5 732.9 L649.0 733.7 L650.5 734.7 L652.0 735.7 L653.5 736.9 L655.0 738.1 L656.5 739.1 L658.0 739.8 L659.5 740.4 L661.0 741.1 L662.5 741.8 L664.0 742.5 L665.5 743.1 L667.0 743.8 L668.5 744.5 L670.0 745.2 L671.5 745.7 L673.0 745.9 L674.5 746.0 L676.0 746.1 L677.5 746.1 L679.0 746.2 L680.5 746.2 L682.0 746.3 L683.5 746.3 L685.0 746.3 L686.5 746.3 L688.0 746.4 L689.5 746.4 L691.0 746.5 L692.5 746.6 L694.0 746.6 L695.5 746.3 L697.0 745.8 L698.5 745.2 L700.0 744.7 L701.5 744.5 L703.0 744.5 L704.5 744.5 L706.0 744.6 L707.5 745.0 L709.0 745.8 L710.5 746.9 L712.0 748.0 L713.5 749.5 L715.0 751.3 L716.5 753.2 L718.0 754.9 L719.5 756.5 L721.0 757.8 L722.5 759.0 L724.0 760.1 L725.5 761.1 L727.0 762.3 L728.5 763.3 L730.0 764.1 L731.5 764.6 L733.0 765.2 L734.5 765.7 L736.0 766.1 L737.5 766.6 L739.0 767.2 L740.5 767.8 L742.0 768.4 L743.5 769.1 L745.0 770.1 L746.5 771.1 L748.0 772.2 L749.5 773.1 L751.0 773.9 L752.5 774.6 L754.0 775.1 L755.5 775.5 L757.0 776.0 L758.5 776.6 L760.0 777.2 L761.5 777.8 L763.0 778.3 L764.5 778.9 L766.0 779.3 L767.5 779.8 L769.0 780.3 L770.5 780.8 L772.0 781.3 L773.5 781.8 L775.0 782.3 L776.5 782.9 L778.0 783.5 L779.5 784.1 L781.0 784.7 L782.5 785.3 L784.0 785.9 L785.5 786.5 L787.0 787.0 L788.5 787.4 L790.0 787.9 L791.5 788.5 L793.0 789.2 L794.5 789.9 L796.0 790.6 L797.5 791.3 L799.0 792.1 L800.5 793.1 L802.0 794.5 L803.5 796.2 L805.0 798.1 L806.5 799.8 L808.0 801.2 L809.5 802.5 L811.0 803.7 L812.5 804.7 L814.0 805.5 L815.5 806.4 L817.0 807.2 L818.5 808.1 L820.0 809.0 L821.5 809.9 L823.0 810.7 L824.5 811.2 L826.0 811.8 L827.5 812.4 L829.0 813.0 L830.5 813.6 L832.0 814.1 L833.5 814.6 L835.0 815.0 L836.5 815.1 L838.0 815.3 L839.5 815.4 L841.0 815.6 L842.5 815.7 L844.0 815.9 L845.5 816.0 L847.0 816.1 L848.5 816.2 L850.0 816.2 L851.5 816.2 L853.0 816.2 L854.5 816.2 L856.0 816.2 L857.5 816.4 L859.0 816.7 L860.5 817.3 L862.0 817.9 L863.5 818.4 L865.0 818.8 L866.5 819.1 L868.0 819.5 L869.5 820.1 L871.0 820.7 L872.5 821.3 L874.0 822.0 L875.5 822.9 L877.0 823.7 L878.5 824.2 L880.0 824.5 L881.5 824.8 L883.0 825.1 L884.5 825.3 L886.0 825.4 L887.5 825.6 L889.0 825.9 L890.5 826.2 L892.0 826.2 L893.5 825.8 L895.0 825.2 L896.5 824.5 L898.0 824.2 L899.5 824.4 L901.0 825.0 L902.5 825.3 L904.0 824.8 L905.5 823.8 L907.0 823.0 L908.5 822.3 L910.0 821.7 L911.5 821.0 L913.0 820.3 L914.5 819.8 L916.0 819.5 L917.5 819.3 L919.0 818.8 L920.5 817.9 L922.0 816.7 L923.5 815.5 L925.0 814.6 L926.5 813.6 L928.0 812.7 L929.5 811.9 L931.0 811.1 L932.5 810.4 L934.0 809.8 L935.5 809.3 L937.0 809.0 L938.5 809.0 L940.0 809.3 L941.5 809.5 L943.0 809.7 L944.5 809.9 L946.0 810.0 L947.5 810.2 L949.0 810.2 L950.5 810.0 L952.0 809.7 L953.5 809.3 L955.0 809.0 L956.5 808.7 L958.0 808.4 L959.5 808.1 L961.0 807.8 L962.5 807.5 L964.0 807.2 L965.5 806.7 L967.0 806.2 L968.5 805.6 L970.0 804.9 L971.5 804.3 L973.0 803.7 L974.5 803.1 L976.0 802.4 L977.5 801.6 L979.0 800.8 L980.5 800.0 L982.0 799.1 L983.5 798.3 L985.0 797.4 L986.5 796.5 L988.0 795.5 L989.5 794.5 L991.0 793.3 L992.5 792.2 L994.0 791.1 L995.5 790.3 L997.0 789.8 L998.5 789.4 L1000.0 789.1 L1001.5 788.7 L1003.0 788.4 L1004.5 788.0 L1006.0 787.6 L1007.5 787.2 L1009.0 786.7 L1010.5 786.3 L1012.0 785.9 L1013.5 785.4 L1015.0 785.0 L1016.5 784.5 L1018.0 784.1 L1019.5 783.6 L1021.0 783.2 L1022.5 782.7 L1024.0 782.3 L1025.5 781.9 L1027.0 781.7 L1028.5 781.4 L1030.0 781.2 L1031.5 780.9 L1033.0 780.7 L1034.5 780.6 L1036.0 780.5 L1037.5 780.5 L1039.0 780.4 L1040.5 780.3 L1042.0 780.3 L1043.5 780.1 L1045.0 779.9 L1046.5 779.6 L1048.0 779.3 L1049.5 778.9 L1051.0 778.6 L1052.5 778.2 L1054.0 777.8 L1055.5 777.3 L1057.0 776.6 L1058.5 775.8 L1060.0 774.9 L1061.5 773.8 L1063.0 772.7 L1064.5 771.5 L1066.0 770.3 L1067.5 769.1 L1069.0 767.9 L1070.5 766.6 L1072.0 765.4 L1073.5 764.3 L1075.0 763.4 L1076.5 762.5 L1078.0 761.6 L1079.5 760.8 L1081.0 760.0 L1082.5 759.2 L1084.0 758.5 L1085.5 757.7 L1087.0 757.0 L1088.5 756.3 L1090.0 755.7 L1091.5 755.2 L1093.0 754.6 L1094.5 754.0 L1096.0 753.4 L1097.5 752.9 L1099.0 752.4 L1100.5 752.0 L1102.0 751.6 L1103.5 751.2 L1105.0 750.8 L1106.5 750.4 L1108.0 749.9 L1109.5 749.3 L1111.0 748.7 L1112.5 748.0 L1114.0 747.4 L1115.5 746.7 L1117.0 746.1 L1118.5 745.4 L1120.0 744.7 L1121.5 743.8 L1123.0 742.9 L1124.5 741.8 L1126.0 740.8 L1127.5 739.7 L1129.0 738.7 L1130.5 737.6 L1132.0 736.6 L1133.5 735.6 L1135.0 734.6 L1136.5 733.6 L1138.0 732.6 L1139.5 731.6 L1141.0 730.7 L1142.5 729.9 L1144.0 729.2 L1145.5 728.4 L1147.0 727.8 L1148.5 727.3 L1150.0 727.1 L1151.5 727.0 L1153.0 726.7 L1154.5 726.1 L1156.0 725.2 L1157.5 724.3 L1159.0 723.5 L1160.5 722.7 L1162.0 721.8 L1163.5 721.0 L1165.0 720.2 L1166.5 719.5 L1168.0 718.9 L1169.5 718.2 L1171.0 717.6 L1172.5 717.0 L1174.0 716.5 L1175.5 716.0 L1177.0 715.5 L1178.5 715.0 L1180.0 714.5 L1181.5 714.0 L1183.0 713.6 L1184.5 713.1 L1186.0 712.7 L1187.5 712.2 L1189.0 711.8 L1190.5 711.4 L1192.0 711.0 L1193.5 710.6 L1195.0 710.2 L1196.5 709.7 L1198.0 709.2 L1199.5 708.8 L1201.0 708.7 L1202.5 708.7 L1204.0 708.9 L1205.5 708.8 L1207.0 708.8 L1208.5 708.9 L1210.0 709.1 L1211.5 709.4 L1213.0 709.7 L1214.5 709.9 L1216.0 709.9 L1217.5 709.8 L1219.0 709.7 L1220.5 709.6 L1222.0 709.5 L1223.5 709.5 L1225.0 709.5 L1226.5 709.6 L1228.0 709.8 L1229.5 709.9 L1231.0 710.0 L1232.5 710.1 L1234.0 710.2 L1235.5 710.3 L1237.0 710.3 L1238.5 710.4 L1240.0 710.4 L1241.5 710.4 L1243.0 710.5 L1244.5 710.5 L1246.0 710.5 L1247.5 710.5 L1249.0 710.5 L1250.5 710.5 L1252.0 710.5 L1253.5 710.7 L1255.0 711.0 L1256.5 711.5 L1258.0 712.1 L1259.5 712.6 L1261.0 713.2 L1262.5 713.8 L1264.0 714.3 L1265.5 714.9 L1267.0 715.5 L1268.5 716.1 L1270.0 716.8 L1271.5 717.4 L1273.0 718.1 L1274.5 718.7 L1276.0 719.2 L1277.5 719.8 L1279.0 720.5 L1280.5 721.2 L1282.0 722.0 L1283.5 722.7 L1285.0 723.1 L1286.5 723.3 L1288.0 723.5 L1289.5 723.9 L1291.0 724.5 L1292.5 725.3 L1294.0 726.0 L1295.5 726.8 L1297.0 727.5 L1298.5 728.3 L1300.0 729.1 L1301.5 730.2 L1303.0 731.3 L1304.5 732.2 L1306.0 732.8 L1307.5 733.3 L1309.0 733.9 L1310.5 734.7 L1312.0 735.4 L1313.5 736.1 L1315.0 736.8 L1316.5 737.3 L1318.0 737.7 L1319.5 738.0 L1321.0 738.3 L1322.5 738.5 L1324.0 738.8 L1325.5 739.0 L1327.0 739.1 L1328.5 739.1 L1330.0 739.0 L1331.5 739.0 L1333.0 738.8 L1334.5 738.8 L1336.0 738.6 L1337.5 738.5 L1339.0 738.5 L1340.5 738.3 L1342.0 738.3 L1343.5 738.2 L1345.0 738.2 L1346.5 738.2 L1348.0 738.1 L1349.5 738.1 L1351.0 738.1 L1352.5 738.0 L1354.0 738.1 L1355.5 738.2 L1357.0 738.4 L1358.5 738.7 L1360.0 739.0 L1361.5 739.3 L1363.0 739.6 L1364.5 740.0 L1366.0 740.3 L1367.5 740.7 L1369.0 741.1 L1370.5 741.5 L1372.0 741.8 L1373.5 742.1 L1375.0 742.3 L1376.5 742.5 L1378.0 742.6 L1379.5 742.8 L1381.0 743.0 L1382.5 743.2 L1384.0 743.3 L1385.5 743.6 L1387.0 743.8 L1388.5 744.0 L1390.0 744.2 L1391.5 744.4 L1393.0 744.5 L1394.5 744.7 L1396.0 744.8 L1397.5 745.0 L1399.0 745.1 L1400.5 745.3 L1402.0 745.4 L1403.5 745.5 L1405.0 745.7 L1406.5 745.8 L1408.0 746.0 L1409.5 746.2 L1411.0 746.4 L1412.5 746.5 L1414.0 746.7 L1415.5 746.6 L1417.0 746.3 L1418.5 745.8 L1420.0 745.3 L1421.5 744.9 L1423.0 744.5 L1424.5 744.2 L1426.0 744.0 L1427.5 743.7 L1429.0 743.5 L1430.5 743.2 L1432.0 742.9 L1433.5 742.6 L1435.0 742.4 L1436.5 742.2 L1438.0 742.1 L1439.5 742.0 L1441.0 742.1 L1442.5 742.4 L1444.0 742.8 L1445.5 743.0 L1447.0 743.2 L1448.5 743.3 L1450.0 743.3 L1451.5 743.1 L1453.0 743.1 L1454.5 743.1 L1456.0 743.2 L1457.5 743.2 L1459.0 743.3 L1460.5 743.3 L1462.0 743.1 L1463.5 742.8 L1465.0 742.6 L1466.5 742.7 L1468.0 742.9 L1469.5 743.1 L1471.0 743.2 L1472.5 743.3 L1474.0 743.4 L1475.5 743.5 L1477.0 743.6 L1478.5 743.9 L1480.0 744.2 L1481.5 744.5 L1483.0 744.5 L1484.5 744.4 L1486.0 744.2 L1487.5 743.9 L1489.0 743.5 L1490.5 743.0 L1492.0 742.6 L1493.5 742.2 L1495.0 741.7 L1496.5 741.3 L1498.0 740.8 L1499.5 740.1 L1501.0 739.3 L1502.5 738.6 L1504.0 738.0 L1505.5 737.5 L1507.0 736.9 L1508.5 736.3 L1510.0 735.7 L1511.5 735.1 L1513.0 734.4 L1514.5 733.7 L1516.0 733.0 L1517.5 732.4 L1519.0 731.7 L1520.5 731.0 L1522.0 730.3 L1523.5 729.7 L1525.0 729.0 L1526.5 728.3 L1528.0 727.7 L1529.5 727.0 L1531.0 726.2 L1532.5 725.4 L1534.0 724.5 L1535.5 723.7 L1537.0 722.9 L1538.5 722.2 L1540.0 721.4 L1541.5 720.5 L1543.0 719.5 L1544.5 718.4 L1546.0 717.3 L1547.5 716.3 L1549.0 715.2 L1550.5 714.1 L1552.0 713.1 L1553.5 712.0 L1555.0 711.0 L1556.5 710.0 L1558.0 709.1 L1559.5 708.4 L1561.0 707.5 L1562.5 706.5 L1564.0 705.4 L1565.5 704.3 L1567.0 703.2 L1568.5 702.3 L1570.0 701.4 L1571.5 700.6 L1573.0 700.0 L1574.5 699.4 L1576.0 698.8 L1577.5 698.3 L1579.0 697.8 L1580.5 697.4 L1582.0 697.1 L1583.5 696.8 L1585.0 696.7 L1586.5 696.6 L1588.0 696.3 L1589.5 696.0 L1591.0 695.6 L1592.5 695.2 L1594.0 694.8 L1595.5 694.4 L1597.0 694.1 L1598.5 693.8 L1600.0 693.4 L1601.5 693.0 L1603.0 692.4 L1604.5 691.9 L1606.0 691.5 L1607.5 691.0 L1609.0 690.7 L1610.5 690.3 L1612.0 690.0 L1613.5 689.7 L1615.0 689.4 L1616.5 689.1 L1618.0 688.8 L1619.5 688.6 L1621.0 688.4 L1622.5 688.2 L1624.0 687.8 L1625.5 687.2 L1627.0 686.5 L1628.5 685.8 L1630.0 685.0 L1631.5 684.1 L1633.0 683.4 L1634.5 682.8 L1636.0 682.6 L1637.5 682.4 L1639.0 682.1 L1640.5 681.9 L1642.0 681.7 L1643.5 681.5 L1645.0 681.3 L1646.5 681.1 L1648.0 680.9 L1649.5 680.7 L1651.0 680.6 L1652.5 680.4 L1654.0 680.3 L1655.5 680.2 L1657.0 680.3 L1658.5 680.3 L1660.0 680.4 L1661.5 680.4 L1663.0 680.5 L1664.5 680.7 L1666.0 681.0 L1667.5 681.4 L1669.0 681.8 L1670.5 682.2 L1672.0 682.6 L1673.5 683.1 L1675.0 683.5 L1676.5 683.9 L1678.0 684.2 L1679.5 684.5 L1681.0 684.7 L1682.5 684.9 L1684.0 684.9 L1685.5 684.8 L1687.0 684.8 L1688.5 684.7 L1690.0 684.6 L1691.5 684.6 L1693.0 684.5 L1694.5 684.4 L1696.0 684.4 L1697.5 684.3 L1699.0 684.3 L1700.5 684.3 L1702.0 684.3 L1703.5 684.3 L1705.0 684.3 L1706.5 684.3 L1708.0 684.3 L1709.5 684.3 L1711.0 684.3 L1712.5 684.4 L1714.0 684.5 L1715.5 684.7 L1717.0 684.9 L1718.5 685.1 L1720.0 685.3 L1721.5 685.5 L1723.0 685.7 L1724.5 686.0 L1726.0 686.2 L1727.5 686.5 L1729.0 686.7 L1730.5 686.8 L1732.0 687.0 L1733.5 687.1" stroke="#96e070" stroke-width="1" fill="none" stroke-linejoin="round"/>
<path d="M149.1 482.3V489.8 M158.7 467.4V497.2 M163.4 499.7V548.4 M173.0 482.0V491.3 M182.6 477.4V528.1 M187.4 527.6V553.1 M196.9 531.9V556.7 M201.7 554.6V598.8 M206.5 584.8V613.6 M211.3 608.5V622.7 M216.1 605.3V643.1 M225.6 632.0V645.7 M230.4 647.8V663.7 M235.2 663.1V706.8 M240.0 699.8V717.5 M244.8 697.1V704.3 M249.5 704.6V738.1 M254.3 733.2V745.6 M259.1 745.0V776.2 M263.9 769.9V782.3 M273.4 748.1V768.7 M297.4 662.8V675.7 M321.3 593.3V608.6 M330.8 615.8V628.9 M335.6 635.1V650.5 M364.3 568.8V583.4 M378.7 560.4V582.6 M383.4 587.2V605.6 M393.0 593.1V608.1 M402.6 576.0V582.6 M407.4 575.3V586.1 M412.1 573.4V589.8 M416.9 580.6V593.5 M421.7 594.4V603.8 M426.5 601.9V612.0 M436.0 612.3V649.1 M450.4 617.0V632.3 M469.5 573.5V621.8 M479.1 620.2V639.1 M483.9 628.3V653.5 M493.4 624.5V668.5 M503.0 648.2V653.5 M512.6 638.9V654.7 M522.1 645.9V662.1 M526.9 655.5V662.2 M531.7 660.7V684.9 M536.5 681.7V696.6 M541.3 698.0V707.5 M546.0 701.4V711.9 M550.8 707.5V718.8 M555.6 731.4V749.5 M560.4 746.5V750.7 M565.2 745.8V751.0 M584.3 677.8V713.8 M589.1 710.8V725.1 M593.9 715.7V743.7 M598.7 736.8V767.8 M613.0 756.9V791.8 M636.9 712.6V750.3 M646.5 728.4V751.8 M651.3 747.8V760.3 M660.8 740.1V769.4 M665.6 757.7V774.4 M689.5 730.7V752.8 M699.1 741.5V757.3 M703.9 754.3V775.4 M708.7 772.4V794.5 M713.4 784.9V797.5 M718.2 797.5V834.1 M727.8 820.5V830.6 M746.9 784.4V804.9 M756.5 780.6V798.8 M770.8 787.5V800.8 M775.6 801.8V806.1 M785.2 791.0V818.2 M794.7 802.0V825.4 M804.3 816.6V860.9 M813.9 833.2V844.1 M828.2 828.7V841.5 M837.8 824.2V835.4 M856.9 816.6V833.2 M866.5 826.7V837.5 M871.3 830.2V851.3 M876.0 840.0V857.3 M890.4 804.1V812.9 M900.0 783.4V799.3 M914.3 765.4V770.4 M919.1 759.0V772.1 M923.9 762.6V785.5 M933.4 774.9V785.8 M938.2 783.0V800.6 M943.0 807.6V841.3 M947.8 837.8V865.2 M962.1 789.5V799.3 M986.0 758.3V768.9 M995.6 761.3V767.9 M1000.4 768.9V781.5 M1005.2 774.7V785.3 M1033.9 736.9V756.4 M1038.6 749.8V766.4 M1057.8 749.5V754.0 M1072.1 739.9V745.0 M1091.3 725.6V735.7 M1105.6 717.0V726.8 M1110.4 724.5V730.2 M1129.5 699.2V707.1 M1139.1 693.4V698.5 M1148.6 690.0V697.1 M1158.2 690.9V696.7 M1167.8 687.4V709.3 M1196.5 698.6V705.0 M1201.2 703.5V724.2 M1206.0 718.6V755.1 M1225.2 720.0V733.7 M1229.9 729.1V745.8 M1253.9 695.1V714.3 M1258.6 714.3V737.8 M1268.2 736.4V748.0 M1277.8 739.2V749.7 M1282.6 744.5V753.3 M1287.3 757.1V761.3 M1296.9 737.4V745.7 M1301.7 744.5V782.2 M1311.2 757.5V771.2 M1320.8 751.4V762.6 M1325.6 749.0V758.3 M1344.7 730.2V741.4 M1359.1 713.0V719.5 M1363.9 712.2V720.9 M1368.6 717.8V732.2 M1373.4 729.1V754.6 M1378.2 742.0V758.8 M1383.0 745.7V761.1 M1387.8 758.6V762.6 M1397.3 741.3V759.8 M1411.7 753.1V759.1 M1421.2 746.0V752.6 M1430.8 737.1V744.0 M1445.2 740.3V774.4 M1469.1 725.9V740.5 M1502.5 698.8V720.6 M1512.1 701.5V713.3 M1540.8 676.9V691.2 M1564.7 658.5V677.8 M1569.5 674.9V695.8 M1574.3 682.1V698.8 M1579.1 679.3V692.9 M1588.6 688.7V703.8 M1612.5 676.1V695.9 M1622.1 673.9V692.9 M1636.5 647.7V691.6 M1655.6 668.6V694.1 M1665.2 684.3V693.0 M1684.3 673.2V683.2 M1689.1 681.7V689.7 M1693.8 680.1V692.0 M1698.6 687.8V695.9 M1703.4 686.4V701.9 M81.0 376.0V384.0 M86.0 379.0V389.0 M91.0 384.0V391.0 M96.0 386.0V393.0 M115.0 373.0V381.0 M115 366V375" stroke="#6fb4d6" stroke-width="1" fill="none"/>
<path d="M147.1 482.3h4v7.4h-4z M156.7 468.7h4v28.6h-4z M161.4 499.7h4v44.7h-4z M171.0 487.8h4v2.5h-4z M180.6 477.4h4v46.7h-4z M185.4 532.5h4v20.6h-4z M194.9 534.5h4v18.6h-4z M199.7 555.6h4v42.2h-4z M204.5 587.9h4v22.3h-4z M209.3 610.2h4v12.4h-4z M214.1 605.3h4v37.2h-4z M223.6 637.6h4v8.2h-4z M228.4 648.7h4v14.4h-4z M233.2 664.1h4v41.7h-4z M238.0 705.8h4v2.5h-4z M242.8 697.1h4v5.0h-4z M247.5 704.6h4v33.5h-4z M252.3 733.2h4v12.4h-4z M257.1 745.6h4v29.8h-4z M261.9 769.9h4v7.9h-4z M271.4 748.1h4v18.6h-4z M295.4 663.6h4v11.2h-4z M319.3 593.3h4v14.4h-4z M328.8 617.7h4v11.2h-4z M333.6 635.1h4v13.2h-4z M362.3 570.5h4v11.3h-4z M376.7 560.4h4v22.1h-4z M381.4 589.4h4v15.1h-4z M391.0 596.1h4v10.8h-4z M400.6 576.8h4v5.8h-4z M405.4 581.3h4v1.5h-4z M410.1 576.8h4v2.5h-4z M414.9 580.6h4v10.1h-4z M419.7 594.4h4v6.3h-4z M424.5 601.9h4v10.1h-4z M434.0 613.2h4v30.2h-4z M448.4 617.0h4v13.3h-4z M467.5 573.5h4v47.3h-4z M477.1 628.3h4v1.5h-4z M481.9 628.3h4v25.1h-4z M491.4 624.5h4v44.0h-4z M501.0 650.4h4v3.0h-4z M510.6 642.1h4v12.6h-4z M520.1 645.9h4v14.6h-4z M524.9 657.2h4v2.5h-4z M529.7 664.0h4v20.9h-4z M534.5 684.9h4v8.8h-4z M539.3 701.2h4v6.3h-4z M544.0 706.2h4v2.5h-4z M548.8 707.5h4v11.3h-4z M553.6 731.4h4v18.1h-4z M558.4 746.5h4v3.8h-4z M563.2 747.0h4v4.0h-4z M582.3 680.4h4v33.4h-4z M587.1 712.5h4v12.6h-4z M591.9 716.3h4v22.6h-4z M596.7 739.0h4v27.7h-4z M611.0 759.8h4v31.9h-4z M634.9 712.6h4v37.7h-4z M644.5 728.4h4v20.6h-4z M649.3 747.8h4v12.6h-4z M658.8 743.2h4v24.6h-4z M663.6 758.3h4v13.3h-4z M687.5 730.7h4v22.1h-4z M697.1 741.5h4v15.8h-4z M701.9 756.6h4v18.9h-4z M706.7 774.9h4v16.8h-4z M711.4 791.0h4v2.5h-4z M716.2 797.5h4v34.4h-4z M725.8 822.7h4v6.8h-4z M744.9 785.0h4v17.6h-4z M754.5 789.2h4v2.5h-4z M768.8 787.5h4v12.6h-4z M773.6 801.8h4v4.3h-4z M783.2 791.8h4v21.9h-4z M792.7 806.8h4v15.1h-4z M802.3 817.6h4v43.2h-4z M811.9 833.2h4v10.1h-4z M826.2 830.7h4v8.8h-4z M835.8 826.4h4v8.0h-4z M854.9 817.6h4v15.6h-4z M864.5 829.5h4v1.5h-4z M869.3 830.2h4v18.6h-4z M874.0 848.3h4v2.0h-4z M888.4 810.1h4v1.8h-4z M898.0 785.5h4v13.8h-4z M912.3 765.4h4v3.8h-4z M917.1 766.6h4v1.5h-4z M921.9 765.9h4v19.6h-4z M931.4 774.9h4v8.0h-4z M936.2 783.0h4v17.6h-4z M941.0 807.6h4v33.7h-4z M945.8 841.3h4v19.6h-4z M960.1 796.8h4v1.5h-4z M984.0 758.8h4v7.0h-4z M993.6 761.3h4v6.5h-4z M998.4 769.6h4v8.3h-4z M1003.2 774.7h4v10.1h-4z M1031.9 736.9h4v16.3h-4z M1036.6 753.3h4v13.1h-4z M1055.8 749.5h4v3.8h-4z M1070.1 742.0h4v2.0h-4z M1089.3 725.6h4v10.1h-4z M1103.6 719.9h4v5.8h-4z M1108.4 725.6h4v4.5h-4z M1127.5 699.2h4v5.0h-4z M1137.1 695.5h4v3.0h-4z M1146.6 693.0h4v1.5h-4z M1156.2 690.9h4v5.8h-4z M1165.8 687.4h4v18.1h-4z M1194.5 701.8h4v3.3h-4z M1199.2 704.3h4v17.6h-4z M1204.0 721.4h4v28.2h-4z M1223.2 725.6h4v8.0h-4z M1227.9 733.7h4v1.5h-4z M1251.9 699.2h4v15.1h-4z M1256.6 714.3h4v22.6h-4z M1266.2 736.4h4v10.6h-4z M1275.8 740.2h4v1.8h-4z M1280.6 744.5h4v8.8h-4z M1285.3 757.1h4v4.3h-4z M1294.9 738.7h4v7.0h-4z M1299.7 744.5h4v37.7h-4z M1309.2 760.8h4v6.3h-4z M1318.8 755.3h4v3.5h-4z M1323.6 749.0h4v9.3h-4z M1342.7 730.2h4v8.8h-4z M1357.1 715.4h4v1.8h-4z M1361.9 716.4h4v4.5h-4z M1366.6 719.6h4v12.6h-4z M1371.4 732.2h4v21.4h-4z M1376.2 748.0h4v1.5h-4z M1381.0 748.0h4v10.6h-4z M1385.8 758.6h4v3.0h-4z M1395.3 744.8h4v15.1h-4z M1409.7 754.1h4v5.0h-4z M1419.2 746.0h4v5.0h-4z M1428.8 739.7h4v3.3h-4z M1443.2 741.0h4v33.4h-4z M1467.1 725.9h4v14.6h-4z M1500.5 698.8h4v17.1h-4z M1510.1 701.5h4v11.8h-4z M1538.8 684.4h4v1.5h-4z M1562.7 658.5h4v17.6h-4z M1567.5 676.9h4v18.4h-4z M1572.3 691.2h4v2.0h-4z M1577.1 687.7h4v1.5h-4z M1586.6 690.7h4v13.1h-4z M1610.5 676.1h4v19.1h-4z M1620.1 685.2h4v1.8h-4z M1634.5 651.0h4v37.7h-4z M1653.6 668.6h4v24.6h-4z M1663.2 689.5h4v2.5h-4z M1682.3 677.6h4v1.5h-4z M1687.1 682.7h4v1.5h-4z M1691.8 680.7h4v11.3h-4z M1696.6 690.7h4v3.8h-4z M1701.4 688.7h4v10.8h-4z M79.0 378.0h4v4.0h-4z M84.0 381.0h4v6.0h-4z M89.0 386.0h4v3.0h-4z M94.0 388.0h4v3.0h-4z M113.0 375.0h4v4.0h-4z M142 375h5v27h-5z" fill="#87cdf0"/>
<path d="M153.9 448.1V449.1 M153.9 502.2V506.2 M168.2 489.3V492.3 M192.1 552.9V553.9 M192.1 556.3V565.0 M220.8 631.8V632.6 M220.8 650.7V652.4 M268.7 778.4V779.5 M278.2 726.9V728.2 M283.0 718.5V724.5 M283.0 726.2V733.2 M287.8 702.9V705.8 M292.6 659.4V662.4 M292.6 704.6V708.6 M302.1 674.1V674.7 M306.9 664.9V666.1 M340.4 608.7V609.7 M340.4 653.2V657.2 M345.2 597.8V601.0 M345.2 610.7V612.2 M350.0 587.3V590.6 M350.0 598.1V600.2 M354.7 591.1V597.1 M359.5 563.4V566.7 M359.5 580.6V581.6 M373.9 555.9V559.9 M373.9 561.4V566.0 M388.2 588.4V590.1 M388.2 604.9V606.7 M397.8 574.6V576.8 M397.8 600.7V606.5 M431.3 616.8V617.8 M431.3 619.8V627.9 M440.8 637.7V638.9 M445.6 619.7V620.8 M445.6 638.9V639.9 M455.2 630.8V632.6 M464.7 571.4V574.3 M464.7 581.1V581.9 M474.3 623.5V625.3 M498.2 648.0V650.9 M498.2 663.5V666.5 M517.4 645.2V645.9 M570.0 738.9V740.9 M579.5 713.8V715.7 M608.2 755.0V757.8 M608.2 764.1V765.3 M617.8 780.3V780.9 M622.6 759.6V761.6 M632.1 725.1V726.6 M641.7 734.5V735.2 M641.7 750.3V752.2 M656.0 742.9V745.2 M656.0 761.6V766.7 M670.4 756.9V762.3 M670.4 766.6V768.5 M675.2 745.5V749.8 M675.2 761.6V763.6 M680.0 729.9V735.2 M680.0 747.3V752.2 M684.7 726.7V729.7 M684.7 735.2V738.0 M694.3 741.8V742.7 M694.3 754.0V755.6 M723.0 826.1V832.0 M723.0 834.5V838.5 M732.6 815.5V816.1 M732.6 830.2V831.9 M737.3 809.9V813.6 M737.3 816.1V821.5 M742.1 781.7V783.0 M761.3 781.2V784.2 M761.3 786.7V790.7 M766.0 784.2V786.7 M780.4 801.8V803.9 M790.0 811.6V812.6 M790.0 816.1V818.8 M809.1 830.9V833.2 M809.1 860.9V862.7 M818.6 835.2V844.5 M818.6 846.1V847.6 M823.4 828.7V829.5 M833.0 824.1V826.4 M842.6 824.7V830.7 M842.6 832.7V834.5 M852.1 812.4V816.9 M861.7 830.7V833.1 M880.8 811.5V815.6 M880.8 852.1V853.8 M885.6 802.5V806.8 M885.6 814.4V815.6 M895.2 783.8V786.7 M895.2 811.9V817.0 M909.5 766.0V767.9 M909.5 771.6V774.7 M928.6 786.7V787.7 M952.6 854.6V857.8 M971.7 786.7V788.4 M976.5 764.0V767.4 M976.5 774.9V776.6 M1009.9 776.5V777.2 M1014.7 766.0V768.4 M1014.7 776.4V781.1 M1019.5 752.3V752.8 M1024.3 752.0V753.5 M1029.1 737.6V738.7 M1029.1 745.7V748.8 M1043.4 765.6V769.6 M1043.4 771.1V776.3 M1048.2 753.6V757.8 M1048.2 768.9V769.5 M1053.0 748.1V750.3 M1053.0 757.8V760.9 M1062.6 749.5V750.5 M1067.3 745.7V746.6 M1076.9 738.5V740.7 M1076.9 743.2V747.9 M1081.7 735.5V737.5 M1081.7 740.7V742.9 M1096.0 725.9V731.9 M1096.0 734.4V735.4 M1100.8 721.9V722.6 M1119.9 703.0V707.5 M1124.7 699.6V700.5 M1124.7 706.8V712.0 M1143.9 691.5V692.5 M1153.4 681.8V690.4 M1153.4 693.0V696.6 M1163.0 695.5V697.7 M1172.6 704.7V708.0 M1172.6 710.6V714.6 M1182.1 703.0V706.0 M1182.1 707.5V708.5 M1186.9 702.5V705.5 M1186.9 707.5V708.5 M1191.7 706.0V707.1 M1210.8 742.0V745.2 M1210.8 751.3V752.2 M1215.6 730.5V731.2 M1234.7 715.4V720.1 M1239.5 720.6V722.9 M1244.3 705.0V707.4 M1249.1 697.5V698.5 M1249.1 706.8V712.1 M1263.4 734.7V737.7 M1263.4 740.2V747.2 M1273.0 747.8V749.8 M1292.1 757.1V757.7 M1316.0 752.4V755.8 M1330.4 757.1V760.6 M1335.2 728.8V730.2 M1335.2 733.2V736.7 M1339.9 723.5V726.9 M1339.9 732.7V734.2 M1392.5 761.1V764.0 M1402.1 747.5V756.1 M1402.1 758.6V762.0 M1416.5 743.0V743.5 M1416.5 757.3V759.8 M1426.0 742.1V745.5 M1426.0 748.5V752.0 M1435.6 733.7V739.7 M1435.6 741.5V742.5 M1440.4 732.5V738.5 M1440.4 740.5V744.5 M1449.9 755.8V759.3 M1449.9 768.1V774.1 M1454.7 724.6V728.9 M1459.5 723.2V725.2 M1464.3 716.0V717.1 M1478.6 721.8V723.4 M1483.4 727.2V731.5 M1488.2 706.7V712.8 M1488.2 714.6V719.1 M1493.0 713.8V719.5 M1497.8 705.3V708.1 M1516.9 709.1V710.8 M1516.9 713.8V717.4 M1521.7 704.6V709.6 M1521.7 712.1V716.9 M1526.5 696.0V697.0 M1526.5 698.5V705.5 M1531.2 696.0V697.0 M1531.2 699.5V701.8 M1536.0 697.8V703.1 M1550.4 661.2V664.3 M1550.4 669.4V670.4 M1555.2 655.7V658.5 M1559.9 651.7V658.8 M1559.9 660.6V663.2 M1583.8 684.1V690.2 M1583.8 692.0V697.3 M1593.4 690.3V695.7 M1598.2 687.3V689.5 M1598.2 697.0V698.5 M1603.0 690.7V694.3 M1607.8 675.2V676.9 M1607.8 682.7V683.3 M1617.3 697.0V697.8 M1626.9 685.7V688.0 M1631.7 640.2V644.2 M1631.7 670.6V672.4 M1641.2 682.7V685.7 M1641.2 688.7V692.0 M1650.8 669.4V670.1 M1650.8 673.6V674.6 M1660.4 667.2V668.1 M1660.4 697.0V700.5 M1669.9 689.7V692.0 M1669.9 694.5V704.6 M1674.7 681.2V685.7 M1674.7 692.0V693.3 M1679.5 690.7V694.5 M71.0 375.0V378.0M71.0 384.0V387.0 M76.0 374.0V377.0M76.0 385.0V388.0 M100.5 385.0V388.0M100.5 394.0V397.0 M105.0 380.0V383.0M105.0 391.0V394.0 M110.0 377.0V380.0M110.0 383.0V386.0" stroke="#e07868" stroke-width="1" fill="none"/>
<path d="M152.3 449.6h3.2v52.1h-3.2z M166.6 492.8h3.2v46.7h-3.2z M176.2 481.6h3.2v25.8h-3.2z M190.5 554.4h3.2v1.5h-3.2z M219.2 633.1h3.2v17.1h-3.2z M267.1 749.8h3.2v28.1h-3.2z M276.6 728.7h3.2v36.2h-3.2z M281.4 725.0h3.2v0.7h-3.2z M286.2 706.3h3.2v16.4h-3.2z M291.0 662.9h3.2v41.2h-3.2z M300.5 662.9h3.2v10.7h-3.2z M305.3 638.1h3.2v26.3h-3.2z M310.1 633.1h3.2v8.9h-3.2z M314.9 594.6h3.2v30.0h-3.2z M324.5 612.5h3.2v12.9h-3.2z M338.8 610.2h3.2v42.5h-3.2z M343.6 601.5h3.2v8.7h-3.2z M348.4 591.1h3.2v6.5h-3.2z M353.1 570.5h3.2v20.1h-3.2z M357.9 567.2h3.2v12.8h-3.2z M367.5 569.7h3.2v17.9h-3.2z M372.3 560.4h3.2v0.6h-3.2z M386.6 590.6h3.2v13.8h-3.2z M396.2 577.3h3.2v22.9h-3.2z M429.7 618.3h3.2v1.0h-3.2z M439.2 639.4h3.2v8.0h-3.2z M444.0 621.3h3.2v17.1h-3.2z M453.6 596.6h3.2v33.7h-3.2z M458.4 581.6h3.2v14.8h-3.2z M463.1 574.8h3.2v5.8h-3.2z M472.7 625.8h3.2v2.0h-3.2z M487.1 623.3h3.2v34.7h-3.2z M496.6 651.4h3.2v11.6h-3.2z M506.2 640.9h3.2v12.1h-3.2z M515.8 646.4h3.2v6.5h-3.2z M568.4 741.4h3.2v14.6h-3.2z M573.1 714.3h3.2v26.7h-3.2z M577.9 684.6h3.2v28.7h-3.2z M601.8 760.8h3.2v4.5h-3.2z M606.6 758.3h3.2v5.3h-3.2z M616.2 781.4h3.2v9.1h-3.2z M621.0 762.1h3.2v25.4h-3.2z M625.8 731.2h3.2v21.1h-3.2z M630.5 709.3h3.2v15.3h-3.2z M640.1 735.7h3.2v14.1h-3.2z M654.4 745.7h3.2v15.3h-3.2z M668.8 762.8h3.2v3.3h-3.2z M673.6 750.3h3.2v10.8h-3.2z M678.4 735.7h3.2v11.1h-3.2z M683.1 730.2h3.2v4.5h-3.2z M692.7 743.2h3.2v10.3h-3.2z M721.4 832.5h3.2v1.5h-3.2z M731.0 816.6h3.2v13.1h-3.2z M735.7 814.1h3.2v1.5h-3.2z M740.5 783.5h3.2v28.7h-3.2z M750.1 793.5h3.2v11.1h-3.2z M759.7 784.7h3.2v1.5h-3.2z M764.4 780.4h3.2v3.3h-3.2z M778.8 791.5h3.2v9.8h-3.2z M788.4 813.1h3.2v2.5h-3.2z M797.9 815.6h3.2v6.5h-3.2z M807.5 833.7h3.2v26.7h-3.2z M817.0 845.0h3.2v0.6h-3.2z M821.8 830.0h3.2v12.8h-3.2z M831.4 826.9h3.2v13.3h-3.2z M841.0 831.2h3.2v1.0h-3.2z M845.7 822.9h3.2v5.3h-3.2z M850.5 817.4h3.2v2.8h-3.2z M860.1 821.9h3.2v8.3h-3.2z M879.2 816.1h3.2v35.5h-3.2z M884.0 807.3h3.2v6.5h-3.2z M893.6 787.2h3.2v24.1h-3.2z M903.1 772.1h3.2v27.9h-3.2z M907.9 768.4h3.2v2.8h-3.2z M927.0 769.6h3.2v16.6h-3.2z M951.0 828.7h3.2v25.4h-3.2z M955.7 804.1h3.2v26.1h-3.2z M965.3 787.2h3.2v9.8h-3.2z M970.1 775.9h3.2v10.3h-3.2z M974.9 767.9h3.2v6.5h-3.2z M979.7 761.3h3.2v7.8h-3.2z M989.2 758.3h3.2v7.0h-3.2z M1008.3 777.7h3.2v5.3h-3.2z M1013.1 768.9h3.2v7.0h-3.2z M1017.9 753.3h3.2v14.6h-3.2z M1022.7 746.7h3.2v4.8h-3.2z M1027.5 739.2h3.2v6.0h-3.2z M1041.8 770.1h3.2v0.6h-3.2z M1046.6 758.3h3.2v10.1h-3.2z M1051.4 750.8h3.2v6.5h-3.2z M1061.0 747.0h3.2v2.0h-3.2z M1065.7 742.5h3.2v2.8h-3.2z M1075.3 741.2h3.2v1.5h-3.2z M1080.1 738.0h3.2v2.3h-3.2z M1084.9 729.9h3.2v9.8h-3.2z M1094.4 732.4h3.2v1.5h-3.2z M1099.2 723.1h3.2v9.6h-3.2z M1113.6 723.6h3.2v6.0h-3.2z M1118.3 708.0h3.2v14.6h-3.2z M1123.1 701.0h3.2v5.3h-3.2z M1132.7 697.2h3.2v4.0h-3.2z M1142.3 693.0h3.2v3.3h-3.2z M1151.8 690.9h3.2v1.5h-3.2z M1161.4 687.2h3.2v7.8h-3.2z M1171.0 708.5h3.2v1.5h-3.2z M1175.7 706.0h3.2v2.0h-3.2z M1180.5 706.5h3.2v0.6h-3.2z M1185.3 706.0h3.2v1.0h-3.2z M1190.1 703.0h3.2v2.5h-3.2z M1209.2 745.7h3.2v5.0h-3.2z M1214.0 731.7h3.2v12.3h-3.2z M1218.8 724.9h3.2v6.5h-3.2z M1233.1 720.6h3.2v13.3h-3.2z M1237.9 703.5h3.2v16.6h-3.2z M1242.7 701.0h3.2v3.5h-3.2z M1247.5 699.0h3.2v7.3h-3.2z M1261.8 738.2h3.2v1.5h-3.2z M1271.4 731.7h3.2v15.6h-3.2z M1290.5 738.2h3.2v18.4h-3.2z M1304.9 760.1h3.2v22.4h-3.2z M1314.4 756.3h3.2v9.1h-3.2z M1328.8 733.7h3.2v22.9h-3.2z M1333.6 730.7h3.2v2.0h-3.2z M1338.3 727.4h3.2v4.8h-3.2z M1347.9 725.9h3.2v12.1h-3.2z M1352.7 716.9h3.2v8.0h-3.2z M1391.0 745.3h3.2v15.3h-3.2z M1400.5 756.6h3.2v1.5h-3.2z M1405.3 756.1h3.2v2.0h-3.2z M1414.9 744.0h3.2v12.8h-3.2z M1424.4 746.0h3.2v2.0h-3.2z M1434.0 740.2h3.2v0.8h-3.2z M1438.8 739.0h3.2v1.0h-3.2z M1448.3 759.8h3.2v7.8h-3.2z M1453.1 729.4h3.2v22.4h-3.2z M1457.9 725.7h3.2v2.8h-3.2z M1462.7 717.6h3.2v7.8h-3.2z M1472.3 729.4h3.2v11.6h-3.2z M1477.0 723.9h3.2v3.5h-3.2z M1481.8 715.9h3.2v10.8h-3.2z M1486.6 713.3h3.2v0.8h-3.2z M1491.4 707.6h3.2v5.8h-3.2z M1496.2 700.0h3.2v4.8h-3.2z M1505.7 702.0h3.2v11.3h-3.2z M1515.3 711.3h3.2v2.0h-3.2z M1520.1 710.1h3.2v1.5h-3.2z M1524.9 697.5h3.2v0.6h-3.2z M1529.6 697.5h3.2v1.5h-3.2z M1534.4 685.7h3.2v11.6h-3.2z M1544.0 668.6h3.2v14.6h-3.2z M1548.8 664.8h3.2v4.0h-3.2z M1553.6 659.0h3.2v8.0h-3.2z M1558.3 659.3h3.2v0.8h-3.2z M1582.2 690.7h3.2v0.8h-3.2z M1591.8 696.2h3.2v7.0h-3.2z M1596.6 690.0h3.2v6.5h-3.2z M1601.4 683.7h3.2v6.5h-3.2z M1606.2 677.4h3.2v4.8h-3.2z M1615.7 686.2h3.2v10.3h-3.2z M1625.3 666.1h3.2v19.1h-3.2z M1630.1 644.7h3.2v25.4h-3.2z M1639.6 686.2h3.2v2.0h-3.2z M1644.4 674.1h3.2v23.1h-3.2z M1649.2 670.6h3.2v2.5h-3.2z M1658.8 668.6h3.2v27.9h-3.2z M1668.3 692.5h3.2v1.5h-3.2z M1673.1 686.2h3.2v5.3h-3.2z M1677.9 682.4h3.2v7.8h-3.2z M69.4 378.5h3.2v5.0h-3.2z M74.4 377.5h3.2v7.0h-3.2z M98.9 388.5h3.2v5.0h-3.2z M103.4 383.5h3.2v7.0h-3.2z M108.4 380.5h3.2v2.0h-3.2z" stroke="#e88878" stroke-width="1" fill="none"/>
<path d="M117 375.5H142" stroke="#b888c8" stroke-width="2" stroke-dasharray="3.6 1.2" fill="none"/>
<path d="M1708 697.8H1731" stroke="#b060c8" stroke-width="1.6" stroke-dasharray="3.6 1.2" fill="none"/>
<path d="M277.3 781.4h1.8v1.8h-1.8z M282.1 780.3h1.8v1.8h-1.8z M286.9 777.8h1.8v1.8h-1.8z M291.7 773.2h1.8v1.8h-1.8z M296.5 764.0h1.8v1.8h-1.8z M301.2 755.6h1.8v1.8h-1.8z M306.0 747.8h1.8v1.8h-1.8z M310.8 736.7h1.8v1.8h-1.8z M315.6 724.1h1.8v1.8h-1.8z M320.4 705.8h1.8v1.8h-1.8z M325.2 687.6h1.8v1.8h-1.8z M329.9 672.4h1.8v1.8h-1.8z M334.7 659.6h1.8v1.8h-1.8z M349.1 656.3h1.8v1.8h-1.8z M353.8 654.9h1.8v1.8h-1.8z M358.6 651.5h1.8v1.8h-1.8z M363.4 646.1h1.8v1.8h-1.8z M368.2 641.1h1.8v1.8h-1.8z M373.0 636.4h1.8v1.8h-1.8z M377.8 629.9h1.8v1.8h-1.8z M382.5 623.9h1.8v1.8h-1.8z M387.3 618.4h1.8v1.8h-1.8z M392.1 613.3h1.8v1.8h-1.8z M396.9 608.6h1.8v1.8h-1.8z M401.7 607.2h1.8v1.8h-1.8z M406.5 605.6h1.8v1.8h-1.8z M411.2 601.5h1.8v1.8h-1.8z M416.0 597.8h1.8v1.8h-1.8z M459.1 648.2h1.8v1.8h-1.8z M463.8 646.8h1.8v1.8h-1.8z M468.6 643.8h1.8v1.8h-1.8z M473.4 640.8h1.8v1.8h-1.8z M573.8 755.6h1.8v1.8h-1.8z M578.6 755.6h1.8v1.8h-1.8z M583.4 752.7h1.8v1.8h-1.8z M588.2 748.2h1.8v1.8h-1.8z M593.0 743.9h1.8v1.8h-1.8z M679.1 790.9h1.8v1.8h-1.8z M683.8 789.6h1.8v1.8h-1.8z M688.6 787.1h1.8v1.8h-1.8z M693.4 784.6h1.8v1.8h-1.8z M698.2 782.3h1.8v1.8h-1.8z M703.0 780.0h1.8v1.8h-1.8z M755.6 837.6h1.8v1.8h-1.8z M760.4 836.4h1.8v1.8h-1.8z M765.1 835.3h1.8v1.8h-1.8z M769.9 833.0h1.8v1.8h-1.8z M774.7 830.9h1.8v1.8h-1.8z M779.5 828.8h1.8v1.8h-1.8z M784.3 826.8h1.8v1.8h-1.8z M789.1 824.9h1.8v1.8h-1.8z M851.2 861.8h1.8v1.8h-1.8z M856.0 860.7h1.8v1.8h-1.8z M860.8 859.8h1.8v1.8h-1.8z M865.6 858.8h1.8v1.8h-1.8z M870.4 857.9h1.8v1.8h-1.8z M875.1 856.9h1.8v1.8h-1.8z M879.9 856.4h1.8v1.8h-1.8z M884.7 856.4h1.8v1.8h-1.8z M889.5 853.1h1.8v1.8h-1.8z M894.3 850.0h1.8v1.8h-1.8z M899.1 844.7h1.8v1.8h-1.8z M903.8 838.5h1.8v1.8h-1.8z M908.6 830.3h1.8v1.8h-1.8z M913.4 821.2h1.8v1.8h-1.8z M918.2 812.1h1.8v1.8h-1.8z M923.0 802.4h1.8v1.8h-1.8z M927.7 794.4h1.8v1.8h-1.8z M932.5 787.9h1.8v1.8h-1.8z M970.8 864.3h1.8v1.8h-1.8z M975.6 862.5h1.8v1.8h-1.8z M980.4 858.5h1.8v1.8h-1.8z M985.1 852.6h1.8v1.8h-1.8z M989.9 845.0h1.8v1.8h-1.8z M994.7 836.2h1.8v1.8h-1.8z M999.5 828.2h1.8v1.8h-1.8z M1004.3 821.1h1.8v1.8h-1.8z M1009.0 814.7h1.8v1.8h-1.8z M1013.8 808.9h1.8v1.8h-1.8z M1018.6 803.7h1.8v1.8h-1.8z M1023.4 797.4h1.8v1.8h-1.8z M1028.2 790.1h1.8v1.8h-1.8z M1033.0 781.6h1.8v1.8h-1.8z M1037.7 773.4h1.8v1.8h-1.8z M1071.2 775.4h1.8v1.8h-1.8z M1076.0 774.7h1.8v1.8h-1.8z M1080.8 773.2h1.8v1.8h-1.8z M1085.6 770.9h1.8v1.8h-1.8z M1090.4 767.5h1.8v1.8h-1.8z M1095.1 763.2h1.8v1.8h-1.8z M1099.9 759.4h1.8v1.8h-1.8z M1104.7 754.8h1.8v1.8h-1.8z M1109.5 749.4h1.8v1.8h-1.8z M1114.3 744.7h1.8v1.8h-1.8z M1119.0 740.7h1.8v1.8h-1.8z M1123.8 734.5h1.8v1.8h-1.8z M1128.6 728.1h1.8v1.8h-1.8z M1133.4 722.1h1.8v1.8h-1.8z M1138.2 716.9h1.8v1.8h-1.8z M1143.0 712.0h1.8v1.8h-1.8z M1147.7 707.7h1.8v1.8h-1.8z M1152.5 704.0h1.8v1.8h-1.8z M1157.3 699.4h1.8v1.8h-1.8z M1233.8 754.2h1.8v1.8h-1.8z M1238.6 753.4h1.8v1.8h-1.8z M1243.4 751.4h1.8v1.8h-1.8z M1248.2 748.3h1.8v1.8h-1.8z M1253.0 744.1h1.8v1.8h-1.8z M1257.7 739.1h1.8v1.8h-1.8z M1324.7 782.1h1.8v1.8h-1.8z M1329.5 781.4h1.8v1.8h-1.8z M1334.3 779.4h1.8v1.8h-1.8z M1339.0 776.3h1.8v1.8h-1.8z M1343.8 772.0h1.8v1.8h-1.8z M1348.6 768.1h1.8v1.8h-1.8z M1353.4 764.4h1.8v1.8h-1.8z M1358.2 759.5h1.8v1.8h-1.8z M1363.0 753.8h1.8v1.8h-1.8z M1367.7 747.9h1.8v1.8h-1.8z M1425.1 763.1h1.8v1.8h-1.8z M1429.9 762.6h1.8v1.8h-1.8z M1434.7 761.6h1.8v1.8h-1.8z M1439.5 759.9h1.8v1.8h-1.8z M1453.8 773.5h1.8v1.8h-1.8z M1458.6 773.2h1.8v1.8h-1.8z M1463.4 771.1h1.8v1.8h-1.8z M1468.2 767.8h1.8v1.8h-1.8z M1473.0 764.6h1.8v1.8h-1.8z M1477.7 761.6h1.8v1.8h-1.8z M1482.5 758.9h1.8v1.8h-1.8z M1487.3 755.3h1.8v1.8h-1.8z M1492.1 750.3h1.8v1.8h-1.8z M1496.9 745.9h1.8v1.8h-1.8z M1501.6 740.2h1.8v1.8h-1.8z M1506.4 734.3h1.8v1.8h-1.8z M1511.2 729.2h1.8v1.8h-1.8z M1516.0 724.8h1.8v1.8h-1.8z M1520.8 721.0h1.8v1.8h-1.8z M1525.6 717.8h1.8v1.8h-1.8z M1530.3 716.0h1.8v1.8h-1.8z M1535.1 712.7h1.8v1.8h-1.8z M1539.9 707.6h1.8v1.8h-1.8z M1544.7 702.2h1.8v1.8h-1.8z M1549.5 695.2h1.8v1.8h-1.8z M1554.3 688.3h1.8v1.8h-1.8z M1559.0 681.6h1.8v1.8h-1.8z M1621.2 702.9h1.8v1.8h-1.8z M1626.0 702.3h1.8v1.8h-1.8z M1630.8 700.8h1.8v1.8h-1.8z M1635.6 697.1h1.8v1.8h-1.8z M1640.3 693.6h1.8v1.8h-1.8z" fill="#d8d8d0"/>
<path d="M153.0 373.5h1.8v1.8h-1.8z M157.8 378.7h1.8v1.8h-1.8z M162.5 383.8h1.8v1.8h-1.8z M167.3 393.6h1.8v1.8h-1.8z M172.1 402.9h1.8v1.8h-1.8z M176.9 411.5h1.8v1.8h-1.8z M181.7 419.7h1.8v1.8h-1.8z M186.5 427.4h1.8v1.8h-1.8z M191.2 437.4h1.8v1.8h-1.8z M196.0 450.0h1.8v1.8h-1.8z M200.8 461.4h1.8v1.8h-1.8z M205.6 477.8h1.8v1.8h-1.8z M210.4 496.7h1.8v1.8h-1.8z M215.2 516.7h1.8v1.8h-1.8z M219.9 539.3h1.8v1.8h-1.8z M224.7 561.7h1.8v1.8h-1.8z M229.5 579.7h1.8v1.8h-1.8z M234.3 596.3h1.8v1.8h-1.8z M239.1 618.2h1.8v1.8h-1.8z M243.8 637.9h1.8v1.8h-1.8z M248.6 653.6h1.8v1.8h-1.8z M253.4 670.4h1.8v1.8h-1.8z M258.2 685.2h1.8v1.8h-1.8z M263.0 703.2h1.8v1.8h-1.8z M267.8 718.9h1.8v1.8h-1.8z M272.5 731.4h1.8v1.8h-1.8z M339.5 592.4h1.8v1.8h-1.8z M344.3 593.7h1.8v1.8h-1.8z M420.8 555.0h1.8v1.8h-1.8z M425.6 555.9h1.8v1.8h-1.8z M430.4 558.1h1.8v1.8h-1.8z M435.1 562.3h1.8v1.8h-1.8z M439.9 569.1h1.8v1.8h-1.8z M444.7 575.5h1.8v1.8h-1.8z M449.5 581.3h1.8v1.8h-1.8z M454.3 586.6h1.8v1.8h-1.8z M478.2 570.5h1.8v1.8h-1.8z M483.0 571.9h1.8v1.8h-1.8z M487.8 575.1h1.8v1.8h-1.8z M492.5 580.1h1.8v1.8h-1.8z M497.3 587.1h1.8v1.8h-1.8z M502.1 593.5h1.8v1.8h-1.8z M506.9 599.4h1.8v1.8h-1.8z M511.7 604.9h1.8v1.8h-1.8z M516.5 609.9h1.8v1.8h-1.8z M521.2 614.5h1.8v1.8h-1.8z M526.0 618.8h1.8v1.8h-1.8z M530.8 622.7h1.8v1.8h-1.8z M535.6 628.8h1.8v1.8h-1.8z M540.4 636.8h1.8v1.8h-1.8z M545.1 646.6h1.8v1.8h-1.8z M549.9 656.9h1.8v1.8h-1.8z M554.7 667.9h1.8v1.8h-1.8z M559.5 684.0h1.8v1.8h-1.8z M564.3 697.2h1.8v1.8h-1.8z M569.1 707.8h1.8v1.8h-1.8z M597.8 676.9h1.8v1.8h-1.8z M602.5 678.7h1.8v1.8h-1.8z M607.3 680.5h1.8v1.8h-1.8z M612.1 682.2h1.8v1.8h-1.8z M616.9 686.5h1.8v1.8h-1.8z M621.7 690.7h1.8v1.8h-1.8z M626.5 694.7h1.8v1.8h-1.8z M631.2 698.6h1.8v1.8h-1.8z M636.0 702.2h1.8v1.8h-1.8z M640.8 705.8h1.8v1.8h-1.8z M645.6 709.2h1.8v1.8h-1.8z M650.4 712.5h1.8v1.8h-1.8z M655.1 715.6h1.8v1.8h-1.8z M659.9 718.6h1.8v1.8h-1.8z M664.7 721.5h1.8v1.8h-1.8z M669.5 724.3h1.8v1.8h-1.8z M674.3 726.9h1.8v1.8h-1.8z M707.8 725.8h1.8v1.8h-1.8z M712.5 727.2h1.8v1.8h-1.8z M717.3 730.0h1.8v1.8h-1.8z M722.1 736.2h1.8v1.8h-1.8z M726.9 744.3h1.8v1.8h-1.8z M731.7 751.7h1.8v1.8h-1.8z M736.4 758.6h1.8v1.8h-1.8z M741.2 764.9h1.8v1.8h-1.8z M746.0 770.7h1.8v1.8h-1.8z M750.8 776.1h1.8v1.8h-1.8z M793.8 779.0h1.8v1.8h-1.8z M798.6 779.9h1.8v1.8h-1.8z M803.4 780.8h1.8v1.8h-1.8z M808.2 784.0h1.8v1.8h-1.8z M813.0 788.7h1.8v1.8h-1.8z M817.8 793.1h1.8v1.8h-1.8z M822.5 797.2h1.8v1.8h-1.8z M827.3 801.1h1.8v1.8h-1.8z M832.1 804.7h1.8v1.8h-1.8z M836.9 808.1h1.8v1.8h-1.8z M841.7 811.3h1.8v1.8h-1.8z M846.4 814.4h1.8v1.8h-1.8z M937.3 758.1h1.8v1.8h-1.8z M942.1 758.9h1.8v1.8h-1.8z M946.9 762.2h1.8v1.8h-1.8z M951.7 768.3h1.8v1.8h-1.8z M956.4 774.1h1.8v1.8h-1.8z M961.2 779.5h1.8v1.8h-1.8z M966.0 784.6h1.8v1.8h-1.8z M1042.5 736.0h1.8v1.8h-1.8z M1047.3 736.8h1.8v1.8h-1.8z M1052.1 737.6h1.8v1.8h-1.8z M1056.9 738.4h1.8v1.8h-1.8z M1061.7 739.1h1.8v1.8h-1.8z M1066.4 739.8h1.8v1.8h-1.8z M1162.1 680.9h1.8v1.8h-1.8z M1166.9 681.2h1.8v1.8h-1.8z M1171.7 682.3h1.8v1.8h-1.8z M1176.4 684.2h1.8v1.8h-1.8z M1181.2 685.9h1.8v1.8h-1.8z M1186.0 687.6h1.8v1.8h-1.8z M1190.8 689.2h1.8v1.8h-1.8z M1195.6 690.6h1.8v1.8h-1.8z M1200.3 692.0h1.8v1.8h-1.8z M1205.1 694.5h1.8v1.8h-1.8z M1209.9 700.5h1.8v1.8h-1.8z M1214.7 705.9h1.8v1.8h-1.8z M1219.5 710.7h1.8v1.8h-1.8z M1224.3 715.1h1.8v1.8h-1.8z M1229.0 719.0h1.8v1.8h-1.8z M1262.5 694.2h1.8v1.8h-1.8z M1267.3 695.2h1.8v1.8h-1.8z M1272.1 697.3h1.8v1.8h-1.8z M1276.9 700.4h1.8v1.8h-1.8z M1281.7 703.3h1.8v1.8h-1.8z M1286.4 707.2h1.8v1.8h-1.8z M1291.2 712.6h1.8v1.8h-1.8z M1296.0 717.3h1.8v1.8h-1.8z M1300.8 721.6h1.8v1.8h-1.8z M1305.6 728.8h1.8v1.8h-1.8z M1310.3 736.3h1.8v1.8h-1.8z M1315.1 742.7h1.8v1.8h-1.8z M1319.9 748.2h1.8v1.8h-1.8z M1372.5 711.3h1.8v1.8h-1.8z M1377.3 712.1h1.8v1.8h-1.8z M1382.1 714.0h1.8v1.8h-1.8z M1386.9 716.8h1.8v1.8h-1.8z M1391.6 720.4h1.8v1.8h-1.8z M1396.4 724.6h1.8v1.8h-1.8z M1401.2 728.5h1.8v1.8h-1.8z M1406.0 731.9h1.8v1.8h-1.8z M1410.8 735.0h1.8v1.8h-1.8z M1415.6 737.8h1.8v1.8h-1.8z M1420.3 740.4h1.8v1.8h-1.8z M1444.3 731.6h1.8v1.8h-1.8z M1449.0 731.6h1.8v1.8h-1.8z M1563.8 650.8h1.8v1.8h-1.8z M1568.6 650.8h1.8v1.8h-1.8z M1573.4 652.5h1.8v1.8h-1.8z M1578.2 655.3h1.8v1.8h-1.8z M1582.9 657.8h1.8v1.8h-1.8z M1587.7 660.2h1.8v1.8h-1.8z M1592.5 663.6h1.8v1.8h-1.8z M1597.3 666.8h1.8v1.8h-1.8z M1602.1 669.7h1.8v1.8h-1.8z M1606.9 672.3h1.8v1.8h-1.8z M1611.6 674.3h1.8v1.8h-1.8z M1616.4 674.3h1.8v1.8h-1.8z M1645.1 639.3h1.8v1.8h-1.8z M1649.9 640.5h1.8v1.8h-1.8z M1654.7 641.6h1.8v1.8h-1.8z M1659.5 642.7h1.8v1.8h-1.8z M1664.3 645.0h1.8v1.8h-1.8z M1669.0 647.2h1.8v1.8h-1.8z M1673.8 650.5h1.8v1.8h-1.8z M1678.6 653.7h1.8v1.8h-1.8z M1683.4 656.7h1.8v1.8h-1.8z M1688.2 659.6h1.8v1.8h-1.8z M1692.9 662.2h1.8v1.8h-1.8z M1697.7 664.7h1.8v1.8h-1.8z M1702.5 667.0h1.8v1.8h-1.8z M1707.3 669.2h1.8v1.8h-1.8z M1712.1 671.3h1.8v1.8h-1.8z M1716.9 673.3h1.8v1.8h-1.8z M1721.6 675.1h1.8v1.8h-1.8z M1726.4 676.8h1.8v1.8h-1.8z M1731.2 678.4h1.8v1.8h-1.8z" fill="#e88a60"/>
<path d="M75.1 406.1h1.8v1.8h-1.8z M79.9 405.9h1.8v1.8h-1.8z M84.7 405.5h1.8v1.8h-1.8z M89.5 404.9h1.8v1.8h-1.8z M94.2 404.1h1.8v1.8h-1.8z M99.0 403.1h1.8v1.8h-1.8z M103.8 401.9h1.8v1.8h-1.8z M108.6 400.5h1.8v1.8h-1.8z M113.4 399.0h1.8v1.8h-1.8z M118.2 397.3h1.8v1.8h-1.8z M123.0 395.5h1.8v1.8h-1.8z M127.8 393.5h1.8v1.8h-1.8z M132.5 391.4h1.8v1.8h-1.8z M137.3 389.1h1.8v1.8h-1.8z" fill="#d8d8d0"/>
<path d="M70 707.5H1784" stroke="#e2dcc6" stroke-width="1" fill="none"/>
<rect x="1731.5" y="697.5" width="4.5" height="10.5" fill="#f2e020"/>
<path d="M0 700h63l6.500 7.800l-6.500 8h-63z" fill="#ece4d4"/>
<text x="3" y="711.3" font-family="'DejaVu Sans',Verdana,sans-serif" font-size="10.3" letter-spacing="0.45" fill="#111">44,550.85</text>
<path d="M70.7 1097.6h3.8v3.9h-3.8z M75.5 1096.4h3.8v5.1h-3.8z M80.2 1096.7h3.8v4.8h-3.8z M85.0 1097.6h3.8v3.9h-3.8z M89.8 1098.6h3.8v2.9h-3.8z M94.6 1099.0h3.8v2.5h-3.8z M99.4 1098.8h3.8v2.7h-3.8z M104.2 1098.5h3.8v3.0h-3.8z M108.9 1098.1h3.8v3.4h-3.8z M113.7 1098.4h3.8v3.1h-3.8z M118.5 1098.7h3.8v2.8h-3.8z M123.3 1099.0h3.8v2.5h-3.8z M128.1 1099.3h3.8v2.2h-3.8z M132.9 1099.5h3.8v2.0h-3.8z M137.6 1099.8h3.8v1.7h-3.8z M266.8 1100.8h3.8v0.7h-3.8z M271.5 1097.6h3.8v3.9h-3.8z M276.3 1092.3h3.8v9.2h-3.8z M281.1 1087.5h3.8v14.0h-3.8z M285.9 1084.0h3.8v17.5h-3.8z M290.7 1077.5h3.8v24.0h-3.8z M295.5 1077.0h3.8v24.5h-3.8z M300.2 1077.7h3.8v23.8h-3.8z M305.0 1079.0h3.8v22.5h-3.8z M309.8 1081.4h3.8v20.1h-3.8z M314.6 1079.8h3.8v21.7h-3.8z M319.4 1080.6h3.8v20.9h-3.8z M324.2 1083.1h3.8v18.4h-3.8z M328.9 1088.0h3.8v13.5h-3.8z M333.7 1094.3h3.8v7.2h-3.8z M338.5 1096.0h3.8v5.5h-3.8z M343.3 1096.1h3.8v5.4h-3.8z M348.1 1095.4h3.8v6.1h-3.8z M352.8 1093.9h3.8v7.6h-3.8z M357.6 1092.8h3.8v8.7h-3.8z M362.4 1095.8h3.8v5.7h-3.8z M367.2 1096.9h3.8v4.6h-3.8z M372.0 1097.6h3.8v3.9h-3.8z M458.1 1099.6h3.8v1.9h-3.8z M462.8 1096.9h3.8v4.6h-3.8z M467.6 1100.0h3.8v1.5h-3.8z M572.8 1100.8h3.8v0.7h-3.8z M577.6 1094.7h3.8v6.8h-3.8z M582.4 1094.1h3.8v7.4h-3.8z M587.2 1097.0h3.8v4.5h-3.8z M592.0 1099.3h3.8v2.2h-3.8z M620.7 1100.6h3.8v0.9h-3.8z M625.5 1095.6h3.8v5.9h-3.8z M630.2 1090.7h3.8v10.8h-3.8z M635.0 1092.4h3.8v9.1h-3.8z M639.8 1093.8h3.8v7.7h-3.8z M644.6 1095.9h3.8v5.6h-3.8z M649.4 1098.5h3.8v3.0h-3.8z M654.1 1098.4h3.8v3.1h-3.8z M658.9 1100.3h3.8v1.2h-3.8z M668.5 1100.5h3.8v1.0h-3.8z M673.3 1099.3h3.8v2.2h-3.8z M678.1 1097.3h3.8v4.2h-3.8z M682.8 1095.9h3.8v5.6h-3.8z M687.6 1097.5h3.8v4.0h-3.8z M692.4 1098.0h3.8v3.5h-3.8z M697.2 1099.4h3.8v2.1h-3.8z M740.2 1100.5h3.8v1.0h-3.8z M745.0 1098.2h3.8v3.3h-3.8z M749.8 1097.0h3.8v4.5h-3.8z M754.6 1096.2h3.8v5.3h-3.8z M759.4 1095.4h3.8v6.1h-3.8z M764.1 1095.0h3.8v6.5h-3.8z M768.9 1095.9h3.8v5.6h-3.8z M773.7 1097.1h3.8v4.4h-3.8z M778.5 1098.9h3.8v2.6h-3.8z M783.3 1100.8h3.8v0.7h-3.8z M826.3 1100.6h3.8v0.9h-3.8z M831.1 1099.5h3.8v2.0h-3.8z M835.9 1098.7h3.8v2.8h-3.8z M840.7 1098.2h3.8v3.3h-3.8z M845.4 1097.8h3.8v3.7h-3.8z M850.2 1097.4h3.8v4.1h-3.8z M855.0 1097.2h3.8v4.3h-3.8z M859.8 1097.0h3.8v4.5h-3.8z M864.6 1097.4h3.8v4.1h-3.8z M869.4 1099.0h3.8v2.5h-3.8z M878.9 1100.6h3.8v0.9h-3.8z M883.7 1098.5h3.8v3.0h-3.8z M888.5 1098.1h3.8v3.4h-3.8z M893.3 1097.7h3.8v3.8h-3.8z M898.1 1095.3h3.8v6.2h-3.8z M902.8 1093.4h3.8v8.1h-3.8z M907.6 1093.1h3.8v8.4h-3.8z M912.4 1093.4h3.8v8.1h-3.8z M917.2 1094.4h3.8v7.1h-3.8z M922.0 1097.2h3.8v4.3h-3.8z M926.7 1099.3h3.8v2.2h-3.8z M931.5 1101.0h3.8v0.5h-3.8z M965.0 1099.7h3.8v1.8h-3.8z M969.8 1097.0h3.8v4.5h-3.8z M974.6 1095.4h3.8v6.1h-3.8z M979.4 1095.0h3.8v6.5h-3.8z M984.1 1095.3h3.8v6.2h-3.8z M988.9 1096.0h3.8v5.5h-3.8z M993.7 1097.7h3.8v3.8h-3.8z M998.5 1100.1h3.8v1.4h-3.8z M1017.6 1100.1h3.8v1.4h-3.8z M1022.4 1099.0h3.8v2.5h-3.8z M1027.2 1099.1h3.8v2.4h-3.8z M1032.0 1100.8h3.8v0.7h-3.8z M1079.8 1101.1h3.8v0.4h-3.8z M1084.6 1101.0h3.8v0.5h-3.8z M1089.4 1100.9h3.8v0.6h-3.8z M1094.1 1101.0h3.8v0.5h-3.8z M1098.9 1101.2h3.8v0.3h-3.8z M1113.3 1101.1h3.8v0.4h-3.8z M1122.8 1100.0h3.8v1.5h-3.8z M1127.6 1099.8h3.8v1.7h-3.8z M1132.4 1100.0h3.8v1.5h-3.8z M1137.2 1099.9h3.8v1.6h-3.8z M1142.0 1100.4h3.8v1.1h-3.8z M1146.7 1101.1h3.8v0.4h-3.8z M1237.6 1099.2h3.8v2.3h-3.8z M1242.4 1098.2h3.8v3.3h-3.8z M1247.2 1097.4h3.8v4.1h-3.8z M1252.0 1098.7h3.8v2.8h-3.8z M1256.7 1100.7h3.8v0.8h-3.8z M1323.7 1100.2h3.8v1.3h-3.8z M1328.5 1097.2h3.8v4.3h-3.8z M1333.3 1095.1h3.8v6.4h-3.8z M1338.0 1094.9h3.8v6.6h-3.8z M1342.8 1094.9h3.8v6.6h-3.8z M1347.6 1094.9h3.8v6.6h-3.8z M1352.4 1094.7h3.8v6.8h-3.8z M1357.2 1095.4h3.8v6.1h-3.8z M1362.0 1096.4h3.8v5.1h-3.8z M1366.7 1099.3h3.8v2.2h-3.8z M1419.3 1100.6h3.8v0.9h-3.8z M1424.1 1099.8h3.8v1.7h-3.8z M1428.9 1099.8h3.8v1.7h-3.8z M1433.7 1099.8h3.8v1.7h-3.8z M1438.5 1100.5h3.8v1.0h-3.8z M1452.8 1100.8h3.8v0.7h-3.8z M1457.6 1098.5h3.8v3.0h-3.8z M1462.4 1096.0h3.8v5.5h-3.8z M1467.2 1098.1h3.8v3.4h-3.8z M1472.0 1099.3h3.8v2.2h-3.8z M1476.7 1099.0h3.8v2.5h-3.8z M1481.5 1098.6h3.8v2.9h-3.8z M1486.3 1097.9h3.8v3.6h-3.8z M1491.1 1097.5h3.8v4.0h-3.8z M1495.9 1097.7h3.8v3.8h-3.8z M1500.6 1098.9h3.8v2.6h-3.8z M1505.4 1100.7h3.8v0.8h-3.8z M1529.3 1101.1h3.8v0.4h-3.8z M1534.1 1100.9h3.8v0.6h-3.8z M1538.9 1100.2h3.8v1.3h-3.8z M1543.7 1098.9h3.8v2.6h-3.8z M1548.5 1098.0h3.8v3.5h-3.8z M1553.3 1097.7h3.8v3.8h-3.8z M1558.0 1097.9h3.8v3.6h-3.8z M1562.8 1099.7h3.8v1.8h-3.8z M1620.2 1100.8h3.8v0.7h-3.8z M1625.0 1099.6h3.8v1.9h-3.8z M1629.8 1096.8h3.8v4.7h-3.8z M1634.6 1097.5h3.8v4.0h-3.8z" fill="#b030a8"/>
<path d="M142.4 1101.5h3.8v0.5h-3.8z M147.2 1101.5h3.8v11.2h-3.8z M152.0 1101.5h3.8v10.7h-3.8z M156.8 1101.5h3.8v16.0h-3.8z M161.5 1101.5h3.8v21.7h-3.8z M166.3 1101.5h3.8v16.0h-3.8z M171.1 1101.5h3.8v10.5h-3.8z M175.9 1101.5h3.8v5.5h-3.8z M180.7 1101.5h3.8v6.5h-3.8z M185.5 1101.5h3.8v7.2h-3.8z M190.2 1101.5h3.8v7.6h-3.8z M195.0 1101.5h3.8v6.9h-3.8z M199.8 1101.5h3.8v9.0h-3.8z M204.6 1101.5h3.8v10.6h-3.8z M209.4 1101.5h3.8v10.6h-3.8z M214.2 1101.5h3.8v10.7h-3.8z M218.9 1101.5h3.8v8.0h-3.8z M223.7 1101.5h3.8v5.9h-3.8z M228.5 1101.5h3.8v5.2h-3.8z M233.3 1101.5h3.8v7.7h-3.8z M238.1 1101.5h3.8v6.6h-3.8z M242.8 1101.5h3.8v5.9h-3.8z M247.6 1101.5h3.8v6.2h-3.8z M252.4 1101.5h3.8v7.0h-3.8z M257.2 1101.5h3.8v7.6h-3.8z M262.0 1101.5h3.8v6.0h-3.8z M381.5 1101.5h3.8v3.4h-3.8z M386.3 1101.5h3.8v4.8h-3.8z M391.1 1101.5h3.8v6.3h-3.8z M395.9 1101.5h3.8v4.4h-3.8z M400.7 1101.5h3.8v3.2h-3.8z M405.5 1101.5h3.8v2.4h-3.8z M410.2 1101.5h3.8v2.6h-3.8z M415.0 1101.5h3.8v3.2h-3.8z M419.8 1101.5h3.8v5.0h-3.8z M424.6 1101.5h3.8v7.2h-3.8z M429.4 1101.5h3.8v9.3h-3.8z M434.1 1101.5h3.8v10.4h-3.8z M438.9 1101.5h3.8v11.4h-3.8z M443.7 1101.5h3.8v8.5h-3.8z M448.5 1101.5h3.8v6.1h-3.8z M453.3 1101.5h3.8v1.7h-3.8z M472.4 1101.5h3.8v0.6h-3.8z M477.2 1101.5h3.8v2.8h-3.8z M482.0 1101.5h3.8v5.2h-3.8z M486.8 1101.5h3.8v4.3h-3.8z M491.5 1101.5h3.8v6.7h-3.8z M496.3 1101.5h3.8v6.4h-3.8z M501.1 1101.5h3.8v5.5h-3.8z M505.9 1101.5h3.8v3.7h-3.8z M510.7 1101.5h3.8v2.6h-3.8z M515.5 1101.5h3.8v1.8h-3.8z M520.2 1101.5h3.8v1.4h-3.8z M525.0 1101.5h3.8v1.1h-3.8z M529.8 1101.5h3.8v2.8h-3.8z M534.6 1101.5h3.8v5.1h-3.8z M539.4 1101.5h3.8v6.6h-3.8z M544.1 1101.5h3.8v6.9h-3.8z M548.9 1101.5h3.8v6.4h-3.8z M553.7 1101.5h3.8v8.1h-3.8z M558.5 1101.5h3.8v8.4h-3.8z M563.3 1101.5h3.8v6.8h-3.8z M568.1 1101.5h3.8v3.8h-3.8z M596.8 1101.5h3.8v0.8h-3.8z M601.5 1101.5h3.8v2.3h-3.8z M606.3 1101.5h3.8v3.1h-3.8z M611.1 1101.5h3.8v3.5h-3.8z M615.9 1101.5h3.8v3.6h-3.8z M663.7 1101.5h3.8v0.8h-3.8z M702.0 1101.5h3.8v0.8h-3.8z M706.8 1101.5h3.8v4.5h-3.8z M711.5 1101.5h3.8v7.4h-3.8z M716.3 1101.5h3.8v9.1h-3.8z M721.1 1101.5h3.8v10.5h-3.8z M725.9 1101.5h3.8v9.3h-3.8z M730.7 1101.5h3.8v6.9h-3.8z M735.4 1101.5h3.8v3.7h-3.8z M788.1 1101.5h3.8v0.5h-3.8z M797.6 1101.5h3.8v2.0h-3.8z M802.4 1101.5h3.8v4.9h-3.8z M807.2 1101.5h3.8v4.2h-3.8z M812.0 1101.5h3.8v3.4h-3.8z M816.8 1101.5h3.8v2.4h-3.8z M821.5 1101.5h3.8v0.8h-3.8z M874.1 1101.5h3.8v1.5h-3.8z M936.3 1101.5h3.8v4.6h-3.8z M941.1 1101.5h3.8v9.6h-3.8z M945.9 1101.5h3.8v12.6h-3.8z M950.7 1101.5h3.8v11.8h-3.8z M955.4 1101.5h3.8v6.9h-3.8z M960.2 1101.5h3.8v2.0h-3.8z M1003.3 1101.5h3.8v0.8h-3.8z M1008.0 1101.5h3.8v1.2h-3.8z M1036.7 1101.5h3.8v2.0h-3.8z M1041.5 1101.5h3.8v3.2h-3.8z M1046.3 1101.5h3.8v3.2h-3.8z M1051.1 1101.5h3.8v2.2h-3.8z M1055.9 1101.5h3.8v1.4h-3.8z M1060.7 1101.5h3.8v0.6h-3.8z M1161.1 1101.5h3.8v0.7h-3.8z M1165.9 1101.5h3.8v1.4h-3.8z M1170.7 1101.5h3.8v2.8h-3.8z M1175.4 1101.5h3.8v4.1h-3.8z M1180.2 1101.5h3.8v4.8h-3.8z M1185.0 1101.5h3.8v4.1h-3.8z M1189.8 1101.5h3.8v3.3h-3.8z M1194.6 1101.5h3.8v3.2h-3.8z M1199.3 1101.5h3.8v5.3h-3.8z M1204.1 1101.5h3.8v7.9h-3.8z M1208.9 1101.5h3.8v8.4h-3.8z M1213.7 1101.5h3.8v6.3h-3.8z M1218.5 1101.5h3.8v3.7h-3.8z M1223.3 1101.5h3.8v2.9h-3.8z M1228.0 1101.5h3.8v2.1h-3.8z M1261.5 1101.5h3.8v1.3h-3.8z M1266.3 1101.5h3.8v3.4h-3.8z M1271.1 1101.5h3.8v4.1h-3.8z M1275.9 1101.5h3.8v3.6h-3.8z M1280.7 1101.5h3.8v3.8h-3.8z M1285.4 1101.5h3.8v4.7h-3.8z M1290.2 1101.5h3.8v3.1h-3.8z M1295.0 1101.5h3.8v0.4h-3.8z M1299.8 1101.5h3.8v2.8h-3.8z M1304.6 1101.5h3.8v3.6h-3.8z M1309.3 1101.5h3.8v2.5h-3.8z M1314.1 1101.5h3.8v1.7h-3.8z M1371.5 1101.5h3.8v0.4h-3.8z M1376.3 1101.5h3.8v2.4h-3.8z M1381.1 1101.5h3.8v3.8h-3.8z M1385.9 1101.5h3.8v3.9h-3.8z M1390.6 1101.5h3.8v3.8h-3.8z M1395.4 1101.5h3.8v3.1h-3.8z M1400.2 1101.5h3.8v2.4h-3.8z M1405.0 1101.5h3.8v1.7h-3.8z M1409.8 1101.5h3.8v1.1h-3.8z M1443.3 1101.5h3.8v0.3h-3.8z M1448.0 1101.5h3.8v1.6h-3.8z M1510.2 1101.5h3.8v0.3h-3.8z M1515.0 1101.5h3.8v0.3h-3.8z M1567.6 1101.5h3.8v2.9h-3.8z M1572.4 1101.5h3.8v4.4h-3.8z M1577.2 1101.5h3.8v4.5h-3.8z M1581.9 1101.5h3.8v4.3h-3.8z M1586.7 1101.5h3.8v4.1h-3.8z M1591.5 1101.5h3.8v4.1h-3.8z M1596.3 1101.5h3.8v2.9h-3.8z M1601.1 1101.5h3.8v1.2h-3.8z M1605.9 1101.5h3.8v0.3h-3.8z M1610.6 1101.5h3.8v0.5h-3.8z M1653.7 1101.5h3.8v0.4h-3.8z M1658.5 1101.5h3.8v1.4h-3.8z M1663.3 1101.5h3.8v1.9h-3.8z M1668.0 1101.5h3.8v2.1h-3.8z M1672.8 1101.5h3.8v2.0h-3.8z M1677.6 1101.5h3.8v1.0h-3.8z M1682.4 1101.5h3.8v0.7h-3.8z M1687.2 1101.5h3.8v0.7h-3.8z M1691.9 1101.5h3.8v0.8h-3.8z M1696.7 1101.5h3.8v1.4h-3.8z M1701.5 1101.5h3.8v2.0h-3.8z M1706.3 1101.5h3.8v2.4h-3.8z M1711.1 1101.5h3.8v2.7h-3.8z M1715.9 1101.5h3.8v2.2h-3.8z M1720.6 1101.5h3.8v1.7h-3.8z M1725.4 1101.5h3.8v1.4h-3.8z M1730.2 1101.5h3.8v1.1h-3.8z" fill="#5028b8"/>
<path d="M70.4 1112.2 L78.8 1108.2 L93.9 1107.9 L110.6 1103.9 L127.4 1102.2 L140.8 1101.2 L144.2 1105.5 L149.2 1120.6 L154.2 1124.0 L163.3 1142.4 L171.0 1138.4 L177.7 1133.4 L184.4 1137.4 L191.1 1141.7 L197.8 1143.1 L206.2 1150.8 L216.2 1156.5 L224.6 1154.8 L229.6 1154.8 L236.3 1160.2 L241.4 1159.2 L248.1 1160.9 L258.1 1165.2 L263.2 1165.9 L268.2 1159.2 L274.9 1154.2 L281.6 1142.4 L288.3 1130.7 L293.3 1117.3 L300.0 1108.9 L306.7 1100.5 L311.8 1095.5 L318.5 1085.4 L323.5 1082.1 L330.2 1084.4 L336.9 1090.5 L345.3 1087.8 L352.0 1083.8 L358.7 1078.1 L365.4 1079.4 L373.8 1078.7 L378.8 1083.1 L383.8 1087.8 L388.9 1090.5 L393.9 1093.8 L398.9 1092.1 L407.3 1092.1 L415.7 1093.8 L424.1 1099.8 L432.5 1107.2 L440.8 1112.2 L449.2 1110.6 L455.9 1105.5 L464.3 1097.8 L469.3 1101.2 L476.0 1104.5 L484.4 1110.6 L487.8 1109.9 L494.5 1115.6 L502.8 1115.6 L509.6 1113.9 L517.9 1113.3 L528.0 1113.3 L536.4 1119.0 L543.1 1123.3 L549.8 1125.0 L556.5 1130.7 L563.2 1133.4 L569.9 1130.7 L574.9 1125.7 L580.0 1116.6 L585.0 1114.6 L591.7 1115.6 L590.0 1115.6 L600.1 1122.3 L610.1 1125.7 L618.5 1127.3 L625.2 1119.0 L631.9 1108.9 L643.6 1107.2 L650.3 1109.9 L657.0 1108.9 L665.4 1112.2 L673.8 1108.9 L683.9 1102.2 L693.9 1103.2 L700.6 1105.5 L707.3 1112.2 L715.7 1120.6 L724.1 1126.7 L730.8 1126.3 L737.5 1122.3 L744.2 1115.6 L754.3 1110.6 L764.3 1105.5 L772.7 1104.9 L781.1 1107.2 L787.8 1109.9 L796.2 1110.6 L804.5 1117.3 L818.0 1117.3 L828.0 1113.3 L838.1 1109.9 L848.1 1107.2 L854.8 1105.5 L864.9 1103.9 L871.6 1105.5 L876.6 1109.6 L885.0 1103.2 L895.1 1098.8 L903.4 1091.5 L911.8 1087.8 L918.5 1086.4 L925.2 1088.8 L931.9 1089.8 L938.6 1097.8 L945.3 1108.9 L950.4 1112.9 L955.4 1110.6 L962.1 1103.9 L968.8 1097.8 L975.5 1093.1 L983.9 1089.8 L992.3 1088.8 L999.0 1091.1 L1007.4 1095.5 L1015.7 1093.8 L1024.1 1090.5 L1030.8 1089.5 L1037.5 1093.1 L1045.9 1096.2 L1059.3 1094.5 L1076.1 1093.1 L1092.8 1092.1 L1109.6 1092.1 L1119.7 1091.5 L1126.4 1088.8 L1139.8 1087.8 L1153.2 1088.8 L1166.6 1090.5 L1176.7 1095.5 L1183.4 1097.8 L1190.0 1097.8 L1198.4 1099.8 L1205.1 1107.2 L1211.8 1110.6 L1220.2 1108.2 L1230.2 1108.2 L1240.3 1102.2 L1250.3 1097.8 L1260.4 1102.2 L1270.5 1108.2 L1280.5 1109.6 L1288.9 1112.9 L1297.3 1109.6 L1304.0 1114.6 L1314.0 1113.9 L1324.1 1110.6 L1334.2 1102.2 L1344.2 1098.8 L1354.3 1095.5 L1362.6 1094.5 L1371.0 1098.8 L1381.1 1104.9 L1391.1 1107.9 L1404.5 1108.2 L1414.6 1107.2 L1424.7 1103.9 L1438.1 1102.2 L1449.8 1105.5 L1458.2 1100.5 L1464.9 1095.5 L1471.6 1097.8 L1481.7 1095.5 L1491.7 1092.1 L1500.1 1090.5 L1508.5 1092.8 L1518.5 1093.8 L1528.6 1093.8 L1538.6 1092.1 L1548.7 1087.1 L1558.8 1084.4 L1563.8 1085.4 L1568.8 1092.1 L1575.5 1096.5 L1585.6 1098.8 L1595.6 1101.2 L1605.7 1098.8 L1615.7 1099.8 L1625.8 1097.8 L1634.2 1092.1 L1640.9 1097.8 L1652.6 1097.8 L1662.7 1101.2 L1672.7 1103.2 L1682.8 1102.2 L1692.8 1102.2 L1702.9 1104.9 L1713.0 1106.5 L1723.0 1106.5 L1733.7 1107.2" stroke="#8ce070" stroke-width="0.95" fill="none" stroke-linejoin="round"/>
<path d="M70.4 1115.6 L100.6 1108.9 L127.4 1104.5 L140.8 1102.9 L150.9 1110.6 L160.9 1119.0 L171.0 1125.7 L181.0 1129.0 L191.1 1134.0 L201.1 1137.4 L217.9 1146.8 L234.7 1151.5 L251.4 1155.8 L264.8 1159.2 L271.5 1159.8 L278.2 1157.5 L284.9 1152.5 L293.3 1142.4 L301.7 1130.7 L311.8 1115.6 L321.8 1103.9 L331.9 1097.8 L345.3 1093.1 L355.3 1088.8 L365.4 1084.4 L375.5 1082.4 L385.5 1084.4 L395.6 1087.8 L405.6 1089.5 L415.7 1091.1 L425.7 1094.5 L435.8 1098.8 L445.9 1102.9 L455.9 1104.5 L466.0 1102.5 L476.0 1103.2 L486.1 1105.5 L496.1 1108.9 L506.2 1110.6 L517.9 1111.6 L528.0 1112.2 L536.4 1113.9 L546.4 1117.3 L556.5 1122.3 L566.5 1126.3 L573.2 1127.3 L580.0 1124.0 L588.3 1120.6 L590.0 1119.0 L606.8 1121.6 L620.2 1124.0 L630.2 1120.6 L640.3 1115.6 L650.3 1112.9 L660.4 1111.6 L670.5 1111.2 L680.5 1108.9 L690.6 1106.5 L700.6 1107.2 L710.7 1109.6 L720.7 1114.6 L730.8 1118.3 L740.9 1119.0 L750.9 1116.6 L761.0 1113.3 L771.0 1110.6 L781.1 1109.6 L791.1 1109.6 L804.5 1112.2 L818.0 1114.6 L831.4 1113.9 L844.8 1111.6 L858.2 1109.2 L871.6 1107.9 L881.7 1107.2 L891.7 1103.9 L905.1 1098.8 L918.5 1093.8 L928.6 1091.5 L938.6 1092.8 L948.7 1098.8 L958.8 1102.2 L968.8 1101.2 L978.9 1098.2 L988.9 1094.8 L999.0 1093.1 L1009.0 1093.8 L1019.1 1093.8 L1029.2 1092.1 L1039.2 1091.5 L1049.3 1092.8 L1066.0 1093.8 L1082.8 1093.1 L1099.6 1092.5 L1116.3 1092.1 L1133.1 1089.8 L1149.8 1088.8 L1166.6 1089.5 L1180.0 1092.1 L1190.0 1094.5 L1200.1 1097.2 L1210.1 1101.5 L1220.2 1104.5 L1230.2 1106.2 L1240.3 1104.9 L1250.3 1102.2 L1260.4 1102.2 L1270.5 1103.9 L1280.5 1106.2 L1290.6 1108.2 L1300.6 1109.9 L1310.7 1111.6 L1320.7 1111.6 L1330.8 1109.6 L1340.9 1106.5 L1350.9 1103.2 L1361.0 1100.5 L1371.0 1099.5 L1381.1 1101.2 L1391.1 1103.9 L1404.5 1106.2 L1414.6 1106.5 L1424.7 1105.5 L1438.1 1103.9 L1449.8 1103.9 L1458.2 1102.9 L1468.2 1100.5 L1481.7 1098.2 L1491.7 1096.2 L1501.8 1093.8 L1511.8 1092.8 L1521.9 1093.8 L1531.9 1093.8 L1542.0 1092.1 L1552.1 1089.8 L1562.1 1087.8 L1568.8 1089.5 L1578.9 1092.8 L1588.9 1095.5 L1599.0 1097.8 L1609.0 1098.8 L1619.1 1099.5 L1629.2 1098.8 L1639.2 1097.8 L1649.3 1097.8 L1659.3 1098.8 L1669.4 1100.5 L1679.4 1101.5 L1692.8 1101.5 L1702.9 1102.9 L1713.0 1103.9 L1723.0 1104.9 L1733.7 1106.2" stroke="#f09040" stroke-width="0.95" fill="none" stroke-linejoin="round"/>
</svg>
<div id="hdr">
<svg class="a" style="left:13px;top:7px" width="18" height="16" viewBox="0 0 18 16"><g fill="none" stroke="#d8d8d8" stroke-width="1.8"><circle cx="5.5" cy="10.500" r="3"/><circle cx="12.500" cy="5" r="3"/></g><path d="M7.500 9l3-2.500" stroke="#d8d8d8" stroke-width="1.6"/></svg>
<div class="sel" style="left:36px;width:111.5px"><span class="kn">マーケット</span></div>
<div class="sel" style="left:153px;width:252px">日経225</div>
<div class="sel" style="left:411.5px;width:74px">1分足</div>
<div class="btn" style="left:492px;width:18px"><svg width="18" height="20"><path d="M11 5.500l-4.500 4.500 4.500 4.500" fill="none" stroke="#e8e8e8" stroke-width="1.5"/></svg></div>
<div class="btn" style="left:511px;width:18px"><svg width="18" height="20"><path d="M7 5.500l4.500 4.500-4.500 4.500" fill="none" stroke="#e8e8e8" stroke-width="1.5"/></svg></div>
<div class="btn on" style="left:536px;width:60px">表示期間</div>
<div class="btn" style="left:603px;width:60px"><span class="kn" style="position:absolute;left:6px;top:0">テクニカル</span></div>
<div class="btn on" style="left:670px;width:52px">通常</div>
<div class="btn" style="left:723px;width:52px">指数化</div>
<div class="btn" style="left:776px;width:52px"><span class="kn" style="position:absolute;left:2px;top:0">スプレッド</span></div>
<div class="ib" style="left:835px;top:5px;background:#454545"><svg width="20" height="20" viewBox="0 0 20 20"><path d="M10 3.500v13M3.500 10h13" stroke="#f0f0f0" stroke-width="1.1"/></svg></div>
<div class="ib" style="left:862px;top:5px;background:#454545"><svg width="20" height="20" viewBox="0 0 20 20"><circle cx="9" cy="9" r="5.2" fill="none" stroke="#f0f0f0" stroke-width="1.6"/><path d="M9 6.2v5.6M6.2 9h5.6" stroke="#f0f0f0" stroke-width="1.4"/><path d="M13 13l4 4" stroke="#f0f0f0" stroke-width="2"/></svg></div>
<div class="ib" style="left:885px;top:5px;background:#454545"><svg width="20" height="20" viewBox="0 0 20 20"><g opacity=".35"><circle cx="9" cy="9" r="5.2" fill="none" stroke="#f0f0f0" stroke-width="1.6"/><path d="M6.2 9h5.6" stroke="#f0f0f0" stroke-width="1.4"/><path d="M13 13l4 4" stroke="#f0f0f0" stroke-width="2"/></g></svg></div>
<div class="ib" style="left:912px;top:5px;background:#454545"><svg width="20" height="20" viewBox="0 0 20 20"><path d="M4 16l1.5-4.5L13.5 3.5l3 3L8.5 14.5z" fill="#f0f0f0"/><path d="M6 12.5l8-8M7.5 14l8-8" stroke="#454545" stroke-width=".8"/></svg></div>
<div class="ib" style="left:939px;top:5px;background:#454545"><svg width="20" height="20" viewBox="0 0 20 20"><path d="M2 9l2.300 3.300 3.700-9.500 3 6.200 3.200-4.300 2.400 4.300" fill="none" stroke="#f0f0f0" stroke-width="1.3"/><path d="M11 9.500l6 4.500-2.600.400 1.600 3-1.400.700-1.500-3-2 1.600z" fill="#f0f0f0" stroke="#454545" stroke-width=".5"/></svg></div>
<div class="ib" style="left:966px;top:5px;background:#3a5a9c"><svg width="20" height="20" viewBox="0 0 20 20"><path d="M4.500 4.800l5.300 6.200 5.300-6.200M9.800 11v6M5.200 12h9.300M5.200 14.500h9.300" fill="none" stroke="#fff" stroke-width="1.500"/></svg></div>
<div class="ib" style="left:993px;top:5px;background:#454545"><svg width="20" height="20" viewBox="0 0 20 20"><circle cx="10" cy="10" r="6.100" fill="#f0f0f0"/><path d="M10 9v4.800" stroke="#454545" stroke-width="2"/><circle cx="10" cy="6.500" r="1.150" fill="#454545"/></svg></div>
<div class="ib" style="left:1020px;top:5px;background:#454545"><svg width="20" height="20" viewBox="0 0 20 20"><text x="1.500" y="8.200" font-family="Liberation Sans,sans-serif" font-weight="bold" font-size="6.800" letter-spacing=".3" fill="#f0f0f0">MY</text><path d="M8 9.300v7.800M12.600 9.800v8.200M16.800 7.800v7.800" stroke="#f0f0f0" stroke-width="1"/><path d="M7 11.200h2v4.900h-2zM11.600 10.800h2v5.300h-2zM15.800 9.300h2v4.900h-2z" fill="#f0f0f0"/></svg></div>
<div class="ib" style="left:1047px;top:5px;background:#454545"><svg width="20" height="20" viewBox="0 0 20 20"><path d="M2 13.700v-2.500l2.900-2.900 1.500 1.500 3.400-3.900 1.900 2.900 2-1.500 1.900 2.500 2-1.500.400 5.400z" fill="#f0f0f0"/></svg></div>
<div class="ib" style="left:1074px;top:5px;background:#454545"><svg width="20" height="20" viewBox="0 0 20 20"><path d="M4 16.5l7-7a3.6 3.6 0 0 1 4.6-4.6l-2.3 2.3.4 1.6 1.6.4 2.3-2.3a3.6 3.6 0 0 1-4.6 4.6l-7 7z" fill="#f0f0f0" transform="translate(-1,-1)"/></svg></div>
<div class="ib" style="left:1108px;top:5px;background:#454545"><svg width="20" height="20" viewBox="0 0 20 20"><path d="M6.500 9.500v-4.800h5.600l2.500 2.500v2.300z" fill="#454545" stroke="#f0f0f0" stroke-width="1.200"/><path d="M3.100 9.800h13.700v6.300h-13.700z" fill="#f0f0f0"/><path d="M4.600 12.700h10.700v1.500h-10.700z" fill="#454545"/></svg></div>
<div class="ib" style="left:1135px;top:5px;background:#454545"><svg width="20" height="20" viewBox="0 0 20 20"><path d="M4 4.500h12v11.500h-12z" fill="none" stroke="#f0f0f0" stroke-width="1.3"/><path d="M4 6.500h12" stroke="#f0f0f0" stroke-width="1.6"/><path d="M10 8.500l3.500 3.500h-2.300v2.500h-2.400v-2.500h-2.300z" fill="#f0f0f0"/></svg></div>
<div class="t" style="left:13px;top:36px;letter-spacing:0">表示期間</div>
<div class="sel" style="left:70.5px;top:32px;width:77px;height:21.5px">本数指定</div>
<div class="t" style="left:154px;top:36px;letter-spacing:0">本数</div>
<div class="sel" style="left:186px;top:32px;height:21.5px;width:42px;padding:0 2px 0 0;text-align:right;letter-spacing:.6px;border-color:#3a3a3a" id="nb">358</div>
<div class="btn" style="left:228.5px;top:33px;width:14px;height:20px;background:#555"><svg width="14" height="20"><path d="M3.500 8h7l-3.500 5z" fill="#ccc"/></svg></div>
<div class="btn" style="left:243.5px;top:33px;width:14px;height:20px;background:#555"><svg width="14" height="20"><path d="M3.500 13h7l-3.500-5z" fill="#ccc"/></svg></div>
<div class="t" style="left:264px;top:36px"><span style="letter-spacing:0">表示期間：</span> 2025/09/30 15:15 ～ 2025/10/01 15:30</div>
<div class="ib" style="left:600px;top:33px;background:#454545"><svg width="20" height="20" viewBox="0 0 20 20"><path d="M5 7h8a3 3 0 0 1 0 6H8" fill="none" stroke="#f0f0f0" stroke-width="2.2"/><path d="M9.500 9.800v6.400l-4.500-3.200z" fill="#f0f0f0"/></svg></div>
<div class="t" style="left:13px;top:67.5px;font-size:15px;color:#ead764;letter-spacing:0">日経225</div>
<div class="t cy" style="left:321px;top:67.5px">現在値</div>
<div class="t" style="left:389px;top:67.5px">44,550.85</div>
<div class="t gr" style="left:514px;top:67.5px">-381.78</div>
<div class="t gr" style="left:619px;top:67.5px">-0.85%</div>
<div class="t" style="left:681px;top:67.5px">25/10/01&nbsp; 15:45</div>
<div class="t cy" style="left:13px;top:92.5px">始値</div>
<div class="t" style="left:76px;top:92.5px">44,831.95 09:00</div>
<div class="t cy" style="left:208px;top:92.5px">高値</div>
<div class="t" style="left:270px;top:92.5px">44,874.42 09:01</div>
<div class="t cy" style="left:403px;top:92.5px">安値</div>
<div class="t" style="left:466px;top:92.5px">44,357.65 11:18</div>
<div class="t cy" style="left:598px;top:92.5px">前日終値</div>
<div class="t" style="left:687px;top:92.5px">44,932.63</div>
<div class="t cy" style="left:767px;top:92.5px">出来高</div>
<div class="t" style="left:901px;top:92.5px">0</div>
</div>
<div class="a" style="left:1183px;top:15px;width:264px;height:106px;border:3px solid #f23c72;border-radius:6px;background:#161616;overflow:hidden"><div style="position:absolute;left:0;top:0;width:100%;height:47px;background:linear-gradient(90deg,#222,#383838 50%,#2a2a2a);border-bottom:2px solid #0c0c0c"></div><div class="a" style="left:29px;top:6px;font-size:31px;line-height:40px;color:#f0f0f0;letter-spacing:0px;font-weight:400;letter-spacing:1.6px" id="pl1">評価損益(円)</div><div class="a" style="right:11.5px;top:57px;font-size:32px;line-height:40px;color:#4fd65a;letter-spacing:-0.1px" id="pl2">-408,871</div></div>
<div class="pn" style="left:441px;top:232.4px;width:545px;height:274.9px">
<div class="row" style="top:0.00px;height:38.55px">
<div class="nm"><b style="">日経平均株価</b>
<div class="x"><svg width="17.5" height="17.5" viewBox="0 0 17.5 17.5"><path d="M4.800 4.300h2l6 8.900h-2z" fill="none" stroke="#fff" stroke-width="1"/><path d="M12.600 4.300l-7.600 8.900" stroke="#fff" stroke-width="1"/></svg></div>
<div class="sb" style="width:69px">寄与度</div>
</div>
<div class="ic">
<i class=""></i>
<span class="">10/01</span></div>
<div class="mc"><svg width="76" height="38.0" viewBox="0 0 76 38.0"><defs><linearGradient id="r11" x1="0" y1="2.2" x2="0" y2="32.2" gradientUnits="userSpaceOnUse"><stop offset="0" stop-color="#ecc6cc"/><stop offset="1" stop-color="#f27c7c"/></linearGradient></defs><rect x="0.5" y="0.5" width="75" height="37.0" rx="2" fill="#e7e7e7" stroke="#cfcfcf"/><path d="M1 34.0H75M35 1V37.0M70 1V37.0" stroke="#d4d4d4" stroke-width=".6"/><path d="M1 2.2L1 7.1L2 12.5L3 17.0L4 17.7L5 18.5L6 17.4L7 15.8L8 13.9L9 12.6L10 11.2L11 10.8L12 11.9L13 13.9L14 15.1L15 15.7L16 18.0L17 19.3L18 19.3L19 19.7L20 19.5L21 19.8L22 20.9L23 21.0L24 21.8L25 22.4L26 22.3L27 22.8L28 22.9L29 23.4L30 23.4L31 23.4L32 23.4L33 23.4L34 23.4L35 23.4L36 23.4L37 23.4L38 23.4L39 23.4L40 23.4L41 21.7L42 20.8L43 20.9L44 22.1L45 21.6L46 21.3L47 19.9L48 19.8L49 19.1L50 17.6L51 17.3L52 17.5L53 17.3L54 18.2L55 18.0L56 18.0L57 18.9L58 18.9L59 18.2L60 17.9L61 18.0L62 18.5L63 17.9L64 16.9L65 16.7L66 16.1L67 15.8L68 16.4L69 15.4L70 15.6L71 15.2L72 15.2L73 16.0L74 15.6L75 16.3L75 2.2Z" fill="url(#r11)"/><rect x="29.500" y="2.2" width="11.500" height="21.5" fill="#f1d8d8"/><path d="M1 2.2H75" stroke="#8a90e0" stroke-width=".9"/><path d="M1 7.1L2 12.5L3 17.0L4 17.7L5 18.5L6 17.4L7 15.8L8 13.9L9 12.6L10 11.2L11 10.8L12 11.9L13 13.9L14 15.1L15 15.7L16 18.0L17 19.3L18 19.3L19 19.7L20 19.5L21 19.8L22 20.9L23 21.0L24 21.8L25 22.4L26 22.3L27 22.8L28 22.9L29 23.4" stroke="#d86464" stroke-width=".8" fill="none"/><path d="M41 21.7L42 20.8L43 20.9L44 22.1L45 21.6L46 21.3L47 19.9L48 19.8L49 19.1L50 17.6L51 17.3L52 17.5L53 17.3L54 18.2L55 18.0L56 18.0L57 18.9L58 18.9L59 18.2L60 17.9L61 18.0L62 18.5L63 17.9L64 16.9L65 16.7L66 16.1L67 15.8L68 16.4L69 15.4L70 15.6L71 15.2L72 15.2L73 16.0L74 15.6L75 16.3" stroke="#d86464" stroke-width=".8" fill="none"/></svg></div>
<div class="dt" style=""><div class="in" style="top:0px"><div class="pr">44,550<s>.85</s></div><div class="ch">-381<s>.78</s></div><div class="bd" style=""><u>▼</u>0.85<s>%</s></div><div class="hl">H:44,874<s>.42</s><br>L:44,357<s>.65</s></div></div></div>
</div>
<div class="row" style="top:39.55px;height:38.55px">
<div class="nm"><b style="">TOPIX</b>
<div class="sb yb" style="width:35px;padding-left:17px;letter-spacing:1px"><i style="position:absolute;left:5px;top:3.500px;width:7px;height:7px;background:#eee"></i>Y!</div>
</div>
<div class="ic">
<i class=""></i>
<span class="">10/01</span></div>
<div class="mc"><svg width="76" height="38.0" viewBox="0 0 76 38.0"><defs><linearGradient id="r12" x1="0" y1="5.0" x2="0" y2="35.0" gradientUnits="userSpaceOnUse"><stop offset="0" stop-color="#ecc6cc"/><stop offset="1" stop-color="#f27c7c"/></linearGradient></defs><rect x="0.5" y="0.5" width="75" height="37.0" rx="2" fill="#e7e7e7" stroke="#cfcfcf"/><path d="M1 34.0H75M35 1V37.0M70 1V37.0" stroke="#d4d4d4" stroke-width=".6"/><path d="M1 5.0L1 10.7L2 14.9L3 18.6L4 19.7L5 21.3L6 21.1L7 20.4L8 19.0L9 18.3L10 18.6L11 19.2L12 19.4L13 20.5L14 21.0L15 22.6L16 22.5L17 24.2L18 23.6L19 24.6L20 24.4L21 24.8L22 25.6L23 24.9L24 25.2L25 26.5L26 26.2L27 25.9L28 27.0L29 27.1L30 27.1L31 27.1L32 27.1L33 27.1L34 27.1L35 27.1L36 27.1L37 27.1L38 27.1L39 27.1L40 27.1L41 24.9L42 24.1L43 23.0L44 22.7L45 22.1L46 22.6L47 22.7L48 22.5L49 22.1L50 21.7L51 21.6L52 21.9L53 21.9L54 21.2L55 21.2L56 21.3L57 21.4L58 21.7L59 21.3L60 20.8L61 21.6L62 21.1L63 21.2L64 20.8L65 21.0L66 20.9L67 21.3L68 20.6L69 21.1L70 20.7L71 21.4L72 20.7L73 21.0L74 21.1L75 21.5L75 5.0Z" fill="url(#r12)"/><rect x="29.500" y="5.0" width="11.500" height="22.4" fill="#f1d8d8"/><path d="M1 5.0H75" stroke="#8a90e0" stroke-width=".9"/><path d="M1 10.7L2 14.9L3 18.6L4 19.7L5 21.3L6 21.1L7 20.4L8 19.0L9 18.3L10 18.6L11 19.2L12 19.4L13 20.5L14 21.0L15 22.6L16 22.5L17 24.2L18 23.6L19 24.6L20 24.4L21 24.8L22 25.6L23 24.9L24 25.2L25 26.5L26 26.2L27 25.9L28 27.0L29 27.1" stroke="#d86464" stroke-width=".8" fill="none"/><path d="M41 24.9L42 24.1L43 23.0L44 22.7L45 22.1L46 22.6L47 22.7L48 22.5L49 22.1L50 21.7L51 21.6L52 21.9L53 21.9L54 21.2L55 21.2L56 21.3L57 21.4L58 21.7L59 21.3L60 20.8L61 21.6L62 21.1L63 21.2L64 20.8L65 21.0L66 20.9L67 21.3L68 20.6L69 21.1L70 20.7L71 21.4L72 20.7L73 21.0L74 21.1L75 21.5" stroke="#d86464" stroke-width=".8" fill="none"/></svg></div>
<div class="dt" style=""><div class="in" style="top:0px"><div class="pr">3,094<s>.74</s></div><div class="ch">-42<s>.86</s></div><div class="bd" style="background:#f3dcdc"><u>▼</u>1.37<s>%</s></div><div class="hl">H:3,124<s>.04</s><br>L:3,080<s>.93</s></div></div></div>
</div>
<div class="row" style="top:79.10px;height:38.55px">
<div class="nm"><b style="">JPX日経400</b>
</div>
<div class="ic">
<i class=""></i>
<span class="">10/01</span></div>
<div class="mc"><svg width="76" height="38.0" viewBox="0 0 76 38.0"><defs><linearGradient id="r13" x1="0" y1="12.0" x2="0" y2="42.0" gradientUnits="userSpaceOnUse"><stop offset="0" stop-color="#ecc6cc"/><stop offset="1" stop-color="#f27c7c"/></linearGradient></defs><rect x="0.5" y="0.5" width="75" height="37.0" rx="2" fill="#e7e7e7" stroke="#cfcfcf"/><path d="M1 34.0H75M35 1V37.0M70 1V37.0" stroke="#d4d4d4" stroke-width=".6"/><path d="M1 12.0L1 17.7L2 20.9L3 24.2L4 23.9L5 24.5L6 24.1L7 23.2L8 22.8L9 21.8L10 22.6L11 22.7L12 23.4L13 24.3L14 25.4L15 25.8L16 25.8L17 26.8L18 26.9L19 27.9L20 28.1L21 28.3L22 28.6L23 28.8L24 29.2L25 29.3L26 28.9L27 29.7L28 29.5L29 30.0L30 30.0L31 30.0L32 30.0L33 30.0L34 30.0L35 30.0L36 30.0L37 30.0L38 30.0L39 30.0L40 30.0L41 29.1L42 27.5L43 27.2L44 26.7L45 26.2L46 26.1L47 26.2L48 25.7L49 25.8L50 25.9L51 25.6L52 25.1L53 25.4L54 25.0L55 24.9L56 24.8L57 24.9L58 24.5L59 25.2L60 25.5L61 24.9L62 25.2L63 25.5L64 24.5L65 24.6L66 25.3L67 25.4L68 25.2L69 24.6L70 24.9L71 25.4L72 25.4L73 25.3L74 24.7L75 25.4L75 12.0Z" fill="url(#r13)"/><rect x="29.500" y="12.0" width="11.500" height="18.3" fill="#f1d8d8"/><path d="M1 12.0H75" stroke="#8a90e0" stroke-width=".9"/><path d="M1 17.7L2 20.9L3 24.2L4 23.9L5 24.5L6 24.1L7 23.2L8 22.8L9 21.8L10 22.6L11 22.7L12 23.4L13 24.3L14 25.4L15 25.8L16 25.8L17 26.8L18 26.9L19 27.9L20 28.1L21 28.3L22 28.6L23 28.8L24 29.2L25 29.3L26 28.9L27 29.7L28 29.5L29 30.0" stroke="#d86464" stroke-width=".8" fill="none"/><path d="M41 29.1L42 27.5L43 27.2L44 26.7L45 26.2L46 26.1L47 26.2L48 25.7L49 25.8L50 25.9L51 25.6L52 25.1L53 25.4L54 25.0L55 24.9L56 24.8L57 24.9L58 24.5L59 25.2L60 25.5L61 24.9L62 25.2L63 25.5L64 24.5L65 24.6L66 25.3L67 25.4L68 25.2L69 24.6L70 24.9L71 25.4L72 25.4L73 25.3L74 24.7L75 25.4" stroke="#d86464" stroke-width=".8" fill="none"/></svg></div>
<div class="dt" style=""><div class="in" style="top:0px"><div class="pr">27,814<s>.05</s></div><div class="ch">-345<s>.58</s></div><div class="bd" style="background:#f3dede"><u>▼</u>1.23<s>%</s></div><div class="hl">H:28,052<s>.80</s><br>L:27,680<s>.11</s></div></div></div>
</div>
<div class="row" style="top:118.65px;height:38.55px">
<div class="nm"><b style="">グロース250</b>
<div class="sb yb" style="width:35px;padding-left:17px;letter-spacing:1px"><i style="position:absolute;left:5px;top:3.500px;width:7px;height:7px;background:#eee"></i>Y!</div>
</div>
<div class="ic">
<i class=""></i>
<span class="">10/01</span></div>
<div class="mc"><svg width="76" height="38.0" viewBox="0 0 76 38.0"><defs><linearGradient id="r14" x1="0" y1="2.3" x2="0" y2="21.1" gradientUnits="userSpaceOnUse"><stop offset="0" stop-color="#ecc6cc"/><stop offset="1" stop-color="#e64848"/></linearGradient></defs><rect x="0.5" y="0.5" width="75" height="37.0" rx="2" fill="#e7e7e7" stroke="#cfcfcf"/><path d="M1 34.0H75M35 1V37.0M70 1V37.0" stroke="#d4d4d4" stroke-width=".6"/><path d="M1 2.3L1 7.2L2 9.2L3 11.5L4 12.7L5 12.1L6 11.9L7 11.2L8 10.4L9 10.5L10 9.9L11 11.1L12 11.2L13 12.1L14 13.6L15 13.8L16 14.0L17 14.9L18 14.9L19 14.7L20 15.4L21 15.8L22 15.3L23 16.0L24 15.5L25 15.8L26 15.6L27 15.9L28 16.8L29 16.3L30 16.3L31 16.3L32 16.3L33 16.3L34 16.3L35 16.3L36 16.3L37 16.3L38 16.3L39 16.3L40 16.3L41 16.5L42 16.3L43 16.7L44 16.6L45 17.3L46 16.9L47 16.4L48 17.1L49 16.2L50 16.3L51 16.0L52 16.7L53 16.2L54 16.8L55 16.6L56 17.2L57 17.6L58 17.6L59 17.8L60 18.0L61 18.1L62 18.5L63 18.1L64 18.7L65 18.6L66 19.5L67 19.8L68 19.0L69 19.4L70 20.3L71 20.5L72 20.2L73 21.3L74 21.9L75 21.6L75 2.3Z" fill="url(#r14)"/><rect x="29.500" y="2.3" width="11.500" height="14.3" fill="#f1d8d8"/><path d="M1 2.3H75" stroke="#8a90e0" stroke-width=".9"/><path d="M1 7.2L2 9.2L3 11.5L4 12.7L5 12.1L6 11.9L7 11.2L8 10.4L9 10.5L10 9.9L11 11.1L12 11.2L13 12.1L14 13.6L15 13.8L16 14.0L17 14.9L18 14.9L19 14.7L20 15.4L21 15.8L22 15.3L23 16.0L24 15.5L25 15.8L26 15.6L27 15.9L28 16.8L29 16.3" stroke="#d86464" stroke-width=".8" fill="none"/><path d="M41 16.5L42 16.3L43 16.7L44 16.6L45 17.3L46 16.9L47 16.4L48 17.1L49 16.2L50 16.3L51 16.0L52 16.7L53 16.2L54 16.8L55 16.6L56 17.2L57 17.6L58 17.6L59 17.8L60 18.0L61 18.1L62 18.5L63 18.1L64 18.7L65 18.6L66 19.5L67 19.8L68 19.0L69 19.4L70 20.3L71 20.5L72 20.2L73 21.3L74 21.9L75 21.6" stroke="#d86464" stroke-width=".8" fill="none"/></svg></div>
<div class="dt" style=""><div class="in" style="top:0px"><div class="pr">720<s>.06</s></div><div class="ch">-25<s>.34</s></div><div class="bd" style="background:#f0babc;border-color:#f6dada"><u>▼</u>3.40<s>%</s></div><div class="hl">H:740<s>.91</s><br>L:720<s>.06</s></div></div></div>
</div>
<div class="row" style="top:158.20px;height:38.55px">
<div class="nm"><b style="">為替 ドル円</b>
<div class="sb" style="width:69px">為替</div>
</div>
<div class="ic">
<svg style="position:absolute;left:1.5px;top:1.5px" width="23" height="23" viewBox="0 0 23 23"><defs><clipPath id="cc"><circle cx="11.500" cy="11.500" r="11.500"/></clipPath></defs><g clip-path="url(#cc)"><rect width="23" height="23" fill="#fff"/><circle cx="14.500" cy="11.500" r="5.500" fill="#d03a26"/><rect width="11.500" height="23" fill="#f4f4f4"/><path d="M0 12h11.500M0 15.200h11.500M0 18.400h11.500M0 21.600h11.500" stroke="#d8554a" stroke-width="1.700"/><rect width="11.500" height="10.500" fill="#4a6cb4"/><path d="M2 2.500h8M2 5h8M2 7.500h8" stroke="#9ab0dc" stroke-width=".8" stroke-dasharray="1 1.500"/></g></svg>
<span class="y">16:19</span></div>
<div class="mc"><svg width="76" height="38.0" viewBox="0 0 76 38.0"><rect x="0.5" y="0.5" width="75" height="37.0" rx="2" fill="#ffffff" stroke="#cfcfcf"/><path d="M1 34.0H75M35 1V37.0M70 1V37.0" stroke="#d4d4d4" stroke-width=".6"/><path d="M12 1V37.0M24 1V37.0M48 1V37.0M60 1V37.0" stroke="#ececec" stroke-width=".6"/><path d="M1 12.5L1 11.9L2 12.6L3 11.9L4 12.8L5 11.6L6 12.5L7 12.2L8 12.4L9 12.4L10 11.5L11 11.6L12 11.9L13 12.0L14 12.5L15 13.0L16 13.8L17 13.9L18 13.9L19 13.3L20 14.2L21 13.8L22 13.6L23 14.0L24 13.6L25 12.9L26 13.1L27 13.2L28 13.9L29 14.7L30 14.8L31 14.9L32 15.1L33 15.0L34 14.1L35 14.4L36 13.1L37 12.9L38 12.9L39 13.7L40 13.3L41 13.3L42 12.8L43 13.0L44 13.3L45 12.4L46 12.4L47 12.2L48 12.6L49 13.0L50 12.6L51 12.4L52 11.7L53 10.6L54 10.7L55 10.6L56 11.1L57 11.8L58 12.5L59 12.0L60 12.8L61 12.3L62 12.5L63 12.2L64 13.2L65 13.2L66 13.0L67 13.8L68 15.5L69 16.6L70 18.4L71 19.3L72 19.9L73 20.3L74 20.8L75 22.6L75 12.5Z" fill="#f4bcbc" fill-opacity=".8"/><path d="M1 11.9L2 12.6L3 11.9L4 12.8L5 11.6L6 12.5L7 12.2L8 12.4L9 12.4L10 11.5L11 11.6L12 11.9L13 12.0L14 12.5L15 13.0L16 13.8L17 13.9L18 13.9L19 13.3L20 14.2L21 13.8L22 13.6L23 14.0L24 13.6L25 12.9L26 13.1L27 13.2L28 13.9L29 14.7L30 14.8L31 14.9L32 15.1L33 15.0L34 14.1L35 14.4L36 13.1L37 12.9L38 12.9L39 13.7L40 13.3L41 13.3L42 12.8L43 13.0L44 13.3L45 12.4L46 12.4L47 12.2L48 12.6L49 13.0L50 12.6L51 12.4L52 11.7L53 10.6L54 10.7L55 10.6L56 11.1L57 11.8L58 12.5L59 12.0L60 12.8L61 12.3L62 12.5L63 12.2L64 13.2L65 13.2L66 13.0L67 13.8L68 15.5L69 16.6L70 18.4L71 19.3L72 19.9L73 20.3L74 20.8L75 22.6" stroke="#e07070" stroke-width=".7" fill="none"/><path d="M3 35.0H73" stroke="#bbb" stroke-width="1.2" stroke-dasharray="3 6"/></svg></div>
<div class="dt" style=""><div class="in" style="top:0px"><div class="pr k">147.04<s>4</s></div><div class="ch">-0.83<s>4</s></div><div class="bd" style=""><u>▼</u>0.56<s>%</s></div><div class="hl">H:148.22<s>6</s><br>L:147.01<s>7</s></div></div></div>
</div>
<div class="row" style="top:197.75px;height:38.55px">
<div class="nm"><b style="">為替 ユーロ円</b>
<div class="sb" style="width:69px">為替</div>
</div>
<div class="ic">
<svg style="position:absolute;left:1.5px;top:1.5px" width="23" height="23" viewBox="0 0 23 23"><defs><clipPath id="cc"><circle cx="11.500" cy="11.500" r="11.500"/></clipPath></defs><g clip-path="url(#cc)"><rect width="23" height="23" fill="#fff"/><circle cx="14.500" cy="11.500" r="5.500" fill="#d03a26"/><rect width="11.500" height="23" fill="#f4f4f4"/><path d="M0 12h11.500M0 15.200h11.500M0 18.400h11.500M0 21.600h11.500" stroke="#d8554a" stroke-width="1.700"/><rect width="11.500" height="10.500" fill="#4a6cb4"/><path d="M2 2.500h8M2 5h8M2 7.500h8" stroke="#9ab0dc" stroke-width=".8" stroke-dasharray="1 1.500"/></g></svg>
<span class="y">16:19</span></div>
<div class="mc"><svg width="76" height="38.0" viewBox="0 0 76 38.0"><rect x="0.5" y="0.5" width="75" height="37.0" rx="2" fill="#ffffff" stroke="#cfcfcf"/><path d="M1 34.0H75M35 1V37.0M70 1V37.0" stroke="#d4d4d4" stroke-width=".6"/><path d="M12 1V37.0M24 1V37.0M48 1V37.0M60 1V37.0" stroke="#ececec" stroke-width=".6"/><path d="M1 20.3L1 20.3L2 20.3L3 20.4L4 20.4L5 20.7L6 20.3L7 20.7L8 20.1L9 20.5L10 20.5L11 20.4L12 21.1L13 20.8L14 21.6L15 22.0L16 21.5L17 22.4L18 22.6L19 22.6L20 22.2L21 22.6L22 22.7L23 22.2L24 22.1L25 22.1L26 22.0L27 22.5L28 21.9L29 21.9L30 22.2L31 22.6L32 21.9L33 21.7L34 22.7L35 22.6L36 22.6L37 22.4L38 22.1L39 22.1L40 22.3L41 22.5L42 22.1L43 22.8L44 22.9L45 22.2L46 22.9L47 22.3L48 22.6L49 22.0L50 22.2L51 21.6L52 21.6L53 21.4L54 20.7L55 20.7L56 20.6L57 20.7L58 20.8L59 21.1L60 21.4L61 21.2L62 21.3L63 21.6L64 22.2L65 22.2L66 22.2L67 22.8L68 22.6L69 22.9L70 23.4L71 23.9L72 24.2L73 25.4L74 26.1L75 25.7L75 20.3Z" fill="#f4bcbc" fill-opacity=".8"/><path d="M1 20.3L2 20.3L3 20.4L4 20.4L5 20.7L6 20.3L7 20.7L8 20.1L9 20.5L10 20.5L11 20.4L12 21.1L13 20.8L14 21.6L15 22.0L16 21.5L17 22.4L18 22.6L19 22.6L20 22.2L21 22.6L22 22.7L23 22.2L24 22.1L25 22.1L26 22.0L27 22.5L28 21.9L29 21.9L30 22.2L31 22.6L32 21.9L33 21.7L34 22.7L35 22.6L36 22.6L37 22.4L38 22.1L39 22.1L40 22.3L41 22.5L42 22.1L43 22.8L44 22.9L45 22.2L46 22.9L47 22.3L48 22.6L49 22.0L50 22.2L51 21.6L52 21.6L53 21.4L54 20.7L55 20.7L56 20.6L57 20.7L58 20.8L59 21.1L60 21.4L61 21.2L62 21.3L63 21.6L64 22.2L65 22.2L66 22.2L67 22.8L68 22.6L69 22.9L70 23.4L71 23.9L72 24.2L73 25.4L74 26.1L75 25.7" stroke="#e07070" stroke-width=".7" fill="none"/><path d="M3 35.0H73" stroke="#bbb" stroke-width="1.2" stroke-dasharray="3 6"/></svg></div>
<div class="dt" style=""><div class="in" style="top:0px"><div class="pr k">173.15<s>4</s></div><div class="ch">-0.32<s>7</s></div><div class="bd" style=""><u>▼</u>0.19<s>%</s></div><div class="hl">H:173.91<s>4</s><br>L:173.14<s>8</s></div></div></div>
</div>
<div class="row" style="top:237.30px;height:36.00px">
<div class="nm"><b style=""><span class="cfd">CFD</span>日経平均</b>
<div class="x"><svg width="17.5" height="17.5" viewBox="0 0 17.5 17.5"><path d="M4.800 4.300h2l6 8.900h-2z" fill="none" stroke="#fff" stroke-width="1"/><path d="M12.600 4.300l-7.600 8.900" stroke="#fff" stroke-width="1"/></svg></div>
</div>
<div class="ic">
<i class="on"></i>
<span class="y">16:19</span></div>
<div class="mc"><svg width="76" height="37.0" viewBox="0 0 76 37.0"><rect x="0.5" y="0.5" width="75" height="36.0" rx="2" fill="#ffffff" stroke="#cfcfcf"/><path d="M1 33.0H75M35 1V36.0M70 1V36.0" stroke="#d4d4d4" stroke-width=".6"/><rect x="52" y="1" width="20" height="35.0" fill="#f6e47c"/><path d="M12 1V36.0M24 1V36.0M48 1V36.0M60 1V36.0" stroke="#ececec" stroke-width=".6"/><defs><clipPath id="c17a"><rect x="0" y="0" width="76" height="16.7"/></clipPath><clipPath id="c17b"><rect x="0" y="16.7" width="76" height="20.3"/></clipPath></defs><g clip-path="url(#c17a)"><path d="M1 16.7L1 9.0L2 11.2L3 12.6L4 12.9L5 12.7L6 12.5L7 11.8L8 11.6L9 11.8L10 12.2L11 11.5L12 11.7L13 11.5L14 12.0L15 12.0L16 11.9L17 13.0L18 12.5L19 13.8L20 14.3L21 14.0L22 13.7L23 12.7L24 12.2L25 10.5L26 9.9L27 9.4L28 9.8L29 10.0L30 10.4L31 12.0L32 10.9L33 10.9L34 9.4L35 9.5L36 8.9L37 8.5L38 7.2L39 7.3L40 6.7L41 7.2L42 6.5L43 6.9L44 6.0L45 6.1L46 6.0L47 5.0L48 5.1L49 5.9L50 5.8L51 6.0L52 6.3L53 10.8L54 14.1L55 15.5L56 16.5L57 17.6L58 18.6L59 20.7L60 22.5L61 21.2L62 20.6L63 20.6L64 19.7L65 18.7L66 18.0L67 18.3L68 17.3L69 16.6L70 15.6L71 15.1L72 17.0L73 18.3L74 19.8L75 22.6L75 16.7Z" fill="#bfe6b8"/><path d="M1 9.0L2 11.2L3 12.6L4 12.9L5 12.7L6 12.5L7 11.8L8 11.6L9 11.8L10 12.2L11 11.5L12 11.7L13 11.5L14 12.0L15 12.0L16 11.9L17 13.0L18 12.5L19 13.8L20 14.3L21 14.0L22 13.7L23 12.7L24 12.2L25 10.5L26 9.9L27 9.4L28 9.8L29 10.0L30 10.4L31 12.0L32 10.9L33 10.9L34 9.4L35 9.5L36 8.9L37 8.5L38 7.2L39 7.3L40 6.7L41 7.2L42 6.5L43 6.9L44 6.0L45 6.1L46 6.0L47 5.0L48 5.1L49 5.9L50 5.8L51 6.0L52 6.3L53 10.8L54 14.1L55 15.5L56 16.5L57 17.6L58 18.6L59 20.7L60 22.5L61 21.2L62 20.6L63 20.6L64 19.7L65 18.7L66 18.0L67 18.3L68 17.3L69 16.6L70 15.6L71 15.1L72 17.0L73 18.3L74 19.8L75 22.6" stroke="#58b050" stroke-width=".8" fill="none"/></g><g clip-path="url(#c17b)"><path d="M1 16.7L1 9.0L2 11.2L3 12.6L4 12.9L5 12.7L6 12.5L7 11.8L8 11.6L9 11.8L10 12.2L11 11.5L12 11.7L13 11.5L14 12.0L15 12.0L16 11.9L17 13.0L18 12.5L19 13.8L20 14.3L21 14.0L22 13.7L23 12.7L24 12.2L25 10.5L26 9.9L27 9.4L28 9.8L29 10.0L30 10.4L31 12.0L32 10.9L33 10.9L34 9.4L35 9.5L36 8.9L37 8.5L38 7.2L39 7.3L40 6.7L41 7.2L42 6.5L43 6.9L44 6.0L45 6.1L46 6.0L47 5.0L48 5.1L49 5.9L50 5.8L51 6.0L52 6.3L53 10.8L54 14.1L55 15.5L56 16.5L57 17.6L58 18.6L59 20.7L60 22.5L61 21.2L62 20.6L63 20.6L64 19.7L65 18.7L66 18.0L67 18.3L68 17.3L69 16.6L70 15.6L71 15.1L72 17.0L73 18.3L74 19.8L75 22.6L75 16.7Z" fill="#f6c0c0"/><path d="M1 9.0L2 11.2L3 12.6L4 12.9L5 12.7L6 12.5L7 11.8L8 11.6L9 11.8L10 12.2L11 11.5L12 11.7L13 11.5L14 12.0L15 12.0L16 11.9L17 13.0L18 12.5L19 13.8L20 14.3L21 14.0L22 13.7L23 12.7L24 12.2L25 10.5L26 9.9L27 9.4L28 9.8L29 10.0L30 10.4L31 12.0L32 10.9L33 10.9L34 9.4L35 9.5L36 8.9L37 8.5L38 7.2L39 7.3L40 6.7L41 7.2L42 6.5L43 6.9L44 6.0L45 6.1L46 6.0L47 5.0L48 5.1L49 5.9L50 5.8L51 6.0L52 6.3L53 10.8L54 14.1L55 15.5L56 16.5L57 17.6L58 18.6L59 20.7L60 22.5L61 21.2L62 20.6L63 20.6L64 19.7L65 18.7L66 18.0L67 18.3L68 17.3L69 16.6L70 15.6L71 15.1L72 17.0L73 18.3L74 19.8L75 22.6" stroke="#e06060" stroke-width=".8" fill="none"/></g><path d="M3 34.0H73" stroke="#bbb" stroke-width="1.2" stroke-dasharray="3 6"/></svg></div>
<div class="dt" style="background:#e7e7e2;"><div class="in" style="top:0px"><div class="pr k" style="right:226px;font-size:22.5px;top:4px">44,363<s style="font-size:15px">.70</s></div><div class="a" style="left:104px;top:4px;width:165px;height:30px;background:#fbfbf9;border-radius:2px;box-shadow:0 0 1px rgba(0,0,0,.3)"><div class="a" style="left:3px;top:7px;font-size:11px;line-height:16px;color:#9a9a9a;font-family:'Liberation Sans','Noto Sans CJK JP',sans-serif;letter-spacing:-1px">日経比:</div><div class="a" style="left:40px;top:3px;width:63px;height:24px;background:#f3eded;color:#d0362c;font-weight:bold;font-size:17.5px;line-height:24px;text-align:right;padding-right:5px">-187</div><div class="a" style="left:107.500px;top:3px;width:55px;height:24px;background:#f5ecec;border:1px solid #fff;box-shadow:0 0 1px rgba(0,0,0,.2);color:#d0362c;font-weight:bold;font-size:16.500px;line-height:23px;text-align:center;letter-spacing:-.5px"><span style="font-size:11px;position:relative;top:-1px">▼</span>0.42<span style="font-size:10px">%</span></div></div><div class="hl" style="font-size:10.700px;line-height:15.500px;top:5px">H:44,628<br>L:44,321</div></div></div>
</div>
</div>
<div class="pn" style="left:1036px;top:236.4px;width:547px;height:239.0px">
<div class="row" style="top:0.00px;height:38.73px">
<div class="nm"><b style="font-size:11.900px;letter-spacing:-0.500px;top:0px">日本国債10年利回り</b>
<div class="sb" style="width:70px">国債 債券</div>
</div>
<div class="ic">
<i class="on"></i>
<span class="y">16:18</span></div>
<div class="mc"><svg width="76" height="38.0" viewBox="0 0 76 38.0"><rect x="0.5" y="0.5" width="75" height="37.0" rx="2" fill="#ffffff" stroke="#cfcfcf"/><path d="M1 34.0H75M35 1V37.0M70 1V37.0" stroke="#d4d4d4" stroke-width=".6"/><path d="M12 1V37.0M24 1V37.0M48 1V37.0M60 1V37.0" stroke="#ececec" stroke-width=".6"/><defs><clipPath id="c21a"><rect x="0" y="0" width="76" height="19.0"/></clipPath><clipPath id="c21b"><rect x="0" y="19.0" width="76" height="19.0"/></clipPath></defs><g clip-path="url(#c21a)"><path d="M1 19.0L1 13.7L2 13.5L3 13.2L4 12.8L5 13.3L6 13.1L7 12.7L8 12.5L9 12.1L10 11.7L11 12.0L12 12.1L13 11.4L14 12.1L15 11.3L16 11.2L17 10.9L18 11.8L19 11.4L20 11.4L21 11.1L22 10.4L23 10.7L24 10.9L25 10.5L26 11.4L27 10.7L28 10.4L29 11.1L30 10.4L31 11.2L32 10.7L33 10.8L34 10.5L35 10.6L36 10.3L37 10.1L38 11.0L39 10.3L40 10.9L41 10.2L42 11.0L43 9.7L44 8.3L45 8.8L46 10.8L47 13.3L48 14.6L49 17.0L50 19.4L51 19.2L52 20.5L53 20.4L54 19.9L55 19.9L56 19.9L57 19.9L58 20.5L59 20.5L60 20.8L61 21.6L62 20.7L63 19.5L64 17.4L65 15.9L66 14.4L67 13.1L68 11.7L69 11.4L70 10.6L71 9.9L72 8.6L73 8.0L74 7.6L75 7.7L75 19.0Z" fill="#bfe6b8"/><path d="M1 13.7L2 13.5L3 13.2L4 12.8L5 13.3L6 13.1L7 12.7L8 12.5L9 12.1L10 11.7L11 12.0L12 12.1L13 11.4L14 12.1L15 11.3L16 11.2L17 10.9L18 11.8L19 11.4L20 11.4L21 11.1L22 10.4L23 10.7L24 10.9L25 10.5L26 11.4L27 10.7L28 10.4L29 11.1L30 10.4L31 11.2L32 10.7L33 10.8L34 10.5L35 10.6L36 10.3L37 10.1L38 11.0L39 10.3L40 10.9L41 10.2L42 11.0L43 9.7L44 8.3L45 8.8L46 10.8L47 13.3L48 14.6L49 17.0L50 19.4L51 19.2L52 20.5L53 20.4L54 19.9L55 19.9L56 19.9L57 19.9L58 20.5L59 20.5L60 20.8L61 21.6L62 20.7L63 19.5L64 17.4L65 15.9L66 14.4L67 13.1L68 11.7L69 11.4L70 10.6L71 9.9L72 8.6L73 8.0L74 7.6L75 7.7" stroke="#58b050" stroke-width=".8" fill="none"/></g><g clip-path="url(#c21b)"><path d="M1 19.0L1 13.7L2 13.5L3 13.2L4 12.8L5 13.3L6 13.1L7 12.7L8 12.5L9 12.1L10 11.7L11 12.0L12 12.1L13 11.4L14 12.1L15 11.3L16 11.2L17 10.9L18 11.8L19 11.4L20 11.4L21 11.1L22 10.4L23 10.7L24 10.9L25 10.5L26 11.4L27 10.7L28 10.4L29 11.1L30 10.4L31 11.2L32 10.7L33 10.8L34 10.5L35 10.6L36 10.3L37 10.1L38 11.0L39 10.3L40 10.9L41 10.2L42 11.0L43 9.7L44 8.3L45 8.8L46 10.8L47 13.3L48 14.6L49 17.0L50 19.4L51 19.2L52 20.5L53 20.4L54 19.9L55 19.9L56 19.9L57 19.9L58 20.5L59 20.5L60 20.8L61 21.6L62 20.7L63 19.5L64 17.4L65 15.9L66 14.4L67 13.1L68 11.7L69 11.4L70 10.6L71 9.9L72 8.6L73 8.0L74 7.6L75 7.7L75 19.0Z" fill="#f6c0c0"/><path d="M1 13.7L2 13.5L3 13.2L4 12.8L5 13.3L6 13.1L7 12.7L8 12.5L9 12.1L10 11.7L11 12.0L12 12.1L13 11.4L14 12.1L15 11.3L16 11.2L17 10.9L18 11.8L19 11.4L20 11.4L21 11.1L22 10.4L23 10.7L24 10.9L25 10.5L26 11.4L27 10.7L28 10.4L29 11.1L30 10.4L31 11.2L32 10.7L33 10.8L34 10.5L35 10.6L36 10.3L37 10.1L38 11.0L39 10.3L40 10.9L41 10.2L42 11.0L43 9.7L44 8.3L45 8.8L46 10.8L47 13.3L48 14.6L49 17.0L50 19.4L51 19.2L52 20.5L53 20.4L54 19.9L55 19.9L56 19.9L57 19.9L58 20.5L59 20.5L60 20.8L61 21.6L62 20.7L63 19.5L64 17.4L65 15.9L66 14.4L67 13.1L68 11.7L69 11.4L70 10.6L71 9.9L72 8.6L73 8.0L74 7.6L75 7.7" stroke="#e06060" stroke-width=".8" fill="none"/></g><path d="M3 35.0H73" stroke="#bbb" stroke-width="1.2" stroke-dasharray="3 6"/></svg></div>
<div class="dt" style=""><div class="in" style="top:1px"><div class="pr k">1.653<s></s></div><div class="ch g">+0.001<s></s></div><div class="bd g" style=""><u>▲</u>0.06<s>%</s></div><div class="hl">H:1.658<s></s><br>L:1.633<s></s></div></div></div>
</div>
<div class="row" style="top:39.73px;height:38.73px">
<div class="nm"><b style="">長期国債先物<span style="font-size:10px;letter-spacing:0"> 大取</span></b>
</div>
<div class="ic">
<i class="on"></i>
<span class="y">16:04</span></div>
<div class="mc"><svg width="76" height="38.0" viewBox="0 0 76 38.0"><rect x="0.5" y="0.5" width="75" height="37.0" rx="2" fill="#ffffff" stroke="#cfcfcf"/><path d="M1 34.0H75M35 1V37.0M70 1V37.0" stroke="#d4d4d4" stroke-width=".6"/><path d="M12 1V37.0M24 1V37.0M48 1V37.0M60 1V37.0" stroke="#ececec" stroke-width=".6"/><path d="M1 10.5L1 12.7L2 14.7L3 17.9L4 19.2L5 18.8L6 19.1L7 18.4L8 18.7L9 17.7L10 19.4L11 19.7L12 20.9L13 22.2L14 22.9L15 22.7L16 22.0L17 20.9L18 21.3L19 20.5L20 19.8L21 17.6L22 16.2L23 13.9L24 12.2L25 12.9L26 14.1L27 14.6L28 15.7L29 16.5L30 16.6L31 17.8L32 17.5L33 18.5L34 19.1L35 19.2L36 19.1L37 20.4L38 20.8L39 20.9L40 21.3L41 22.4L42 22.4L43 24.0L44 23.7L45 23.9L46 24.0L47 24.4L48 24.9L49 24.4L50 24.7L51 25.1L52 21.6L53 18.8L54 15.6L55 13.5L56 12.9L57 11.9L58 10.6L59 10.7L60 11.3L61 12.7L62 13.9L63 13.2L64 11.9L65 10.1L66 10.2L67 11.8L68 14.6L69 15.7L70 18.1L71 19.1L72 20.4L73 21.7L74 22.9L75 24.0L75 10.5Z" fill="#f4bcbc" fill-opacity=".8"/><path d="M1 12.7L2 14.7L3 17.9L4 19.2L5 18.8L6 19.1L7 18.4L8 18.7L9 17.7L10 19.4L11 19.7L12 20.9L13 22.2L14 22.9L15 22.7L16 22.0L17 20.9L18 21.3L19 20.5L20 19.8L21 17.6L22 16.2L23 13.9L24 12.2L25 12.9L26 14.1L27 14.6L28 15.7L29 16.5L30 16.6L31 17.8L32 17.5L33 18.5L34 19.1L35 19.2L36 19.1L37 20.4L38 20.8L39 20.9L40 21.3L41 22.4L42 22.4L43 24.0L44 23.7L45 23.9L46 24.0L47 24.4L48 24.9L49 24.4L50 24.7L51 25.1L52 21.6L53 18.8L54 15.6L55 13.5L56 12.9L57 11.9L58 10.6L59 10.7L60 11.3L61 12.7L62 13.9L63 13.2L64 11.9L65 10.1L66 10.2L67 11.8L68 14.6L69 15.7L70 18.1L71 19.1L72 20.4L73 21.7L74 22.9L75 24.0" stroke="#e07070" stroke-width=".7" fill="none"/><path d="M3 35.0H73" stroke="#bbb" stroke-width="1.2" stroke-dasharray="3 6"/></svg></div>
<div class="dt" style="background:radial-gradient(ellipse 90px 26px at 70px 50%,#eaf6e4,#f7f7f3 100%);"><div class="in" style="top:1px"><div class="pr k">135.73<s></s></div><div class="ch">-0.05<s></s></div><div class="bd" style="background:#f1efec"><u>▼</u>0.00<s>%</s></div><div class="hl">H:135.75<s></s><br>L:135.71<s></s></div></div></div>
</div>
<div class="row" style="top:79.46px;height:38.73px">
<div class="nm"><b style="">日経VI</b>
<div class="sb" style="width:70px">恐怖指数</div>
</div>
<div class="ic">
<svg style="position:absolute;left:1.5px;top:1.5px" width="23" height="23" viewBox="0 0 23 23"><circle cx="11.500" cy="11.500" r="11.500" fill="#8a8a88"/><path d="M2 15l4-6 3 4 2-3 0 9z" fill="#777" stroke="#9c9c9a" stroke-width=".6"/><path d="M8.500 21c0-6 .8-9 1.500-11a4.200 4.200 0 0 1 8 0c1.200 3 2 6 2 10a11.500 11.500 0 0 1-11.500 1z" fill="#5c5c5a"/><ellipse cx="14" cy="9" rx="2.600" ry="3" fill="#a4a4a2"/><circle cx="13" cy="8.600" r=".7" fill="#555"/><circle cx="15" cy="8.600" r=".7" fill="#555"/><path d="M11.500 14l3.500 5-4 1z" fill="#8a8a88"/></svg>
<span class="">10/01</span></div>
<div class="mc"><svg width="76" height="38.0" viewBox="0 0 76 38.0"><defs><linearGradient id="n23" x1="0" y1="12" x2="0" y2="32.0" gradientUnits="userSpaceOnUse"><stop offset="0" stop-color="#2f9a3a"/><stop offset="1" stop-color="#9fd49a"/></linearGradient></defs><rect x="0.5" y="0.5" width="75" height="37.0" rx="2" fill="#e7e7e7" stroke="#cfcfcf"/><path d="M1 34.0H75M35 1V37.0M70 1V37.0" stroke="#d4d4d4" stroke-width=".6"/><path d="M1 8.500H75M1 15.500H75M1 22.500H75" stroke="#d2d2d2" stroke-width=".7"/><path d="M1 32.0L1 26.5L2 24.4L3 21.5L4 24.5L5 26.7L6 27.8L7 26.9L8 26.5L9 26.3L10 25.6L11 25.4L12 24.5L13 23.9L14 23.9L15 22.9L16 22.3L17 22.0L18 21.0L19 20.1L20 20.3L21 19.1L22 18.2L23 17.2L24 16.6L25 15.9L26 17.3L27 17.9L28 19.1L29 19.0L30 18.5L31 18.1L32 18.4L33 18.6L34 18.3L35 18.0L36 18.2L37 17.9L38 18.0L39 18.3L40 19.0L41 18.5L42 18.6L43 19.2L44 19.8L45 20.8L46 21.7L47 22.7L48 22.8L49 23.2L50 23.4L51 23.7L52 24.5L53 24.6L54 24.6L55 24.8L56 25.9L57 26.2L58 26.7L59 26.4L60 27.2L61 28.0L62 28.1L63 29.0L64 28.6L65 30.0L66 29.5L67 30.4L68 29.3L69 29.5L70 28.7L71 28.4L72 27.4L73 26.8L74 25.6L75 25.3L75 32.0Z" fill="url(#n23)"/><path d="M1 32.0H75" stroke="#7a90d8" stroke-width=".9"/></svg></div>
<div class="dt" style=""><div class="in" style="top:1px"><div class="pr">25.66<s></s></div><div class="ch g">+0.42<s></s></div><div class="bd g" style="font-size:16px"><u>▲</u>1.66<s>%</s></div><div class="hl">H:26.27<s></s><br>L:25.14<s></s></div></div></div>
</div>
<div class="row" style="top:119.19px;height:38.73px">
<div class="nm"><b style="">NT倍率</b>
<div class="sb" style="width:70px">NT倍率</div>
</div>
<div class="ic">
<i class=""></i>
<span class="">10/01</span></div>
<div class="mc"><svg width="76" height="38.0" viewBox="0 0 76 38.0"><rect x="0.5" y="0.5" width="75" height="37.0" rx="2" fill="#e7e7e7" stroke="#cfcfcf"/><path d="M1 34.0H75M35 1V37.0M70 1V37.0" stroke="#d4d4d4" stroke-width=".6"/><path d="M1 22.7L1 13.9L2 13.4L3 14.6L4 13.9L5 14.7L6 14.3L7 15.3L8 14.4L9 14.7L10 14.5L11 14.2L12 13.6L13 13.8L14 13.7L15 12.3L16 12.4L17 12.6L18 12.0L19 11.7L20 11.6L21 12.4L22 11.5L23 12.4L24 12.5L25 11.8L26 12.1L27 12.1L28 12.5L29 12.4L30 12.4L31 12.4L32 12.4L33 12.4L34 12.4L35 12.4L36 12.4L37 12.4L38 12.4L39 12.4L40 12.4L41 12.7L42 13.8L43 14.5L44 14.1L45 15.0L46 14.5L47 14.4L48 14.7L49 14.8L50 15.1L51 14.0L52 14.4L53 14.8L54 14.5L55 14.1L56 13.7L57 14.0L58 13.5L59 13.7L60 13.6L61 13.2L62 13.5L63 12.9L64 12.9L65 13.1L66 12.4L67 12.2L68 12.5L69 12.3L70 12.6L71 11.9L72 11.9L73 11.5L74 11.8L75 11.6L75 22.7Z" fill="#b4dcae"/><rect x="29.500" y="12.4" width="11.500" height="10.3" fill="#cfe6cb"/><path d="M5 22.7H75" stroke="#8a90e0" stroke-width=".9"/><path d="M1 13.9L2 13.4L3 14.6L4 13.9L5 14.7L6 14.3L7 15.3L8 14.4L9 14.7L10 14.5L11 14.2L12 13.6L13 13.8L14 13.7L15 12.3L16 12.4L17 12.6L18 12.0L19 11.7L20 11.6L21 12.4L22 11.5L23 12.4L24 12.5L25 11.8L26 12.1L27 12.1L28 12.5L29 12.4" stroke="#4aa048" stroke-width=".7" fill="none"/><path d="M41 12.7L42 13.8L43 14.5L44 14.1L45 15.0L46 14.5L47 14.4L48 14.7L49 14.8L50 15.1L51 14.0L52 14.4L53 14.8L54 14.5L55 14.1L56 13.7L57 14.0L58 13.5L59 13.7L60 13.6L61 13.2L62 13.5L63 12.9L64 12.9L65 13.1L66 12.4L67 12.2L68 12.5L69 12.3L70 12.6L71 11.9L72 11.9L73 11.5L74 11.8L75 11.6" stroke="#4aa048" stroke-width=".7" fill="none"/></svg></div>
<div class="dt" style=""><div class="in" style="top:1px"><div class="pr">14.40<s></s></div><div class="ch g">+0.08<s></s></div><div class="bd g" style=""><u>▲</u>0.56<s>%</s></div><div class="hl">H:14.41<s></s><br>L:14.38<s></s></div></div></div>
</div>
<div class="row" style="top:158.92px;height:38.73px">
<div class="nm"><b style="">ドル建て日経平均</b>
<div class="sb" style="width:70px">日経ドル</div>
</div>
<div class="ic">
<i class=""></i>
<span class="">10/01</span></div>
<div class="mc"><svg width="76" height="38.0" viewBox="0 0 76 38.0"><defs><linearGradient id="r25" x1="0" y1="9.0" x2="0" y2="39.0" gradientUnits="userSpaceOnUse"><stop offset="0" stop-color="#ecc6cc"/><stop offset="1" stop-color="#f27c7c"/></linearGradient></defs><rect x="0.5" y="0.5" width="75" height="37.0" rx="2" fill="#e7e7e7" stroke="#cfcfcf"/><path d="M1 34.0H75M35 1V37.0M70 1V37.0" stroke="#d4d4d4" stroke-width=".6"/><path d="M1 9.0L1 11.5L2 15.8L3 19.5L4 21.7L5 20.2L6 18.2L7 18.3L8 17.1L9 16.8L10 16.5L11 16.8L12 17.0L13 18.2L14 19.1L15 19.4L16 20.3L17 20.8L18 21.6L19 21.6L20 22.4L21 23.1L22 23.1L23 24.1L24 23.8L25 23.3L26 23.9L27 23.8L28 23.6L29 23.6L30 23.6L31 23.6L32 23.6L33 23.6L34 23.6L35 23.6L36 23.6L37 23.6L38 23.6L39 23.6L40 23.6L41 23.3L42 22.4L43 22.1L44 21.8L45 21.4L46 20.5L47 21.0L48 20.0L49 19.4L50 19.4L51 19.5L52 19.0L53 18.5L54 18.1L55 17.5L56 17.6L57 17.0L58 16.4L59 16.1L60 15.8L61 16.1L62 16.0L63 15.5L64 14.6L65 14.2L66 14.8L67 13.9L68 13.3L69 13.4L70 13.1L71 12.7L72 12.3L73 11.8L74 11.7L75 11.3L75 9.0Z" fill="url(#r25)"/><rect x="29.500" y="9.0" width="11.500" height="14.9" fill="#f1d8d8"/><path d="M1 9.0H75" stroke="#8a90e0" stroke-width=".9"/><path d="M1 11.5L2 15.8L3 19.5L4 21.7L5 20.2L6 18.2L7 18.3L8 17.1L9 16.8L10 16.5L11 16.8L12 17.0L13 18.2L14 19.1L15 19.4L16 20.3L17 20.8L18 21.6L19 21.6L20 22.4L21 23.1L22 23.1L23 24.1L24 23.8L25 23.3L26 23.9L27 23.8L28 23.6L29 23.6" stroke="#d86464" stroke-width=".8" fill="none"/><path d="M41 23.3L42 22.4L43 22.1L44 21.8L45 21.4L46 20.5L47 21.0L48 20.0L49 19.4L50 19.4L51 19.5L52 19.0L53 18.5L54 18.1L55 17.5L56 17.6L57 17.0L58 16.4L59 16.1L60 15.8L61 16.1L62 16.0L63 15.5L64 14.6L65 14.2L66 14.8L67 13.9L68 13.3L69 13.4L70 13.1L71 12.7L72 12.3L73 11.8L74 11.7L75 11.3" stroke="#d86464" stroke-width=".8" fill="none"/></svg></div>
<div class="dt" style=""><div class="in" style="top:1px"><div class="pr">302.39<s></s></div><div class="ch">-1.14<s></s></div><div class="bd" style=""><u>▼</u>0.38<s>%</s></div><div class="hl">H:303.07<s></s><br>L:299.82<s></s></div></div></div>
</div>
<div class="row" style="top:198.65px;height:38.73px">
<div class="nm"><b style="">東証REIT</b>
</div>
<div class="ic">
<i class=""></i>
<span class="">10/01</span></div>
<div class="mc"><svg width="76" height="38.0" viewBox="0 0 76 38.0"><defs><linearGradient id="r26" x1="0" y1="2.8" x2="0" y2="32.8" gradientUnits="userSpaceOnUse"><stop offset="0" stop-color="#ecc6cc"/><stop offset="1" stop-color="#f27c7c"/></linearGradient></defs><rect x="0.5" y="0.5" width="75" height="37.0" rx="2" fill="#e7e7e7" stroke="#cfcfcf"/><path d="M1 34.0H75M35 1V37.0M70 1V37.0" stroke="#d4d4d4" stroke-width=".6"/><path d="M1 2.8L1 3.7L2 5.0L3 6.7L4 7.5L5 9.2L6 9.9L7 9.7L8 11.1L9 11.5L10 12.3L11 13.4L12 14.4L13 14.7L14 16.0L15 16.9L16 18.0L17 18.0L18 20.0L19 19.2L20 18.1L21 17.6L22 17.2L23 16.9L24 15.9L25 16.0L26 14.7L27 15.3L28 14.2L29 14.0L30 14.0L31 14.0L32 14.0L33 14.0L34 14.0L35 14.0L36 14.0L37 14.0L38 14.0L39 14.0L40 14.0L41 16.7L42 18.2L43 17.0L44 16.5L45 16.0L46 15.1L47 14.8L48 14.9L49 14.8L50 13.7L51 13.7L52 13.3L53 13.4L54 13.2L55 12.0L56 12.3L57 11.7L58 12.3L59 12.3L60 11.9L61 11.6L62 10.8L63 10.7L64 10.7L65 10.3L66 10.1L67 10.7L68 9.8L69 10.1L70 9.7L71 9.4L72 9.3L73 8.8L74 8.2L75 8.0L75 2.8Z" fill="url(#r26)"/><rect x="29.500" y="2.8" width="11.500" height="11.5" fill="#f1d8d8"/><path d="M1 2.8H75" stroke="#8a90e0" stroke-width=".9"/><path d="M1 3.7L2 5.0L3 6.7L4 7.5L5 9.2L6 9.9L7 9.7L8 11.1L9 11.5L10 12.3L11 13.4L12 14.4L13 14.7L14 16.0L15 16.9L16 18.0L17 18.0L18 20.0L19 19.2L20 18.1L21 17.6L22 17.2L23 16.9L24 15.9L25 16.0L26 14.7L27 15.3L28 14.2L29 14.0" stroke="#d86464" stroke-width=".8" fill="none"/><path d="M41 16.7L42 18.2L43 17.0L44 16.5L45 16.0L46 15.1L47 14.8L48 14.9L49 14.8L50 13.7L51 13.7L52 13.3L53 13.4L54 13.2L55 12.0L56 12.3L57 11.7L58 12.3L59 12.3L60 11.9L61 11.6L62 10.8L63 10.7L64 10.7L65 10.3L66 10.1L67 10.7L68 9.8L69 10.1L70 9.7L71 9.4L72 9.3L73 8.8L74 8.2L75 8.0" stroke="#d86464" stroke-width=".8" fill="none"/></svg></div>
<div class="dt" style=""><div class="in" style="top:1px"><div class="pr">1,912<s>.15</s></div><div class="ch">-8<s>.92</s></div><div class="bd" style=""><u>▼</u>0.46<s>%</s></div><div class="hl">H:1,923<s>.99</s><br>L:1,897<s>.38</s></div></div></div>
</div>
</div>
</div></body></html>
